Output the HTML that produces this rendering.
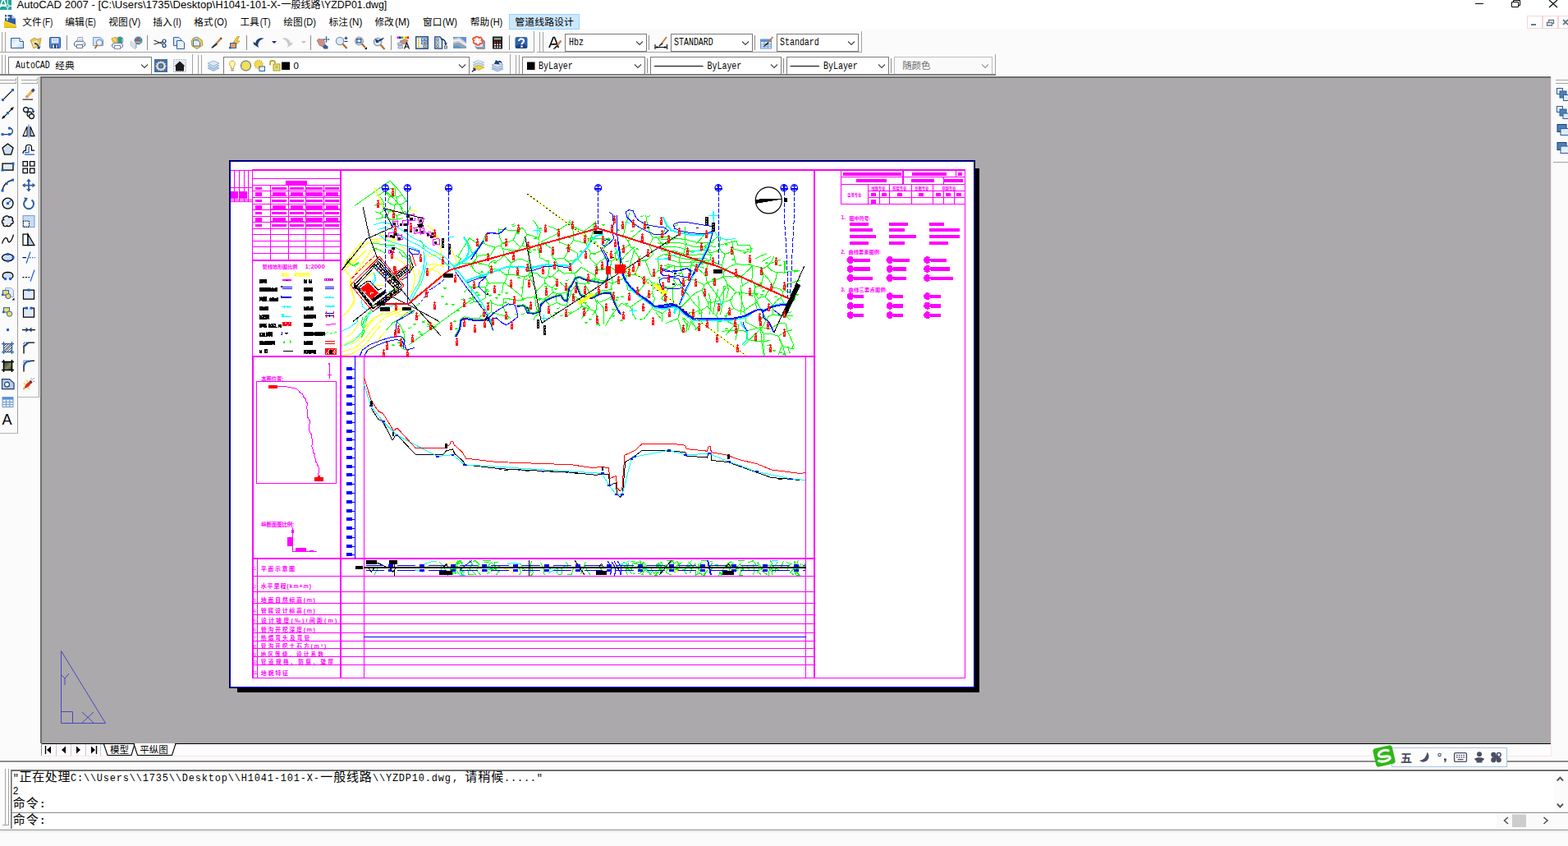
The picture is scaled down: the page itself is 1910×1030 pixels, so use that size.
<!DOCTYPE html>
<html lang="zh"><head><meta charset="utf-8"><title>AutoCAD 2007</title>
<style>
html,body{margin:0;padding:0;background:#fff;}
body{width:1910px;height:1030px;overflow:hidden;position:relative;font-family:"Liberation Sans",sans-serif;}
.l{position:absolute;}
#tb{left:0;top:35px;width:1910px;height:59px;background:#fbfbfb;}
#ld{left:0;top:94px;width:50px;height:832px;background:#fbfbfb;}
#rd{left:1889px;top:94px;width:21px;height:832px;background:#fbfbfb;}
#bt{left:0;top:905px;width:1910px;height:125px;background:#fbfbfb;}
#cv{left:49px;top:93px;width:1840px;height:812px;background:#aba9ac;border-top:2px solid #6e6e6e;border-left:2px solid #6e6e6e;box-sizing:border-box;}
svg{position:absolute;left:0;top:0;}
text{white-space:pre;}
.cj{font-family:"Liberation Sans","Noto Sans CJK SC",sans-serif;}
.cm{font-family:"Liberation Mono","Noto Sans CJK SC",monospace;}
</style></head><body>
<div class="l" id="tb"></div><div class="l" id="ld"></div><div class="l" id="rd"></div><div class="l" id="bt"></div><div class="l" id="cv"></div>
<svg id="dw" width="1910" height="1030" viewBox="0 0 1910 1030" shape-rendering="crispEdges">
<path d="M1187 205h6v638h-6zM289 837h904v6h-904zM279 195h909v643h-909z" fill="#000"/>
<path d="M280 196h907v641h-907z" fill="#0000ff"/>
<path d="M281 197h905v639h-905z" fill="#fff"/>
<path d="M307 206h869v2h-869zM307 206h1v228h-1zM307 433h2v393h-2zM307 825h869v1h-869zM1175 206h1v620h-1zM414 207h2v619h-2zM991 207h2v619h-2zM307 433h685v2h-685zM307 679h685v2h-685zM443 433h1v393h-1zM981 433h1v393h-1z" fill="#ff00ff"/>
<path d="M432 433h1v247h-1z" fill="#0000ff"/>
<path d="M281 207h26v1h-26zM285 207h1v38h-1zM291 207h1v38h-1zM297 207h1v38h-1zM302 207h1v38h-1zM281 228h26v1h-26zM281 243h26v1h-26zM281 245h26v1h-26zM281 233h9v9h-9zM292 233h9v9h-9zM307 701h685v1h-685zM307 720h685v1h-685zM307 734h685v1h-685zM307 748h685v1h-685zM307 759h685v1h-685zM307 770h685v1h-685zM307 780h685v1h-685zM307 789h685v1h-685zM307 799h685v1h-685zM307 809h685v1h-685zM313 680h1v146h-1z" fill="#ff00ff"/>
<path d="M443 775h539v1h-539z" fill="#0000ff"/>
<path d="M308 217h107v1h-107zM308 225h107v1h-107zM308 232h107v1h-107zM308 240h107v1h-107zM308 248h107v1h-107zM308 255h107v1h-107zM308 263h107v1h-107zM308 270h107v1h-107zM308 278h107v1h-107zM308 285h107v1h-107zM308 293h107v1h-107zM308 300h107v1h-107zM308 308h107v1h-107zM308 316h107v1h-107zM308 316h107v2h-107zM329 225h1v91h-1zM351 225h1v91h-1zM372 225h1v91h-1zM394 225h1v91h-1zM348 220h25.5v5h-25.5zM311 228h8v3.2h-8zM331 228h18v3.2h-18zM353 228h17v3.2h-17zM373 228h20v3.2h-20zM396 228h17v3.2h-17zM311 234h8v5h-8zM332 234h16v5h-16zM330 237.5h20v1.5h-20zM354 234h15v5h-15zM352 237.5h19v1.5h-19zM373 234h20v5h-20zM397 234h15v5h-15zM395 237.5h19v1.5h-19zM311 243h8v3.2h-8zM331 243h18v3.2h-18zM353 243h17v3.2h-17zM373 243h20v3.2h-20zM396 243h17v3.2h-17zM311 250h8v5h-8zM332 250h16v5h-16zM330 253.5h20v1.5h-20zM354 250h15v5h-15zM352 253.5h19v1.5h-19zM373 250h20v5h-20zM397 250h15v5h-15zM395 253.5h19v1.5h-19zM311 258h8v3.2h-8zM331 258h18v3.2h-18zM353 258h17v3.2h-17zM373 258h20v3.2h-20zM396 258h17v3.2h-17zM311 265h8v5h-8zM332 265h16v5h-16zM330 268.5h20v1.5h-20zM354 265h15v5h-15zM352 268.5h19v1.5h-19zM373 265h20v5h-20zM397 265h15v5h-15zM395 268.5h19v1.5h-19zM311 273h8v3.2h-8zM331 273h18v3.2h-18zM353 273h17v3.2h-17zM373 273h20v3.2h-20zM396 273h17v3.2h-17z" fill="#ff00ff"/>
<text class="cj" x="319.5" y="327.3" font-size="6.2" font-weight="bold" fill="#ff00ff" textLength="43">管线地形图比例</text>
<text class="cj" x="371.4" y="327.2" font-size="7.8" font-weight="bold" fill="#ff00ff" textLength="24.4">1:2000</text>
<text class="cj" x="342.4" y="336.3" font-size="5.1" font-weight="bold" fill="#ffff00" textLength="35.6">地形、地物图例</text>
<path d="M316.1 340h8.7v4.7h-8.7z" fill="#000"/>
<path d="M320.96 343.7h1v1h-1z" fill="#fff"/>
<path d="M316.1 350h21.9v5h-21.9z" fill="#000"/>
<path d="M332.66 350h1v1h-1zM333.58 350h1v1h-1zM329.71 350h1v1h-1z" fill="#fff"/>
<path d="M316 361h9.4v5.8h-9.4z" fill="#000"/>
<path d="M317.37 361h1v1h-1zM319.43 361h1v1h-1zM316.6 365.8h1v1h-1zM317.9 365.8h1v1h-1z" fill="#fff"/>
<path d="M327.7 361.5h11.1v5.3h-11.1z" fill="#000"/>
<path d="M329.7 361.5h1v1h-1zM334.01 361.5h1v1h-1zM328.22 361.5h1v1h-1zM335.47 361.5h1v1h-1zM336.4 361.5h1v1h-1z" fill="#fff"/>
<path d="M325.6 365.5h1.2v1.3h-1.2zM316 373.3h10.9v4.6h-10.9z" fill="#000"/>
<path d="M321.46 373.3h1v1h-1z" fill="#fff"/>
<path d="M316 383.4h11.7v5.6h-11.7z" fill="#000"/>
<path d="M318.32 383.4h1v1h-1zM326.17 388h1v1h-1zM316.72 383.4h1v1h-1zM319.14 385.26h1v1h-1zM322.36 385.95h1v1h-1z" fill="#fff"/>
<path d="M316 393.6h9.4v5.3h-9.4z" fill="#000"/>
<path d="M319.1 397.9h1v1h-1zM320.2 397.9h1v1h-1zM320.14 397.9h1v1h-1zM324.01 394.65h1v1h-1z" fill="#fff"/>
<path d="M327 393.6h8.9v5.3h-8.9z" fill="#000"/>
<path d="M330.08 395.53h1v1h-1zM333.17 395.44h1v1h-1zM333.56 395.64h1v1h-1zM328.8 393.6h1v1h-1z" fill="#fff"/>
<path d="M339.4 394.5h3.5v4.4h-3.5z" fill="#000"/>
<path d="M340.11 397.9h1v1h-1z" fill="#fff"/>
<path d="M336.4 397.6h1.2v1.3h-1.2zM316 404.5h6.5v5.5h-6.5z" fill="#000"/>
<path d="M318.15 406.39h1v1h-1zM317.7 406.66h1v1h-1z" fill="#fff"/>
<path d="M324.2 404h7.6v6h-7.6z" fill="#000"/>
<path d="M329.12 409h1v1h-1zM324.92 404h1v1h-1zM325.93 409h1v1h-1z" fill="#fff"/>
<path d="M322.8 408.5h1v1.5h-1zM316.1 415.2h18.9v4.7h-18.9z" fill="#000"/>
<path d="M332.39 418.9h1v1h-1zM321.34 415.2h1v1h-1z" fill="#fff"/>
<path d="M316 425.5h3v4.8h-3z" fill="#000"/>
<path d="M316.91 425.5h1v1h-1z" fill="#fff"/>
<path d="M321.9 425h4.1v5.3h-4.1z" fill="#000"/>
<path d="M324.32 427.44h1v1h-1z" fill="#fff"/>
<path d="M370 339.5h4.3v5.2h-4.3z" fill="#000"/>
<path d="M372.29 339.5h1v1h-1z" fill="#fff"/>
<path d="M375.5 339.5h4.6v5.2h-4.6z" fill="#000"/>
<path d="M378.09 340.68h1v1h-1zM377.55 339.5h1v1h-1z" fill="#fff"/>
<path d="M370 350h11v5h-11z" fill="#000"/>
<path d="M377.39 354h1v1h-1z" fill="#fff"/>
<path d="M370 361h11v4.9h-11z" fill="#000"/>
<path d="M378.18 364.9h1v1h-1z" fill="#fff"/>
<path d="M370 372.7h11.9v5.2h-11.9z" fill="#000"/>
<path d="M377.14 374.02h1v1h-1zM370.83 372.7h1v1h-1zM371.83 372.7h1v1h-1zM376.93 372.7h1v1h-1zM372.22 372.7h1v1h-1z" fill="#fff"/>
<path d="M370 383.2h14.8v4.6h-14.8z" fill="#000"/>
<path d="M381.57 386.8h1v1h-1zM372.35 383.2h1v1h-1z" fill="#fff"/>
<path d="M370 393h11v5h-11z" fill="#000"/>
<path d="M379.58 397h1v1h-1z" fill="#fff"/>
<path d="M370 404.1h25.9v4.7h-25.9z" fill="#000"/>
<path d="M393.74 407.8h1v1h-1zM382.09 407.8h1v1h-1zM381.88 404.1h1v1h-1z" fill="#fff"/>
<path d="M370 415.2h11v4.7h-11z" fill="#000"/>
<path d="M371.55 415.2h1v1h-1z" fill="#fff"/>
<path d="M370 425.5h15.4v5.2h-15.4z" fill="#000"/>
<path d="M379.09 429.7h1v1h-1zM372.97 427.58h1v1h-1zM381.21 429.7h1v1h-1zM371.36 429.7h1v1h-1zM380.02 429.7h1v1h-1zM375.48 429.7h1v1h-1z" fill="#fff"/>
<path d="M343.8 340h11.3v2h-11.3z" fill="#ff00ff"/>
<path d="M349 340.6h1v1h-1z" fill="#000"/>
<path d="M344 349h12v1h-12zM344 351h12v1h-12z" fill="#0000ff"/>
<path d="M342.3 348h2v1.5h-2z" fill="#000"/>
<path d="M342.3 361h12.7v2h-12.7z" fill="#0000ff"/>
<path d="M342.3 359.5h1v1.5h-1z" fill="#000"/>
<path d="M343 373h12v1h-12zM346 372h1v3h-1zM349.5 372h1v3h-1zM352 373h1v2h-1zM343.2 382h2.3v3.5h-2.3zM343.2 385h11.8v1h-11.8zM349 384h1v1h-1z" fill="#00ffff"/>
<path d="M344 392h11v5.2h-11z" fill="#ff0000"/>
<path d="M347 393h1.5v1h-1.5zM351.5 393h1.5v1h-1.5z" fill="#fff"/>
<path d="M348.5 394.5h3v1h-3z" fill="#ff00ff"/>
<path d="M349.5 396h1v1.2h-1z" fill="#fff"/>
<path d="M342.6 404.2h1v3h-1zM342 406.5h2.4v1h-2.4z" fill="#0000ff"/>
<path d="M347 404.5h3.6v1h-3.6zM348 405.5h1.6v1h-1.6z" fill="#000"/>
<path d="M345 416h2v1.6h-2zM346 415h1v1h-1zM353 414.2h1v3.8h-1zM354 415.5h1v1h-1z" fill="#00ff00"/>
<path d="M345.2 427h11.6v1h-11.6z" fill="#000"/>
<rect x="395.5" y="339.5" width="10" height="2" fill="none" stroke="#ff00ff"/>
<path d="M397 340h1v1h-1zM399.5 340h1v1h-1zM402 340h1v1h-1zM404.2 340h1v1h-1z" fill="#000"/>
<path d="M396 349h11v1h-11zM396 351.4h11v1h-11z" fill="#0000ff"/>
<path d="M395 362.3h12v1h-12zM397 361.3h1.5v1h-1.5zM401 361.3h1.5v1h-1.5zM404.5 361.3h1.5v1h-1.5zM396 372h12v1h-12zM397.5 373.4h9v1h-9z" fill="#00ffff"/>
<path d="M396 380.8h11v1h-11zM396 384.3h11v1h-11z" fill="#0000ff"/>
<path d="M396.5 378.6h1v3.4h-1zM396.5 383.4h1v3.4h-1zM406.3 378.6h1v3.4h-1zM406.3 383.4h1v3.4h-1z" fill="#ff0000"/>
<path d="M401.3 383.4h1v2.2h-1z" fill="#000"/>
<path d="M397 395.2h6v1h-6zM402.5 394.2h6.3v1h-6.3z" fill="#ff00ff"/>
<path d="M396 405.5h1.5v1.2h-1.5zM397.5 404.2h1.5v1.2h-1.5zM401.5 405.8h1.5v1.2h-1.5zM403 405h1.5v1.2h-1.5zM406.5 404.6h1.5v1.2h-1.5zM408 403.6h1.5v1.2h-1.5z" fill="#00ff00"/>
<path d="M396 414.8h12v1h-12zM396 417.5h12v1h-12zM396 424.2h13.8v7.3h-13.8z" fill="#ff0000"/>
<path d="M397.5 430.5L402 425.2M399.8 430.8L404.3 425.4M404.5 430.6L408.8 425.3M406.8 430.8L409 428" stroke="#fff" stroke-width="0.9" fill="none"/>
<path d="M401 425.8h4v5.2h-4z" fill="#000"/>
<path d="M401 442h1v19h-1zM400 442h2v2h-2zM399 456h5v1h-5z" fill="#ff00ff"/>
<text class="cj" x="318.2" y="464" font-size="6.3" font-weight="bold" fill="#ff00ff" textLength="27.2">本图位置:</text>
<rect x="312.5" y="464.5" width="97" height="124" fill="none" stroke="#ff00ff"/>
<path d="M327 469h10.5v3.5h-10.5zM383 581h10.7v4.8h-10.7zM386.5 579h3v2h-3z" fill="#ff0000"/>
<path d="M337.35 470.35L340.25 470.04L342.53 470.1L344.38 470.01L346.66 470.36L349.02 470.45L351.89 471.63L353.45 471.42L356.14 472.54L358.11 472.4L360.65 473.2L362.46 474.6L363.5 475.62L365.05 477.64L366.19 478.72L368.19 479.87L369.39 481.54L370.02 483.67L372.25 485.93L372.56 488.07L373.58 489.76L374.91 492.2L373.81 494.05L373.88 496.34L373.82 497.79L374.67 500.26L374.38 503.54L374.51 505.99L375.01 508.48L376.69 510.69L377.53 512.81L377.11 515.4L376.78 517.58L376.98 520.44L376.96 522.47L376.87 524.82L378.21 527.49L379.11 528.76L379.16 531.13L379.33 532.96L380.03 534.27L380.37 536.57L380.98 537.75L380.85 540.68L379.92 542.57L380.07 545.38L381.11 547.34L381.01 548.88L381.8 551.38L383.3 552.63L382.87 554.69L383.63 556.98L384.62 558.74L384.3 560.88L385.32 563.07L386.79 564.84L386.84 566.42L387.75 567.55L388.39 570.26L388.68 572.26L388.35 573.9L387.98 576.11L387.95 577.53L388.6 580" fill="none" stroke="#ff00ff" stroke-width="1"/>
<text class="cj" x="318.2" y="641.4" font-size="6.4" font-weight="bold" fill="#ff00ff" textLength="40">纵断面图比例:</text>
<path d="M355.5 642h1v29.5h-1zM354.5 645h3v4h-3zM350 654h5.5v11h-5.5zM355.5 671h30.5v1h-30.5zM359.5 667h13.5v4.5h-13.5zM377 669.5h5v2.5h-5z" fill="#ff00ff"/>
<text class="cj" x="308.7" y="694.1" font-size="5.7" fill="#ff00ff">1</text>
<text class="cj" x="317.8" y="694.7" font-size="7" font-weight="bold" fill="#ff00ff" textLength="41.2">平面示意图</text>
<text class="cj" x="308.7" y="715.6" font-size="5.7" fill="#ff00ff">2</text>
<text class="cj" x="317.7" y="715.9" font-size="7" font-weight="bold" fill="#ff00ff" textLength="61.4">水平里程(km+m)</text>
<text class="cj" x="308.6" y="733.1" font-size="5.7" fill="#ff00ff">3</text>
<text class="cj" x="317.7" y="733.4" font-size="7" font-weight="bold" fill="#ff00ff" textLength="66.2">地面自然标高(m)</text>
<text class="cj" x="308.6" y="745.6" font-size="5.7" fill="#ff00ff">4</text>
<text class="cj" x="317.7" y="745.9" font-size="7" font-weight="bold" fill="#ff00ff" textLength="66.2">管底设计标高(m)</text>
<text class="cj" x="308.6" y="757.6" font-size="5.7" fill="#ff00ff">5</text>
<text class="cj" x="317.8" y="757.9" font-size="7" font-weight="bold" fill="#ff00ff" textLength="92.5">设计坡度(‰)/间距(m)</text>
<text class="cj" x="308.7" y="769.1" font-size="5.7" fill="#ff00ff">6</text>
<text class="cj" x="317.7" y="769.4" font-size="7" font-weight="bold" fill="#ff00ff" textLength="66.2">管沟开挖深度(m)</text>
<text class="cj" x="308.7" y="778.6" font-size="5.7" fill="#ff00ff">7</text>
<text class="cj" x="317.7" y="778.9" font-size="6.7" font-weight="bold" fill="#ff00ff" textLength="59.5">热煨弯头及弯管</text>
<text class="cj" x="308.7" y="788.6" font-size="5.7" fill="#ff00ff">8</text>
<text class="cj" x="317.7" y="788.8" font-size="6.7" font-weight="bold" fill="#ff00ff" textLength="79.6">管沟开挖土石方(m³)</text>
<text class="cj" x="308.7" y="798.6" font-size="5.7" fill="#ff00ff">9</text>
<text class="cj" x="317.6" y="798.7" font-size="6.6" font-weight="bold" fill="#ff00ff" textLength="76.2">地区等级、设计系数</text>
<text class="cj" x="308.4" y="808.1" font-size="5.2" fill="#ff00ff" textLength="4.8">10</text>
<text class="cj" x="317.7" y="808.3" font-size="6.6" font-weight="bold" fill="#ff00ff" textLength="88.4">管道规格、防腐、壁厚</text>
<text class="cj" x="308.4" y="821.1" font-size="5.2" fill="#ff00ff" textLength="4.8">11</text>
<text class="cj" x="317.7" y="821.5" font-size="7" font-weight="bold" fill="#ff00ff" textLength="33.3">地貌特征</text>
<path d="M1024 207h1v42h-1zM1024 215h152v1h-152zM1024 224h152v1h-152zM1024 248h152v1h-152zM1057 232h119v1h-119zM1057 240h119v1h-119zM1099 207h2v17h-2zM1164 207h1v8h-1zM1149 215h1v9h-1zM1057 224h1v24h-1zM1083 224h1v24h-1zM1110 224h1v24h-1zM1136 224h1v24h-1zM1071 232h1v16h-1zM1149 232h1v16h-1zM1162 232h1v16h-1zM1026.6 209.5h71v4h-71zM1111 209.5h42v4h-42zM1166.7 209.5h5v4h-5zM1043 218h36.5v4.2h-36.5zM1110 218h27.7v4.2h-27.7zM1150.3 218h22.7v4.2h-22.7z" fill="#ff00ff"/>
<text class="cj" x="1061.2" y="230.6" font-size="4.4" font-weight="bold" fill="#ff00ff" textLength="17.3">线路专业</text>
<text class="cj" x="1087.3" y="230.6" font-size="4.4" font-weight="bold" fill="#ff00ff" textLength="17.2">防腐专业</text>
<text class="cj" x="1114.1" y="230.6" font-size="4.4" font-weight="bold" fill="#ff00ff" textLength="17.4">总图专业</text>
<text class="cj" x="1147.2" y="230.6" font-size="4.4" font-weight="bold" fill="#ff00ff" textLength="17.3">穿越专业</text>
<text class="cj" x="1032.1" y="238.6" font-size="4.4" font-weight="bold" fill="#ff00ff" textLength="17.4">会签专业</text>
<path d="M1061 234.5h5.5v4h-5.5zM1074 234.5h5.5v4h-5.5zM1093 234.5h5.5v4h-5.5zM1119 234.5h5.5v4h-5.5zM1140 234.5h5.5v4h-5.5zM1152 234.5h5.5v4h-5.5zM1165 234.5h5.5v4h-5.5zM1061 242.5h5.5v5h-5.5z" fill="#ff00ff"/>
<text class="cj" x="1024.6" y="267.2" font-size="6.5" font-weight="bold" fill="#ff00ff">1.</text>
<text class="cj" x="1034.5" y="267.6" font-size="6.2" font-weight="bold" fill="#ff00ff" textLength="26">图中符号:</text>
<path d="M1035 270.8h22.7v4h-22.7zM1083 270.8h22.7v4h-22.7zM1131.8 270.8h18v4h-18zM1035 278.4h27.8v4h-27.8zM1083 278.4h18.7v4h-18.7zM1131.8 278.4h37.4v4h-37.4zM1035 286h32v4h-32zM1083 286h32.8v4h-32.8zM1131.8 286h37.4v4h-37.4zM1035 293.5h22.7v4h-22.7zM1083 293.5h18.7v4h-18.7zM1131.8 293.5h22.7v4h-22.7z" fill="#ff00ff"/>
<text class="cj" x="1024.2" y="309" font-size="6.5" font-weight="bold" fill="#ff00ff">2.</text>
<text class="cj" x="1033.6" y="309.4" font-size="6.2" font-weight="bold" fill="#ff00ff" textLength="39.5">曲线要素图例:</text>
<circle cx="1035.9" cy="316.5" r="4.4" fill="#ff00ff"/>
<path d="M1040.3 314.5h19.6v4.6h-19.6z" fill="#ff00ff"/>
<path d="M1038.5 314h1v1h-1zM1038.5 318h1v1h-1z" fill="#fff"/>
<circle cx="1083.9" cy="316.5" r="4.4" fill="#ff00ff"/>
<path d="M1088.3 314.5h19.7v4.6h-19.7z" fill="#ff00ff"/>
<path d="M1086.5 314h1v1h-1zM1086.5 318h1v1h-1z" fill="#fff"/>
<circle cx="1129.6" cy="316.5" r="4.4" fill="#ff00ff"/>
<path d="M1134 314.5h18.9v4.6h-18.9z" fill="#ff00ff"/>
<path d="M1132.2 314h1v1h-1zM1132.2 318h1v1h-1z" fill="#fff"/>
<circle cx="1035.9" cy="327.4" r="4.4" fill="#ff00ff"/>
<path d="M1040.3 325.4h19.6v4.6h-19.6z" fill="#ff00ff"/>
<path d="M1038.5 324.9h1v1h-1zM1038.5 328.9h1v1h-1z" fill="#fff"/>
<circle cx="1083.9" cy="327.4" r="4.4" fill="#ff00ff"/>
<path d="M1088.3 325.4h15.7v4.6h-15.7z" fill="#ff00ff"/>
<path d="M1086.5 324.9h1v1h-1zM1086.5 328.9h1v1h-1z" fill="#fff"/>
<circle cx="1129.6" cy="327.4" r="4.4" fill="#ff00ff"/>
<path d="M1134 325.4h23v4.6h-23z" fill="#ff00ff"/>
<path d="M1132.2 324.9h1v1h-1zM1132.2 328.9h1v1h-1z" fill="#fff"/>
<circle cx="1035.9" cy="338.5" r="4.4" fill="#ff00ff"/>
<path d="M1040.3 336.5h22.7v4.6h-22.7z" fill="#ff00ff"/>
<path d="M1038.5 336h1v1h-1zM1038.5 340h1v1h-1z" fill="#fff"/>
<circle cx="1083.9" cy="338.5" r="4.4" fill="#ff00ff"/>
<path d="M1088.3 336.5h15.7v4.6h-15.7z" fill="#ff00ff"/>
<path d="M1086.5 336h1v1h-1zM1086.5 340h1v1h-1z" fill="#fff"/>
<circle cx="1129.6" cy="338.5" r="4.4" fill="#ff00ff"/>
<path d="M1134 336.5h27v4.6h-27z" fill="#ff00ff"/>
<path d="M1132.2 336h1v1h-1zM1132.2 340h1v1h-1z" fill="#fff"/>
<text class="cj" x="1024.2" y="354.5" font-size="6.5" font-weight="bold" fill="#ff00ff">3.</text>
<text class="cj" x="1033.6" y="354.9" font-size="6.2" font-weight="bold" fill="#ff00ff" textLength="47.3">曲线三要点图例:</text>
<circle cx="1035.9" cy="360.7" r="4.4" fill="#ff00ff"/>
<path d="M1040.3 358.7h11.6v4.6h-11.6z" fill="#ff00ff"/>
<path d="M1038.5 358.2h1v1h-1zM1038.5 362.2h1v1h-1z" fill="#fff"/>
<circle cx="1083.9" cy="360.7" r="4.4" fill="#ff00ff"/>
<path d="M1088.3 358.7h11.7v4.6h-11.7z" fill="#ff00ff"/>
<path d="M1086.5 358.2h1v1h-1zM1086.5 362.2h1v1h-1z" fill="#fff"/>
<circle cx="1129.6" cy="360.7" r="4.4" fill="#ff00ff"/>
<path d="M1134 358.7h12v4.6h-12z" fill="#ff00ff"/>
<path d="M1132.2 358.2h1v1h-1zM1132.2 362.2h1v1h-1z" fill="#fff"/>
<circle cx="1035.9" cy="372.3" r="4.4" fill="#ff00ff"/>
<path d="M1040.3 370.3h11.6v4.6h-11.6z" fill="#ff00ff"/>
<path d="M1038.5 369.8h1v1h-1zM1038.5 373.8h1v1h-1z" fill="#fff"/>
<circle cx="1083.9" cy="372.3" r="4.4" fill="#ff00ff"/>
<path d="M1088.3 370.3h11.7v4.6h-11.7z" fill="#ff00ff"/>
<path d="M1086.5 369.8h1v1h-1zM1086.5 373.8h1v1h-1z" fill="#fff"/>
<circle cx="1129.6" cy="372.3" r="4.4" fill="#ff00ff"/>
<path d="M1134 370.3h12v4.6h-12z" fill="#ff00ff"/>
<path d="M1132.2 369.8h1v1h-1zM1132.2 373.8h1v1h-1z" fill="#fff"/>
<circle cx="1035.9" cy="383.7" r="4.4" fill="#ff00ff"/>
<path d="M1040.3 381.7h11.6v4.6h-11.6z" fill="#ff00ff"/>
<path d="M1038.5 381.2h1v1h-1zM1038.5 385.2h1v1h-1z" fill="#fff"/>
<circle cx="1083.9" cy="383.7" r="4.4" fill="#ff00ff"/>
<path d="M1088.3 381.7h11.7v4.6h-11.7z" fill="#ff00ff"/>
<path d="M1086.5 381.2h1v1h-1zM1086.5 385.2h1v1h-1z" fill="#fff"/>
<circle cx="1129.6" cy="383.7" r="4.4" fill="#ff00ff"/>
<path d="M1134 381.7h12v4.6h-12z" fill="#ff00ff"/>
<path d="M1132.2 381.2h1v1h-1zM1132.2 385.2h1v1h-1z" fill="#fff"/>
<path d="M422 447h7v4h-7zM429 449h3v1h-3zM422 458h7v4h-7zM429 460h3v1h-3zM422 469h7v4h-7zM429 471h3v1h-3zM422 480h7v4h-7zM429 482h3v1h-3zM422 490h7v4h-7zM429 492h3v1h-3zM422 501h7v4h-7zM429 503h3v1h-3zM422 512h7v4h-7zM429 514h3v1h-3zM422 523h7v4h-7zM429 525h3v1h-3zM422 533h7v4h-7zM429 535h3v1h-3zM422 544h7v4h-7zM429 546h3v1h-3zM422 555h7v4h-7zM429 557h3v1h-3zM422 566h7v4h-7zM429 568h3v1h-3zM422 576h7v4h-7zM429 578h3v1h-3zM422 587h7v4h-7zM429 589h3v1h-3zM422 598h7v4h-7zM429 600h3v1h-3zM422 609h7v4h-7zM429 611h3v1h-3zM422 620h7v4h-7zM429 622h3v1h-3zM422 630h7v4h-7zM429 632h3v1h-3zM422 641h7v4h-7zM429 643h3v1h-3zM422 652h7v4h-7zM429 654h3v1h-3zM422 663h7v4h-7zM429 665h3v1h-3zM422 673h7v4h-7zM429 675h3v1h-3z" fill="#0000ff"/>
<path d="M452.2 497L461 510.8L465.6 512L478.2 536L482.7 528.5L506 553.2L540 553.2L543.8 548.7L551.4 546.9L553.9 552.4L564 561.3L566.5 565.8L608.2 570.6L696.5 575.2L724.3 578.2L741.5 577.2L742.7 590.8L750.3 587.8L751.5 601.7L755.3 605.4L758.4 601.7L761.6 562.5L773 555.5L782.3 548.2L798.2 548.2L834.8 550.4L836.1 555L861.3 557L863.8 551.2L865.9 551.2L866.9 560.5L886.6 562.5L939.6 581.5L972.4 584" fill="none" stroke="#000" stroke-width="1"/>
<path d="M443.4 467.9L451.7 494.4L466.8 513.3L483.2 529.7L532.5 555.5L551.4 553.7L565.8 565.8L733.5 576.4L741.5 590.8L750.3 601.7L757.9 602.4L769.2 558.8L773 556.2L814.6 548.2L834.8 553.7L863.8 552.4L887.8 562L921.9 574.4L962.3 582.7L981.2 584.5" fill="none" stroke="#00ffff" stroke-width="1"/>
<path d="M443.4 459L452.2 488L461 500.7L466.8 503.7L479.5 524.7L483.8 521L506 545.4L541.3 545.4L547.6 541.6L549.4 537.3L551.9 537.3L553.2 541.6L562.7 550L567.8 558.2L605.6 562.5L696.5 565.8L721.7 569.6L732.6 568.3L741.5 569.6L742.7 582.7L750.3 579.4L752 594.6L755.3 597.9L757.9 594.6L760.9 554.2L773 548.7L782.3 540.3L819.7 540.3L834.8 542.3L836.1 546.6L861.3 549.2L863.3 543.1L865.1 543.1L866.4 550.7L884 553.7L901.7 560L921.9 564.6L939.6 571.9L973.6 576.4L981.2 575.7" fill="none" stroke="#ff0000" stroke-width="1"/>
<path d="M450.2 493.4h3.5v2h-3.5zM465.3 512.3h3.5v2h-3.5zM481.7 528.7h3.5v2h-3.5zM531 554.5h3.5v2h-3.5zM549.9 552.7h3.5v2h-3.5zM564.3 564.8h3.5v2h-3.5zM732 575.4h3.5v2h-3.5zM740 589.8h3.5v2h-3.5zM748.8 600.7h3.5v2h-3.5zM756.4 601.4h3.5v2h-3.5zM767.7 557.8h3.5v2h-3.5zM771.5 555.2h3.5v2h-3.5zM813.1 547.2h3.5v2h-3.5zM833.3 552.7h3.5v2h-3.5zM862.3 551.4h3.5v2h-3.5zM886.3 561h3.5v2h-3.5zM920.4 573.4h3.5v2h-3.5zM960.8 581.7h3.5v2h-3.5zM607.5 570.5h3.5v1.5h-3.5zM630.5 571.8h3.5v1.5h-3.5zM659.5 573.1h3.5v1.5h-3.5zM688.5 574.7h3.5v1.5h-3.5zM900.5 567h3.5v1.5h-3.5z" fill="#0000ff"/>
<path d="M451.2 488h2.5v5.5h-2.5zM477.7 525.5h2.5v5.5h-2.5zM542.3 540.1h2.5v5.5h-2.5zM732.8 567.9h2.5v5.5h-2.5zM886.3 553.2h2.5v5.5h-2.5zM614 571.6h5v1h-5zM640 572.8h5v1h-5zM670 574.4h5v1h-5zM700 576h5v1h-5zM948 582.5h5v1h-5zM969 584h5v1h-5z" fill="#000"/>
<path d="M541.27 688.9L541.54 692.41L545.26 700L545.89 700" fill="none" stroke="#00ff00" stroke-width="1"/>
<path d="M578.46 682.03L583.72 687.03L580.31 694.29L585.45 700" fill="none" stroke="#00ff00" stroke-width="1"/>
<path d="M683.48 691.95L685.25 694.19L683.87 699.68L680.14 700" fill="none" stroke="#00ff00" stroke-width="1"/>
<path d="M647.7 683.55L644.07 692.04L644.06 697.91" fill="none" stroke="#00ff00" stroke-width="1"/>
<path d="M634.35 686.85L636.66 692.14L640.69 694.66" fill="none" stroke="#00ff00" stroke-width="1"/>
<path d="M558.23 688.74L554.58 694.07L558.67 697.48" fill="none" stroke="#00ff00" stroke-width="1"/>
<path d="M937.82 690.88L936.03 699.56L936.54 700L936.87 700" fill="none" stroke="#00ff00" stroke-width="1"/>
<path d="M891.25 683.59L886.28 686.08L887.87 691.74L889.16 695.97" fill="none" stroke="#00ff00" stroke-width="1"/>
<path d="M967.54 683.13L969.43 690.96L968.09 698.3" fill="none" stroke="#00ff00" stroke-width="1"/>
<path d="M941.24 684.46L936.96 692.15L940.5 696.78" fill="none" stroke="#00ff00" stroke-width="1"/>
<path d="M812.39 688.76L811.87 697.68L817.45 700" fill="none" stroke="#00ff00" stroke-width="1"/>
<path d="M916.9 686.91L919.23 695.46L916.94 700L916.77 700" fill="none" stroke="#00ff00" stroke-width="1"/>
<path d="M842.76 682.57L838.33 686.38L836.52 691.32L833.4 693.8" fill="none" stroke="#00ff00" stroke-width="1"/>
<path d="M631.82 690.99L635.02 696.34L632.8 700" fill="none" stroke="#00ff00" stroke-width="1"/>
<path d="M729.9 689.29L735.38 697.58L734.41 700" fill="none" stroke="#00ff00" stroke-width="1"/>
<path d="M647.86 689.73L649.25 697.67L647.64 700L645.68 700" fill="none" stroke="#00ff00" stroke-width="1"/>
<path d="M460.35 691.54L458.26 695.82L456.01 700" fill="none" stroke="#00ff00" stroke-width="1"/>
<path d="M675.24 688.83L671.7 691.5L667.74 693.67" fill="none" stroke="#00ff00" stroke-width="1"/>
<path d="M688.71 683.41L690.91 686.29L691.84 690.56" fill="none" stroke="#00ff00" stroke-width="1"/>
<path d="M713.29 684.2L710.29 692.2L707.51 699.41" fill="none" stroke="#00ff00" stroke-width="1"/>
<path d="M850.94 688.04L854.64 690.09L854.74 692.54" fill="none" stroke="#00ff00" stroke-width="1"/>
<path d="M854.53 683.75L852.31 690.63L850.76 692.92" fill="none" stroke="#00ff00" stroke-width="1"/>
<path d="M658.38 685.09L662.37 692.72L662.76 698.73L663.76 700" fill="none" stroke="#00ff00" stroke-width="1"/>
<path d="M766.06 685.24L764.27 691.61L767.61 694.94L769.39 699.22" fill="none" stroke="#00ff00" stroke-width="1"/>
<path d="M560.29 682.65L556.48 685.19L552.28 692.89L555.64 698.02" fill="none" stroke="#00ff00" stroke-width="1"/>
<path d="M779.99 682.2L780.17 687.79L784.8 690.28L780.07 696.91" fill="none" stroke="#00ff00" stroke-width="1"/>
<path d="M763.26 686.05L763.28 689.7L762.52 695.11L764.47 700" fill="none" stroke="#00ff00" stroke-width="1"/>
<path d="M712.26 689.17L715.83 695.56L719.17 700" fill="none" stroke="#00ff00" stroke-width="1"/>
<path d="M904.21 688.99L901.91 697.41L901.15 700L905.22 700" fill="none" stroke="#00ff00" stroke-width="1"/>
<path d="M972.36 682.06L969.58 690.19L972.46 692.83L969.39 698.49" fill="none" stroke="#00ff00" stroke-width="1"/>
<path d="M779.24 685.75L785.06 694.69L781.89 699.72L784.35 700" fill="none" stroke="#00ff00" stroke-width="1"/>
<path d="M759.22 683.89L764.68 688.14L762.48 696.06" fill="none" stroke="#00ff00" stroke-width="1"/>
<path d="M535.23 684L538.11 687.1L537.43 691.91L537.5 698.57" fill="none" stroke="#00ff00" stroke-width="1"/>
<path d="M805.2 688.68L801.28 697.5L798.65 700L800.58 700" fill="none" stroke="#00ff00" stroke-width="1"/>
<path d="M647.3 682.75L646.68 687.84L646.63 696.77" fill="none" stroke="#00ff00" stroke-width="1"/>
<path d="M947.43 683.48L944.53 688.07L939.56 691.24L940.84 699.62" fill="none" stroke="#00ff00" stroke-width="1"/>
<path d="M681.02 690.41L678.09 695.23L679.16 698.8L682.98 700" fill="none" stroke="#00ff00" stroke-width="1"/>
<path d="M938.86 690.84L941.11 693.35L940.9 700" fill="none" stroke="#00ff00" stroke-width="1"/>
<path d="M972.31 688.58L967.96 696.29L969.64 700" fill="none" stroke="#00ff00" stroke-width="1"/>
<path d="M701.39 690L698.07 693.08L696.24 699.56L691.34 700" fill="none" stroke="#00ff00" stroke-width="1"/>
<path d="M804.46 683.86L806.92 687.19L804.89 689.6" fill="none" stroke="#00ff00" stroke-width="1"/>
<path d="M811.04 688.53L806.39 692.16L805.34 695.91" fill="none" stroke="#00ff00" stroke-width="1"/>
<path d="M559.06 683.94L554.92 691.73L552.27 694.01L551.15 699.74" fill="none" stroke="#00ff00" stroke-width="1"/>
<path d="M783.56 683.74L783.99 686.88L788.36 694.52L793.33 700" fill="none" stroke="#00ff00" stroke-width="1"/>
<path d="M568.65 689.78L574.33 694.51L579.69 700" fill="none" stroke="#00ff00" stroke-width="1"/>
<path d="M597.81 682.18L594.06 682L588.39 682" fill="none" stroke="#00ff00" stroke-width="1"/>
<path d="M594.9 684.92L595.41 684.28L592.35 684.97L590.07 684.82" fill="none" stroke="#00ff00" stroke-width="1"/>
<path d="M596.1 697.28L593.21 699.07" fill="none" stroke="#00ff00" stroke-width="1"/>
<path d="M569.52 692.75L570.97 699.67L576.82 700" fill="none" stroke="#00ff00" stroke-width="1"/>
<path d="M595.33 697.75L592.07 693.14L598.13 693.94L603.77 694.62" fill="none" stroke="#00ff00" stroke-width="1"/>
<path d="M554.86 685.84L556.84 685.88L557.27 682.36" fill="none" stroke="#00ff00" stroke-width="1"/>
<path d="M560.58 684.95L557.47 685.15L552 690.32" fill="none" stroke="#00ff00" stroke-width="1"/>
<path d="M560.17 694.63L561.8 699.06L565.37 700" fill="none" stroke="#00ff00" stroke-width="1"/>
<path d="M610.58 688.03L605.01 692.14L610.27 689.99" fill="none" stroke="#00ff00" stroke-width="1"/>
<path d="M600.27 689.33L597.23 692.87L601.79 693.15" fill="none" stroke="#00ff00" stroke-width="1"/>
<path d="M550.52 687.93L551.01 687.93" fill="none" stroke="#00ff00" stroke-width="1"/>
<path d="M571.92 692.06L575.27 686.98L572.6 682.33L575.13 685.88" fill="none" stroke="#00ff00" stroke-width="1"/>
<path d="M576.36 684L578.1 682.33" fill="none" stroke="#00ff00" stroke-width="1"/>
<path d="M601.32 693.94L603.56 689.84" fill="none" stroke="#00ff00" stroke-width="1"/>
<path d="M600.19 686.24L602.22 688.64L602.9 684.38L606.92 684.81" fill="none" stroke="#00ff00" stroke-width="1"/>
<path d="M549.06 696.41L549.85 690.53L554.81 688.21L552.22 692.94" fill="none" stroke="#00ff00" stroke-width="1"/>
<path d="M550.87 694.1L553.38 688.37L556.8 690.1L556.57 690.61" fill="none" stroke="#00ff00" stroke-width="1"/>
<path d="M608.58 687.98L602.86 694.35L598.71 693.57L598.48 695.99" fill="none" stroke="#00ff00" stroke-width="1"/>
<path d="M593.01 691.38L597.28 685.64L599.64 685.55" fill="none" stroke="#00ff00" stroke-width="1"/>
<path d="M561.17 691.39L564.91 689.87L560.91 684.05L558.44 687.05" fill="none" stroke="#00ff00" stroke-width="1"/>
<path d="M566.15 697.43L562.58 693.4L564.69 698.42" fill="none" stroke="#00ff00" stroke-width="1"/>
<path d="M561.15 683.79L563.51 685.96L559.1 682L562.2 682" fill="none" stroke="#00ff00" stroke-width="1"/>
<path d="M548.15 694.48L549.94 689.73" fill="none" stroke="#00ff00" stroke-width="1"/>
<path d="M560.04 691.23L563.12 695.79L562.31 700L566.8 700" fill="none" stroke="#00ff00" stroke-width="1"/>
<path d="M603.61 688.68L604.09 694.27L608.11 695.81L604.48 700" fill="none" stroke="#00ff00" stroke-width="1"/>
<path d="M552.11 697.44L555.46 698.33L551.59 696.76" fill="none" stroke="#00ff00" stroke-width="1"/>
<path d="M903.73 692.5L909.65 690.31L905.15 691.91" fill="none" stroke="#00ff00" stroke-width="1"/>
<path d="M864.57 695.13L868.37 691.07" fill="none" stroke="#00ff00" stroke-width="1"/>
<path d="M825.15 683.79L827.96 689.58L822.6 693.27L827.35 693.94" fill="none" stroke="#00ff00" stroke-width="1"/>
<path d="M780.49 697.56L781.73 696.29" fill="none" stroke="#00ff00" stroke-width="1"/>
<path d="M800.84 689.91L802.75 689.56L806.76 683.81" fill="none" stroke="#00ff00" stroke-width="1"/>
<path d="M868.11 684.6L864.89 689.89" fill="none" stroke="#00ff00" stroke-width="1"/>
<path d="M831.45 692.67L836.5 699.21" fill="none" stroke="#00ff00" stroke-width="1"/>
<path d="M811.96 687.67L808.43 690.79L814.12 687.15" fill="none" stroke="#00ff00" stroke-width="1"/>
<path d="M838.48 684.29L844.07 689.29L839.96 692.12" fill="none" stroke="#00ff00" stroke-width="1"/>
<path d="M927.63 692.81L933.06 690.01" fill="none" stroke="#00ff00" stroke-width="1"/>
<path d="M977.28 687.24L980 691.42L980 685.78" fill="none" stroke="#00ff00" stroke-width="1"/>
<path d="M884.71 696.66L889.04 698.62" fill="none" stroke="#00ff00" stroke-width="1"/>
<path d="M921.39 694.64L927.01 699.34" fill="none" stroke="#00ff00" stroke-width="1"/>
<path d="M973.24 689.99L975.89 686.74L972.06 692.47L971.01 698.54" fill="none" stroke="#00ff00" stroke-width="1"/>
<path d="M927.17 690.31L922.95 684.36" fill="none" stroke="#00ff00" stroke-width="1"/>
<path d="M777.45 689.27L772.08 691.55L767.53 692.18" fill="none" stroke="#00ff00" stroke-width="1"/>
<path d="M822.37 689.14L820.16 693.1L826.52 694.31L824.15 688.38" fill="none" stroke="#00ff00" stroke-width="1"/>
<path d="M847.45 694.67L847.48 700L852.93 697.45" fill="none" stroke="#00ff00" stroke-width="1"/>
<path d="M834.17 690.48L840.34 689.06L842.56 693.7L840.18 697.89" fill="none" stroke="#00ff00" stroke-width="1"/>
<path d="M757.8 687.45L762.06 690.46" fill="none" stroke="#00ff00" stroke-width="1"/>
<path d="M868.52 682.68L864.78 684.13" fill="none" stroke="#00ff00" stroke-width="1"/>
<path d="M879.47 695.59L881.55 691.79L885.45 687.06" fill="none" stroke="#00ff00" stroke-width="1"/>
<path d="M962.21 686.93L960.46 690.39L959.45 694.72" fill="none" stroke="#00ff00" stroke-width="1"/>
<path d="M822.49 696.84L819.67 695.02" fill="none" stroke="#00ff00" stroke-width="1"/>
<path d="M824.23 688.93L831.18 684.02" fill="none" stroke="#00ff00" stroke-width="1"/>
<path d="M970.17 696.69L973.42 700L969.81 700" fill="none" stroke="#00ff00" stroke-width="1"/>
<path d="M853.85 682.8L859.71 682L863 682.32" fill="none" stroke="#00ff00" stroke-width="1"/>
<path d="M957.94 684.67L963.76 686.68L957.87 690.65L964.72 691.42" fill="none" stroke="#00ff00" stroke-width="1"/>
<path d="M916.51 682.03L921.84 688.85" fill="none" stroke="#00ff00" stroke-width="1"/>
<path d="M969.02 683.44L967.75 685.32L966.92 685.05" fill="none" stroke="#00ff00" stroke-width="1"/>
<path d="M922.7 684.98L925.01 691.62L922.93 697.67" fill="none" stroke="#00ff00" stroke-width="1"/>
<path d="M788.43 696.69L786.51 694.1L785.09 695.08L780.6 696.01" fill="none" stroke="#00ff00" stroke-width="1"/>
<path d="M768.29 683.26L773.84 683.24" fill="none" stroke="#00ff00" stroke-width="1"/>
<path d="M861.46 690.25L864.01 690.4" fill="none" stroke="#00ff00" stroke-width="1"/>
<path d="M927.47 692.97L925.59 694.64L925.88 694.1" fill="none" stroke="#00ff00" stroke-width="1"/>
<path d="M807.76 696.37L804.41 692.7L805.44 699.18" fill="none" stroke="#00ff00" stroke-width="1"/>
<path d="M793.55 697.1L791 700" fill="none" stroke="#00ff00" stroke-width="1"/>
<path d="M850.59 690.56L851.12 685.69" fill="none" stroke="#00ff00" stroke-width="1"/>
<path d="M890.7 694.96L895.72 696.28" fill="none" stroke="#00ff00" stroke-width="1"/>
<path d="M770.83 697.9L773.88 698.53" fill="none" stroke="#00ff00" stroke-width="1"/>
<path d="M879.49 697.52L876.57 697.12L876.03 700L878.8 697.39" fill="none" stroke="#00ff00" stroke-width="1"/>
<path d="M910.02 688.9L913.27 695.49" fill="none" stroke="#00ff00" stroke-width="1"/>
<path d="M849.34 696.27L856.24 700L858.43 700L858.82 700" fill="none" stroke="#00ff00" stroke-width="1"/>
<path d="M954.51 682.95L951.79 689.44L952.67 690.12" fill="none" stroke="#00ff00" stroke-width="1"/>
<path d="M815.28 684.57L820.5 682" fill="none" stroke="#00ff00" stroke-width="1"/>
<path d="M901.8 696.51L905.82 692.75" fill="none" stroke="#00ff00" stroke-width="1"/>
<path d="M888.51 693.54L890.37 687.98L885.03 690.73L889.78 692.12" fill="none" stroke="#00ff00" stroke-width="1"/>
<path d="M797.27 697.37L801.94 697.39L796.48 693.55" fill="none" stroke="#00ff00" stroke-width="1"/>
<path d="M798.15 691.38L800.29 687.51L804.72 686.49L800.25 689.2" fill="none" stroke="#00ff00" stroke-width="1"/>
<path d="M899.43 695.26L894.9 693.64" fill="none" stroke="#00ff00" stroke-width="1"/>
<path d="M782.42 688.1L780.8 687.32L784.29 684.87L788.85 690.77" fill="none" stroke="#00ff00" stroke-width="1"/>
<path d="M768.89 694.26L770.38 690.17L771.09 685.32L776.05 685.25" fill="none" stroke="#00ff00" stroke-width="1"/>
<path d="M848.02 689.23L851.92 694.72L856.34 694.07" fill="none" stroke="#00ff00" stroke-width="1"/>
<path d="M899.4 682.87L902.6 682L902.74 682L907.08 682" fill="none" stroke="#00ff00" stroke-width="1"/>
<path d="M929.59 696.78L928.53 695.23L934.82 700" fill="none" stroke="#00ff00" stroke-width="1"/>
<path d="M798.92 687.8L802.75 685.48L802.56 691.98" fill="none" stroke="#00ff00" stroke-width="1"/>
<path d="M776.94 686.39L772.46 686.86L774.96 685.01L779.93 684.52" fill="none" stroke="#00ff00" stroke-width="1"/>
<path d="M843.16 690.42L847.33 686.23" fill="none" stroke="#00ff00" stroke-width="1"/>
<path d="M877.82 696.88L876.65 696.13" fill="none" stroke="#00ff00" stroke-width="1"/>
<path d="M878.26 697.14L878.65 700L882.43 695.89" fill="none" stroke="#00ff00" stroke-width="1"/>
<path d="M934.64 688.39L941.16 688.8L940.57 685.75L938.16 682.43" fill="none" stroke="#00ff00" stroke-width="1"/>
<path d="M794.17 693.68L792.51 692.85" fill="none" stroke="#00ff00" stroke-width="1"/>
<path d="M910.88 685.16L916.93 682.82" fill="none" stroke="#00ff00" stroke-width="1"/>
<path d="M777.58 691.32L782.98 695.23L777.45 699.06" fill="none" stroke="#00ff00" stroke-width="1"/>
<path d="M945.01 696.69L944.51 691.49L951.28 695.14" fill="none" stroke="#00ff00" stroke-width="1"/>
<path d="M817.2 682.31L811.63 682.61" fill="none" stroke="#00ff00" stroke-width="1"/>
<path d="M967.29 688.2L967.32 692.02L962.37 697.1L966.96 700" fill="none" stroke="#00ff00" stroke-width="1"/>
<path d="M814.9 687.08L818.25 682.79" fill="none" stroke="#00ff00" stroke-width="1"/>
<path d="M889.05 684.7L893.81 685.36" fill="none" stroke="#00ff00" stroke-width="1"/>
<path d="M792.72 691.86L796.99 698.58" fill="none" stroke="#00ff00" stroke-width="1"/>
<path d="M814.27 693.11L818.59 691.61" fill="none" stroke="#00ff00" stroke-width="1"/>
<path d="M861.84 694.54L856.75 700L860.36 698.42" fill="none" stroke="#00ff00" stroke-width="1"/>
<path d="M874.8 687.39L870.84 687.59" fill="none" stroke="#00ff00" stroke-width="1"/>
<path d="M900.16 692.24L896.3 693.14L896.54 690.5L902.47 686.37" fill="none" stroke="#00ff00" stroke-width="1"/>
<path d="M814.59 682.65L820.44 684.13L820.66 686.43L825.46 683.06" fill="none" stroke="#00ff00" stroke-width="1"/>
<path d="M740 683L744 689L745 695L743 700" fill="none" stroke="#0000ff" stroke-width="1"/>
<path d="M745 684L749 690L750 696L748 701" fill="none" stroke="#0000ff" stroke-width="1"/>
<path d="M752 683L756 689L757 695L755 700" fill="none" stroke="#0000ff" stroke-width="1"/>
<path d="M541.53 690.69L544.99 686.43L553.82 683.82" fill="none" stroke="#ffff00" stroke-width="1"/>
<path d="M617.83 687.04L624.07 685.49L634.88 686.69" fill="none" stroke="#00ffff" stroke-width="1"/>
<path d="M668.3 697.67L679.15 692.06L689.21 689.01" fill="none" stroke="#00ffff" stroke-width="1"/>
<path d="M514.67 691.76L525.22 688.4L533.61 686.47" fill="none" stroke="#ffff00" stroke-width="1"/>
<path d="M587.76 695.37L591.19 689.82L598.34 689.74" fill="none" stroke="#00ffff" stroke-width="1"/>
<path d="M555.93 697.24L560.32 700L567.25 700" fill="none" stroke="#00ffff" stroke-width="1"/>
<path d="M506.95 691.55L518.86 692.07L524.94 687.5" fill="none" stroke="#ffff00" stroke-width="1"/>
<path d="M589.64 691.07L595.51 690.19L599.63 694.97" fill="none" stroke="#00ffff" stroke-width="1"/>
<path d="M515.47 687.49L525.87 683.73L531.83 683.27" fill="none" stroke="#00ffff" stroke-width="1"/>
<path d="M608.28 689.98L620.13 694.3L626.35 698.15" fill="none" stroke="#ffff00" stroke-width="1"/>
<path d="M505.58 693.73L510.27 694.97L515.46 696.33" fill="none" stroke="#00ffff" stroke-width="1"/>
<path d="M939.09 683.43L943.63 682L947.98 682" fill="none" stroke="#00ffff" stroke-width="1"/>
<path d="M857.45 687.26L868.61 691.68L875.07 689.46" fill="none" stroke="#ffff00" stroke-width="1"/>
<path d="M755.09 687.59L763.61 684.28L767.12 682.16" fill="none" stroke="#00ffff" stroke-width="1"/>
<path d="M783.2 691.66L789.11 693.3L793.67 696.39" fill="none" stroke="#00ffff" stroke-width="1"/>
<path d="M807.95 690.04L818.1 694.04L827.27 696.73" fill="none" stroke="#ffff00" stroke-width="1"/>
<path d="M643.6 682h1v19h-1zM480 682h1v19h-1z" fill="#000"/>
<path d="M455 683L470 690" fill="none" stroke="#000" stroke-width="1"/>
<path d="M700 682L712 700" fill="none" stroke="#000" stroke-width="1"/>
<path d="M818 682L803 700" fill="none" stroke="#000" stroke-width="1"/>
<path d="M575 682L560 694" fill="none" stroke="#0000ff" stroke-width="1"/>
<path d="M748 683L757 700" fill="none" stroke="#0000ff" stroke-width="1"/>
<path d="M862 682L866 700" fill="none" stroke="#0000ff" stroke-width="2"/>
<path d="M446 688h22v1h-22zM473 687h6v3h-6zM446 694h22v1h-22zM473 693h6v3h-6zM484 688h22v1h-22zM511 687h6v3h-6zM484 694h22v1h-22zM511 693h6v3h-6zM522 688h22v1h-22zM549 687h6v3h-6zM522 694h22v1h-22zM549 693h6v3h-6zM560 688h22v1h-22zM587 687h6v3h-6zM560 694h22v1h-22zM587 693h6v3h-6zM598 688h22v1h-22zM625 687h6v3h-6zM598 694h22v1h-22zM625 693h6v3h-6zM636 688h22v1h-22zM663 687h6v3h-6zM636 694h22v1h-22zM663 693h6v3h-6zM674 688h22v1h-22zM701 687h6v3h-6zM674 694h22v1h-22zM701 693h6v3h-6zM712 688h22v1h-22zM739 687h6v3h-6zM712 694h22v1h-22zM739 693h6v3h-6zM750 688h22v1h-22zM777 687h6v3h-6zM750 694h22v1h-22zM777 693h6v3h-6zM788 688h22v1h-22zM815 687h6v3h-6zM788 694h22v1h-22zM815 693h6v3h-6zM826 688h22v1h-22zM853 687h6v3h-6zM826 694h22v1h-22zM853 693h6v3h-6zM864 688h22v1h-22zM891 687h6v3h-6zM864 694h22v1h-22zM891 693h6v3h-6zM902 688h22v1h-22zM929 687h6v3h-6zM902 694h22v1h-22zM929 693h6v3h-6zM940 688h22v1h-22zM967 687h6v3h-6zM940 694h22v1h-22zM967 693h6v3h-6zM978 688h3v1h-3zM978 694h3v1h-3z" fill="#0000ff"/>
<path d="M443 690h539v2h-539zM445.5 682.4h13.7v5h-13.7z" fill="#000"/>
<path d="M449.35 692L452.35 696L455.35 692Z" fill="#fff" stroke="#fff" stroke-width="1"/>
<path d="M449.35 692L452.35 696L455.35 692" fill="none" stroke="#000" stroke-width="1"/>
<path d="M473.6 682.4h9.9v5h-9.9z" fill="#000"/>
<path d="M475.55 692L478.55 696L481.55 692Z" fill="#fff" stroke="#fff" stroke-width="1"/>
<path d="M475.55 692L478.55 696L481.55 692" fill="none" stroke="#000" stroke-width="1"/>
<path d="M535 695h16.4v5h-16.4z" fill="#000"/>
<path d="M540.7 690L543.2 686.5L545.7 690" fill="none" stroke="#000" stroke-width="1"/>
<path d="M725.5 695h13.9v5h-13.9z" fill="#000"/>
<path d="M729.95 690L732.45 686.5L734.95 690" fill="none" stroke="#000" stroke-width="1"/>
<path d="M880.3 695h13.8v5h-13.8z" fill="#000"/>
<path d="M884.7 690L887.2 686.5L889.7 690" fill="none" stroke="#000" stroke-width="1"/>
<path d="M433.4 689.4h8.3v3.3h-8.3z" fill="#000"/>
<g>
<path d="M973.95 329.37L964.39 330.03L955.81 331.47M956.67 319L956.29 324.16L955.81 331.47M768.39 373.67L772.74 370.45L778.35 366.44M768.39 373.67L770.7 381.41L774.94 389.25M784.1 388.79L788.82 382.31L793.34 376.37M571.85 289.68L570.93 289.5L571.97 290.02M592.6 283.78L589.63 290.59L589.04 296.12M589.04 296.12L584.85 297.17L582.97 299.42M571.97 290.02L577.51 293.65L582.97 299.42M571.97 290.02L565.13 300.5L558.56 311.11M759.27 287.7L763.2 291.05L764.94 293.51M759.27 287.7L762.15 273.07L767.17 258.96M764.94 293.51L776.49 283.7L788.35 273.44M786.46 261.53L787.75 267.81L788.35 273.44M795.25 289.58L791.51 282.71L788.35 273.44M795.25 289.58L798.99 288.75L800.85 289.6M812.86 272.14L809.09 281.27L805.69 288.14M800.85 289.6L802.59 288.68L805.69 288.14M834.79 275.72L834.44 283.21L834.23 291.73M805.69 288.14L819.06 289.14L834.23 291.73M975 341.36L965.87 343.68L958.79 346.58M955.81 331.47L956.4 331.13L955.14 332.24M943.03 312.02L939.86 318.37L934.49 324.24M934.49 324.24L939.79 329.13L946.37 332M946.37 332L949.63 331.37L955.14 332.24M968.86 363.89L962.71 369.32L957.16 373.42M962.81 389.07L959.93 387L954.76 383.96M955.61 353.29L956.9 349.62L958.79 346.58M955.61 353.29L963.54 357.39L969.24 362.73M572.37 369.87L574.4 368.79L577.57 367.49M565.39 356.29L568.42 352.34L573.22 348.48M577.57 367.49L575.02 359.23L574.82 349.68M574.82 349.68L574.03 349.35L573.22 348.48M573.22 348.48L572.05 348.09L573.09 348.24M694.67 268.75L693.34 269.37L694.31 270.95M694.31 270.95L695.85 274.01L696.65 275.03M696.65 275.03L703.94 278.78L711.09 281.51M725.63 269.16L725.86 271.62L723.93 271.73M711.09 281.51L716.71 277.65L723.93 271.73M793.34 376.37L794.13 375.81L794.79 375.78M807.04 391.75L806.53 386.84L806.99 381.68M806.99 381.68L800.02 378.37L794.79 375.78M778.35 366.44L778.51 365.72L778.36 366.41M794.79 375.78L795.44 368.4L798.21 362.99M798.21 362.99L795.63 361.14L794.77 357.04M794.77 357.04L786.03 362.4L778.36 366.41M960.2 422.11L955.84 422.24L952.62 420.79M960.2 422.11L960.93 426.4L962.2 430.07M952.62 420.79L949.86 427.3L948.24 432M948.31 409.24L955.93 404.28L965.29 401.47M948.31 409.24L950.61 413.84L952.62 420.79M930.21 406.61L940.15 406.82L948.31 409.24M930.21 406.61L929.83 419.84L931.29 432M694.31 270.95L688.06 274.86L679.65 280.64M679.65 280.64L672.86 276.87L668.03 275.17M649.53 268L654.91 275.87L658.42 282.67M635.4 277.2L639.38 280.3L641.71 285.22M641.71 285.22L648.18 287.07L655.82 289.88M655.82 289.88L657.16 287.24L658.42 282.67M584.4 387.54L585.54 384.85L588.33 383.53M577.57 367.49L580.82 367.05L581.93 368.04M588.33 383.53L591.23 383.74L593.54 383.24M581.93 368.04L585.97 365.41L591.75 362.81M574.82 349.68L583.15 349.53L591.74 349.03M591.74 349.03L590.89 355.36L591.75 362.81M598.52 379.84L598.65 375.23L598.6 368.69M598.52 379.84L596.42 381.35L593.54 383.24M598.6 368.69L598.6 366.66L596.99 365.62M598.6 368.69L605.25 371.05L612.57 371.54M598.52 379.84L609.23 383.27L619.31 386.03M612.57 371.54L615.02 379.43L619.31 386.03M619.31 386.03L621.14 387.11L621.32 387.8M557.76 319.47L565.39 320.46L573.58 320.79M577.68 329.47L575.05 324.91L573.58 320.79M917.15 301.79L914.91 303.51L914.6 307.31M934.49 324.24L931.27 326.08L928.48 326.14M915.76 322.03L915.49 323.84L916.76 323.52M928.48 326.14L923.57 324.84L916.76 323.52M815.06 308.88L807.38 310.11L801.02 313.62M830.67 309.94L828.56 312.16L827.46 316.26M801.87 329.69L802.48 322.72L801.02 313.62M801.87 329.69L810.68 327.04L821.39 323.1M811.2 393.97L818.28 390.6L825.66 388.32M825.66 388.32L828.22 395.41L831.12 403.89M786.2 317.96L791.91 313.27L795.62 309.15M786.2 317.96L784.14 317.35L780.08 317.57M780.08 317.57L776.36 310.35L772.51 304.86M790.68 297.71L793.07 303.29L795.62 309.15M771.94 302.45L772.4 303.65L772.51 304.86M772.86 334.5L777.05 325.45L780.08 317.57M765.29 334.42L769.7 334.71L772.86 334.5M765.29 334.42L768.19 320.11L772.51 304.86M771.28 302.15L768.3 301.25L767.22 297.97M764.94 293.51L765.28 294.75L767.22 297.97M795.25 289.58L793.25 294.5L790.68 297.71M771.28 302.15L772.09 301.35L771.94 302.45M800.85 289.6L807.36 298.89L815.06 308.88M606.92 278.89L608.24 287.9L611.38 295.65M606.92 278.89L618.88 280.06L630.4 280.57M611.38 295.65L619.23 294.87L625.29 292.08M630.4 280.57L627.45 287.23L625.29 292.08M606.73 278.63L606.63 278.56L606.92 278.89M589.04 296.12L595.4 299.08L603.55 301.29M603.55 301.29L607.45 299.08L610.25 299.26M610.25 299.26L610.36 298.3L611.38 295.65M635.4 277.2L632.71 279.7L630.4 280.57M662.88 364.23L657.09 363.42L652.07 361.5M662.88 364.23L666.75 368.18L669.61 371.58M655.59 382.39L652.83 372.05L651.71 361.74M651.71 361.74L652.54 362.43L652.07 361.5M650.03 389.68L651.89 385.32L655.59 382.39M674.97 387.5L671.52 385L669.34 380.93M654.03 354.13L652.77 358.17L652.07 361.5M654.03 354.13L648.16 343.17L643.38 334.56M638.5 336.77L641.14 336.25L643.38 334.56M651.71 361.74L644.24 362.35L637.08 363.88M638.5 336.77L636.8 349.25L635.71 361.26M635.71 361.26L636.26 363.02L637.08 363.88M612.57 371.54L613.97 366.48L613.73 363.12M613.73 363.12L623.8 364.43L635.77 365.94M635.77 365.94L637.15 364.85L637.08 363.88M582.97 299.42L580.82 306.55L580.96 312.26M573.58 320.79L575.56 320.33L576.94 318.25M580.96 312.26L579.47 316.1L576.94 318.25M603.55 301.29L599.38 307.1L597.52 311.07M580.96 312.26L588.52 310.62L597.52 311.07M576.94 318.25L585.09 320.53L595.15 323.44M595.15 323.44L596.73 320.31L600.69 317.52M594.52 345.18L604.42 344.7L613.23 344.74M594.52 345.18L594.1 342.85L591.5 338.61M591.5 338.61L593.68 333.34L597.23 328.54M597.23 328.54L602.88 327.8L608.98 329.35M614.27 343.97L614.39 344.82L613.23 344.74M614.27 343.97L616.44 340.49L617.74 335.75M617.74 335.75L614.36 333.25L608.98 329.35M610.95 357.21L612.47 351.36L613.23 344.74M591.74 349.03L593.64 346.97L594.52 345.18M577.68 329.47L584.17 333.44L591.5 338.61M595.15 323.44L596.83 325.25L597.23 328.54M604.45 318.52L603.39 317.7L600.69 317.52M635.71 361.26L624.66 351.76L614.27 343.97M619.11 334.68L627.62 334.88L638.5 336.77M619.11 334.68L617.48 334.03L617.74 335.75M675.99 315.87L679.32 323.31L680.46 329.15M675.99 315.87L682.77 314.08L687.52 314.31M687.31 333.19L682.7 330.11L680.46 329.15M687.31 333.19L692.86 332.69L697.18 332.3M687.52 314.31L689.69 317.26L692.1 318.21M692.1 318.21L694.73 324.46L697.18 332.3M691.77 385.82L691.85 385.32L692.21 383.26M669.61 371.58L673.41 370.79L678.19 368.48M678.19 368.48L683.34 370.89L689.82 372.51M674.21 355.33L674.97 356.78L677.68 357.11M662.88 364.23L668.11 360.64L674.21 355.33M678.19 368.48L677.48 363.22L677.68 357.11M801.87 329.69L801.88 328.74L801.81 329.79M821.39 323.1L822.11 332.46L820.82 341.17M786.2 317.96L789.96 327.45L793.86 337.21M801.81 329.79L797.31 333.38L793.86 337.21M788.17 340.56L779.9 337.03L772.86 334.5M788.17 340.56L783.48 347.99L776.71 356.42M794.77 357.04L795.3 349.33L793.69 343.6M793.69 343.6L792.01 342.51L791.73 340.55M834.23 291.73L834.31 295.2L836.31 296.93M860.88 281.63L854.31 290.01L847.97 296.6M830.67 309.94L831.19 308.67L832.75 308.53M836.31 296.93L834.53 302.36L832.75 308.53M673.12 303.89L667.19 299.15L659.6 294.07M673.12 303.89L673.94 309.7L674 314.96M658.08 314.3L656.2 305.35L654.68 298.16M658.08 314.3L662.2 315.46L664.5 317.54M654.68 298.16L656.28 296.04L657.38 293.48M664.5 317.54L666.32 318.05L668.4 317.44M681.48 295.26L681.15 288.95L678.87 284.72M678.87 284.72L668.72 289.77L659.6 294.07M655.82 289.88L655.79 291.28L657.38 293.48M610.25 299.26L611.37 301.88L612.45 302.81M604.45 318.52L609.65 315.6L614.28 311M614.28 311L613.31 306.47L612.45 302.81M619.11 334.68L619.95 328.29L622.66 320.05M614.28 311L619.15 316.59L622.66 320.05M664.03 344.42L668.14 348.09L672.78 350.04M664.03 344.42L663.24 342.28L664.21 338.94M672.99 335.94L676.54 339.19L680.3 343.5M672.99 335.94L670.05 337.18L667.53 336.35M672.78 350.04L675.95 347.06L680.3 343.5M664.21 338.94L666.14 337.54L667.53 336.35M674.21 355.33L672.38 353.45L672.78 350.04M654.03 354.13L658.42 349.28L664.03 344.42M645.05 332.38L644.22 334.44L643.38 334.56M653.97 332.24L649.04 331.92L645.05 332.38M653.97 332.24L658.28 336.63L664.21 338.94M680.46 329.15L676.18 332.61L672.99 335.94M668.4 317.44L669.14 327.59L667.53 336.35M675.99 315.87L674.89 314.29L674 314.96M677.68 357.11L684.94 357.08L693.67 354.73M681.63 343.42L687.05 348.03L693.67 354.73M741.06 288.75L741.05 290.68L739.88 290.6M723.93 271.73L722.29 281.15L719.29 291.75M739.88 290.6L729.03 290.13L719.29 291.75M767.22 297.97L758.76 302.8L749.24 307.68M739.88 290.6L740.59 293.61L739.62 294.94M711.09 281.51L714.5 288.22L716.8 292.94M716.8 292.94L717.76 292.52L719.29 291.75M719.21 315.3L718.29 311.48L719.6 308.81M719.21 315.3L721.81 317.78L726.23 322.27M733.49 304.89L726.23 307.95L719.6 308.81M733.49 304.89L736.09 310.12L737.08 314.18M737.08 314.18L731.23 317.97L726.23 322.27M768.39 373.67L763.3 372.36L757.56 369.36M776.71 356.42L770.4 354.02L765.08 353.3M737.18 397.3L745.73 382.92L756.66 369.48M757.56 369.36L756.4 369.81L756.66 369.48M689.82 372.51L692.05 365.54L695.32 357.46M693.67 354.73L695.32 353.99L694.95 355.09M694.95 355.09L695.63 356.83L695.32 357.46M946.37 332L944.85 340.32L941.54 348.02M928.48 326.14L928.2 328.83L929.94 333.02M929.94 333.02L935.85 339.55L941.54 348.02M863.76 316.99L852.29 317.25L841.56 317.63M863.76 316.99L861.59 324.84L857.8 333.63M857.8 333.63L850.6 327.7L842.89 321.03M841.56 317.63L841.7 319.26L842.89 321.03M925.8 401.19L916.41 410.11L906.32 420.79M930.21 406.61L928.15 403.17L925.8 401.19M631.79 315.05L636.93 315.91L643.05 319.02M644.48 317.62L644.3 310.04L645.74 302.94M644.48 317.62L642.76 317.97L643.05 319.02M645.74 302.94L641.07 300.16L635.79 299.68M631.68 304.62L632.22 303.49L633.82 300.47M635.79 299.68L634.23 300.03L633.82 300.47M612.45 302.81L621.22 304.11L631.68 304.62M622.66 320.05L627.17 317.64L631.79 315.05M645.05 332.38L645.14 325.97L643.05 319.02M654.68 298.16L650.6 300.14L645.74 302.94M641.71 285.22L638.43 292.73L635.79 299.68M625.29 292.08L629.96 297.3L633.82 300.47M714.42 296.53L715.17 300.01L714.92 302.51M714.42 296.53L706.73 294.63L698.5 292.14M703.22 308.04L697.81 305.45L693.72 302.9M698.5 292.14L696.28 296.06L692.99 298.7M692.99 298.7L694.41 300.66L693.72 302.9M733.49 304.89L737.73 299.49L739.62 294.94M719.6 308.81L718.35 304.67L714.92 302.51M716.8 292.94L715.97 294.83L714.42 296.53M696.65 275.03L698.44 282.74L698.5 292.14M709.44 321.54L706.51 318.45L703.03 314.41M703.03 314.41L703.85 312.01L703.22 308.04M692.1 318.21L698.56 317.38L703.03 314.41M687.52 314.31L690.22 309.25L693.72 302.9M681.48 295.26L687.63 297.31L692.99 298.7M749.24 307.68L749.84 312.35L749.41 314.76M737.08 314.18L740.68 316.39L744.32 317.84M749.41 314.76L745.78 317.4L744.32 317.84M771.28 302.15L763.88 308.67L756.48 317.38M749.41 314.76L753.98 315.54L756.48 317.38M765.29 334.42L765.99 333.81L765.2 334.44M756.48 317.38L761.01 326.86L765.2 334.44M746.44 344.91L737.3 342.22L728.98 340.69M746.44 344.91L744.61 347.96L745.18 352.83M728.98 340.69L728.85 348.34L729.62 354.7M729.62 354.7L737.05 353.16L745.18 352.83M929.94 333.02L928.87 339.8L927.17 346.68M941.54 348.02L941.17 348.38L941.91 350.46M941.91 350.46L939.28 351.16L938.56 352.15M955.61 353.29L954.58 354.6L953.34 354.11M941.91 350.46L948.69 351.19L953.34 354.11M957.16 373.42L953.84 366.56L950.87 362.09M950.87 362.09L953.28 358.62L953.34 354.11M861.38 344.15L860.34 337.71L857.8 333.63M865.26 315.95L872.25 320.56L879.41 323.21M882.51 329.16L880.12 327.36L879.41 323.21M882.51 329.16L881.59 331.72L881.62 336.28M861.88 344.12L861.68 344.03L861.38 344.15M861.88 344.12L872.58 340.68L881.14 337.35M865.26 315.95L865.18 315.86L863.76 316.99M881.14 337.35L880.43 336.19L881.62 336.28M884.28 407.57L890 401.46L895.14 395.23M895.72 414.43L897.99 404.78L900.16 395.77M900.16 395.77L896.52 394.59L895.14 395.23M954.76 383.96L947.15 383.87L941.89 382.94M950.87 362.09L945.49 366.6L941.39 372.02M941.89 382.94L940.94 378.32L941.39 372.02M938.56 352.15L934.31 356.05L932.13 361.94M941.39 372.02L936.95 366.48L932.13 361.94M920.82 349.27L918.48 354.09L918.32 357.05M918.32 357.05L921.28 359.2L923.44 363.52M927.17 346.68L924.8 348.2L920.82 349.27M923.44 363.52L927.15 361.68L932.13 361.94M814.53 350.4L816.13 350.09L819.26 350.03M814.53 350.4L811.05 356.83L805.64 363.3M819.26 350.03L819.56 362.42L821.61 372.65M805.64 363.3L812.24 369.14L818.93 373.13M818.93 373.13L821.42 372.47L821.61 372.65M820.82 341.17L822.86 344.75L823.27 346.24M793.69 343.6L803.09 346.47L814.53 350.4M823.27 346.24L822.24 348.57L819.26 350.03M806.99 381.68L812.58 376.61L818.93 373.13M827.46 316.26L830.14 328.68L832.75 341.7M823.27 346.24L825.39 347.17L827.94 345.95M832.75 341.7L830.95 344.87L827.94 345.95M842.89 321.03L840.34 329.48L839.73 339.4M832.75 341.7L836.85 340.83L839.73 339.4M861.38 344.15L860.18 345.31L857.91 346.82M839.73 339.4L848.15 342.18L857.91 346.82M865.26 315.95L866.13 311.68L864.83 308.14M858.5 299.59L861.14 304.54L864.83 308.14M742.97 324.42L752.43 331.1L763.46 335.92M742.97 324.42L740.52 325.81L740.25 327.38M740.25 327.38L743.85 335.64L746.78 344.58M746.78 344.58L753.88 341.57L761.93 338.06M761.93 338.06L762.67 337.42L763.46 335.92M744.32 317.84L744.72 320.99L742.97 324.42M765.2 334.44L765.36 335.47L763.46 335.92M726.23 322.27L727.92 326.3L728.21 329.31M728.21 329.31L734.03 327.52L740.25 327.38M765.08 353.3L763.1 345.09L761.93 338.06M712.39 346.04L718.57 341.7L725.44 337.68M712.39 346.04L708.85 345.8L703.36 344.6M703.36 344.6L702.65 338.35L699.59 333.61M725.59 335.52L725.86 336.09L725.44 337.68M725.59 335.52L717.07 330.92L708.03 325.3M699.59 333.61L704.61 328.95L708.03 325.3M697.18 332.3L698.95 332.53L699.59 333.61M694.95 355.09L698.75 351L703.36 344.6M728.98 340.69L727.14 339.33L725.44 337.68M728.21 329.31L726.33 331.4L725.59 335.52M719.21 358.62L722 361.45L724.32 361.99M719.21 358.62L713.91 363.1L706.92 365.25M724.32 361.99L725.6 365.57L727.25 369.28M709 372.86L708.58 369.23L706.92 365.25M709 372.86L718.4 376.24L725.61 379.5M725.61 379.5L726.54 374.6L727.25 369.28M729.62 354.7L726.05 357.46L724.32 361.99M712.39 346.04L715.44 351.44L719.21 358.62M695.32 357.46L701.72 361.99L706.92 365.25M746.91 360.8L736.2 365.66L727.25 369.28M692.21 383.26L701.01 378.53L709 372.86M730.8 397.37L727.01 388.65L725.61 379.5M916.6 323.89L916.44 333.65L915.85 341.09M916.6 323.89L910.47 329.93L903.23 336.29M915.85 341.09L909.53 344.19L904.16 348.58M903.23 336.29L903.95 343.42L904.16 348.58M916.76 323.52L916.68 324.07L916.6 323.89M920.82 349.27L918.12 344.62L915.85 341.09M896.35 321.62L889.16 324.28L882.51 329.16M915.76 322.03L905.72 322.27L896.35 321.62M881.62 336.28L892.4 337.04L903.23 336.29M918.32 357.05L909.44 357.29L901.28 356.34M901.28 356.34L900.84 357.08L900.76 355.95M895.14 395.23L890.5 393.58L884.15 390.11M874.37 404.44L875.03 397.97L874.2 391.34M884.15 390.11L878.76 391.12L874.2 391.34M848.13 400.18L852.48 396.53L854.47 393.65M847.32 402.27L846.82 401.67L848.13 400.18M874.2 391.34L873.32 390.58L874.14 391.3M922.1 367.66L927.87 378.9L933.65 388.92M922.1 367.66L914.01 372.49L907.16 377.95M907.16 377.95L906.13 379.78L906.58 379.67M906.58 379.67L908.02 385.53L908.58 392.51M908.58 392.51L918.15 397.05L925.78 401.14M925.78 401.14L929.98 396.13L933.65 388.92M923.44 363.52L921.93 364.87L922.1 367.66M941.89 382.94L936.68 384.73L933.65 388.92M901.28 356.34L903.64 367.13L907.16 377.95M925.8 401.19L926.21 400.73L925.78 401.14M827.94 345.95L834.55 354.67L841.03 362.01M857.91 346.82L856.87 350.12L855.17 353.12M841.03 362.01L847.13 356.64L855.17 353.12M872.55 384.33L874.15 386.63L874.14 391.3M872.55 384.33L867.37 379.44L861.67 372.83M854.47 393.65L854.03 384.86L854.19 377.91M854.19 377.91L858.43 375.3L861.67 372.83M883.1 309.28L879.72 307.45L876.99 303.53M883.1 309.28L887.28 308.18L892.85 304.75M876.99 303.53L876.65 294.83L877.87 287.59M893.86 303.39L893.09 304.01L892.85 304.75M893.86 303.39L892.23 298.23L891.68 292.61M879.41 323.21L881.36 316.07L883.1 309.28M864.83 308.14L870.05 306.84L876.99 303.53M896.35 321.62L894.23 312.24L892.85 304.75M858.5 299.59L868.48 292.94L876.14 286.96M914.6 307.31L905.38 305.82L893.86 303.39M884.15 390.11L884.74 384.31L886.92 379.71M906.58 379.67L899.43 378.1L893.88 375.66M893.88 375.66L889.9 377.1L886.92 379.71M872.55 384.33L875.06 376.96L879.42 369.89M853.46 377.57L846.55 370.73L840.82 362.59M853.46 377.57L845.81 380.3L836.45 380.89M840.82 362.59L833.74 369.93L827.98 375.2M836.45 380.89L833.15 378L828.02 375.28M828.02 375.28L827.42 375.86L827.98 375.2M862.82 369.49L863.16 371.66L861.67 372.83M841.03 362.01L839.8 361.74L840.82 362.59M855.17 353.12L858.69 361.5L862.82 369.49M848.13 400.18L843.23 391.62L836.45 380.89M821.61 372.65L825.25 374.18L827.98 375.2M825.66 388.32L827.54 381.71L828.02 375.28M889.41 364.93L885.42 366.72L879.31 368.27M889.41 364.93L892.59 360.66L896.69 355.61M886.09 345.88L892.45 351.95L896.69 355.61M886.09 345.88L882.09 353.37L875.93 363.05M875.93 363.05L876.89 364.69L876.29 366.06M893.88 375.66L890.68 369.69L889.41 364.93M879.42 369.89L878.51 369.67L879.31 368.27M900.76 355.95L897.93 356.07L896.69 355.61M881.14 337.35L884.41 341.97L886.09 345.88M861.88 344.12L869.45 354.14L875.93 363.05M862.82 369.49L869.37 367.49L876.29 366.06" fill="none" stroke="#00ff00" stroke-width="1"/>
<path d="M750 323h4v1h-4zM751 324h2v1h-2zM590 355h4v1h-4zM591 354h2v1h-2zM573 324h3v1h-3zM576 323h1v1h-1zM745 384h4v1h-4zM746 385h2v1h-2zM656 278h4v1h-4zM657 277h2v1h-2zM943 361h3v1h-3zM946 360h1v1h-1zM717 388h4v1h-4zM718 389h2v1h-2zM678 375h3v1h-3zM681 374h1v1h-1zM733 273h4v1h-4zM734 274h2v1h-2zM644 307h3v1h-3zM647 306h1v1h-1zM715 344h4v1h-4zM716 345h2v1h-2zM603 362h4v1h-4zM604 363h2v1h-2zM591 352h4v1h-4zM592 353h2v1h-2zM592 344h3v1h-3zM595 343h1v1h-1zM732 328h4v1h-4zM733 327h2v1h-2zM595 359h4v1h-4zM596 360h2v1h-2zM579 356h4v1h-4zM580 355h2v1h-2zM619 305h3v1h-3zM622 304h1v1h-1zM655 364h4v1h-4zM656 365h2v1h-2zM709 376h4v1h-4zM710 375h2v1h-2zM801 338h4v1h-4zM802 337h2v1h-2zM969 358h4v1h-4zM970 359h2v1h-2zM891 316h4v1h-4zM892 315h2v1h-2zM645 336h4v1h-4zM646 335h2v1h-2zM593 368h4v1h-4zM594 369h2v1h-2zM883 400h4v1h-4zM884 399h2v1h-2zM853 301h3v1h-3zM856 300h1v1h-1zM734 298h3v1h-3zM737 297h1v1h-1zM724 323h3v1h-3zM727 322h1v1h-1zM711 374h4v1h-4zM712 375h2v1h-2zM909 303h4v1h-4zM910 304h2v1h-2zM953 431h4v1h-4zM954 430h2v1h-2zM643 327h4v1h-4zM644 326h2v1h-2zM615 356h4v1h-4zM616 357h2v1h-2zM592 355h3v1h-3zM595 354h1v1h-1zM583 337h3v1h-3zM586 336h1v1h-1zM876 325h3v1h-3zM879 324h1v1h-1zM627 382h3v1h-3zM630 381h1v1h-1zM925 344h4v1h-4zM926 345h2v1h-2zM576 350h4v1h-4zM577 351h2v1h-2zM883 297h4v1h-4zM884 298h2v1h-2zM630 338h4v1h-4zM631 337h2v1h-2zM719 289h4v1h-4zM720 288h2v1h-2zM953 351h3v1h-3zM956 350h1v1h-1zM928 354h4v1h-4zM929 353h2v1h-2zM583 371h4v1h-4zM584 370h2v1h-2zM682 384h3v1h-3zM685 383h1v1h-1zM599 381h4v1h-4zM600 380h2v1h-2zM761 369h4v1h-4zM762 370h2v1h-2zM809 323h3v1h-3zM812 322h1v1h-1zM862 367h3v1h-3zM865 366h1v1h-1zM571 363h4v1h-4zM572 362h2v1h-2zM840 329h4v1h-4zM841 330h2v1h-2zM635 364h4v1h-4zM636 365h2v1h-2zM583 321h4v1h-4zM584 320h2v1h-2zM780 263h3v1h-3zM783 262h1v1h-1zM601 319h4v1h-4zM602 320h2v1h-2zM883 291h4v1h-4zM884 292h2v1h-2zM949 429h4v1h-4zM950 428h2v1h-2zM867 340h4v1h-4zM868 339h2v1h-2zM711 368h4v1h-4zM712 369h2v1h-2zM663 348h4v1h-4zM664 349h2v1h-2zM810 296h4v1h-4zM811 297h2v1h-2zM671 310h3v1h-3zM674 309h1v1h-1zM934 420h3v1h-3zM937 419h1v1h-1zM941 426h4v1h-4zM942 427h2v1h-2zM689 302h4v1h-4zM690 301h2v1h-2zM762 318h3v1h-3zM765 317h1v1h-1zM723 294h4v1h-4zM724 295h2v1h-2zM749 365h4v1h-4zM750 364h2v1h-2zM740 291h4v1h-4zM741 290h2v1h-2zM692 289h4v1h-4zM693 288h2v1h-2zM635 382h3v1h-3zM638 381h1v1h-1zM614 368h4v1h-4zM615 367h2v1h-2zM743 364h3v1h-3zM746 363h1v1h-1zM926 386h4v1h-4zM927 387h2v1h-2zM783 316h4v1h-4zM784 317h2v1h-2zM787 340h3v1h-3zM790 339h1v1h-1zM771 275h3v1h-3zM774 274h1v1h-1zM675 351h4v1h-4zM676 352h2v1h-2zM624 275h3v1h-3zM627 274h1v1h-1zM768 281h3v1h-3zM771 280h1v1h-1zM706 306h4v1h-4zM707 305h2v1h-2zM717 291h4v1h-4zM718 290h2v1h-2zM920 357h4v1h-4zM921 358h2v1h-2zM872 305h4v1h-4zM873 306h2v1h-2zM745 376h4v1h-4zM746 377h2v1h-2zM702 364h4v1h-4zM703 363h2v1h-2zM612 296h4v1h-4zM613 295h2v1h-2zM641 378h4v1h-4zM642 377h2v1h-2zM948 384h4v1h-4zM949 383h2v1h-2zM723 340h4v1h-4zM724 339h2v1h-2zM960 355h3v1h-3zM963 354h1v1h-1zM634 350h3v1h-3zM637 349h1v1h-1zM782 375h3v1h-3zM785 374h1v1h-1zM914 359h4v1h-4zM915 360h2v1h-2zM905 307h4v1h-4zM906 308h2v1h-2zM726 395h4v1h-4zM727 394h2v1h-2zM629 284h4v1h-4zM630 283h2v1h-2zM640 375h4v1h-4zM641 374h2v1h-2zM620 324h3v1h-3zM623 323h1v1h-1zM722 309h4v1h-4zM723 308h2v1h-2zM822 274h3v1h-3zM825 273h1v1h-1zM774 303h4v1h-4zM775 302h2v1h-2zM954 318h4v1h-4zM955 319h2v1h-2zM777 312h3v1h-3zM780 311h1v1h-1zM751 280h4v1h-4zM752 279h2v1h-2zM650 290h4v1h-4zM651 289h2v1h-2zM948 323h4v1h-4zM949 322h2v1h-2zM788 263h3v1h-3zM791 262h1v1h-1zM853 321h4v1h-4zM854 320h2v1h-2zM852 381h3v1h-3zM855 380h1v1h-1zM581 359h4v1h-4zM582 358h2v1h-2zM911 321h3v1h-3zM914 320h1v1h-1zM932 320h4v1h-4zM933 319h2v1h-2zM748 308h3v1h-3zM751 307h1v1h-1zM779 388h4v1h-4zM780 389h2v1h-2zM925 401h3v1h-3zM928 400h1v1h-1zM649 304h4v1h-4zM650 303h2v1h-2zM633 371h3v1h-3zM636 370h1v1h-1zM826 332h4v1h-4zM827 333h2v1h-2zM738 326h3v1h-3zM741 325h1v1h-1zM964 424h3v1h-3zM967 423h1v1h-1zM606 358h4v1h-4zM607 359h2v1h-2zM812 324h4v1h-4zM813 325h2v1h-2zM926 350h3v1h-3zM929 349h1v1h-1zM616 388h3v1h-3zM619 387h1v1h-1zM639 340h3v1h-3zM642 339h1v1h-1zM755 390h4v1h-4zM756 389h2v1h-2zM688 377h3v1h-3zM691 376h1v1h-1zM750 362h4v1h-4zM751 361h2v1h-2zM756 274h4v1h-4zM757 273h2v1h-2zM882 384h4v1h-4zM883 385h2v1h-2zM756 361h4v1h-4zM757 360h2v1h-2zM619 371h3v1h-3zM622 370h1v1h-1zM675 380h4v1h-4zM676 381h2v1h-2zM960 380h3v1h-3zM963 379h1v1h-1zM922 348h4v1h-4zM923 347h2v1h-2zM712 392h4v1h-4zM713 393h2v1h-2zM689 341h3v1h-3zM692 340h1v1h-1zM692 380h3v1h-3zM695 379h1v1h-1zM889 364h3v1h-3zM892 363h1v1h-1zM585 331h4v1h-4zM586 330h2v1h-2zM897 337h4v1h-4zM898 338h2v1h-2zM926 358h4v1h-4zM927 359h2v1h-2zM676 342h4v1h-4zM677 343h2v1h-2zM623 273h3v1h-3zM626 272h1v1h-1zM596 390h3v1h-3zM599 389h1v1h-1zM661 323h4v1h-4zM662 324h2v1h-2zM868 345h4v1h-4zM869 344h2v1h-2z" fill="#00ff00"/>
<path d="M798 289L807 291.44L816 291.62L825 290.6L834 291.19L843 293.84L852 296L861 295.81L870 294.88" fill="none" stroke="#00ff00" stroke-width="1"/>
<path d="M800.5 295.85L809.5 296.59L818.5 295.59L827.5 295.63L836.5 297.97L845.5 300.5L854.5 300.84L863.5 299.8L872.5 300.23" fill="none" stroke="#00ff00" stroke-width="1"/>
<path d="M803 301.45L812 300.65L821 300.21L830 302.1L839 304.87L848 305.78L857 304.81L866 304.71" fill="none" stroke="#00ff00" stroke-width="1"/>
<path d="M805.5 305.73L814.5 304.93L823.5 306.29L832.5 309.13L841.5 310.61L850.5 309.88L859.5 309.33L868.5 311.08" fill="none" stroke="#00ff00" stroke-width="1"/>
<path d="M808 309.79L817 310.57L826 313.3L835 315.3L844 314.96L853 314.09L862 315.29" fill="none" stroke="#00ff00" stroke-width="1"/>
<path d="M810.5 314.97L819.5 317.43L828.5 319.85L837.5 320L846.5 318.98L855.5 319.6L864.5 322.27" fill="none" stroke="#00ff00" stroke-width="1"/>
<path d="M813 321.55L822 324.26L831 324.98L840 323.97L849 324.03L858 326.39" fill="none" stroke="#00ff00" stroke-width="1"/>
<path d="M474.58 239.76L472.14 236.95L468.75 232.81M474.58 239.76L478.17 239.39L480.82 238.69M480.82 238.69L482.02 233.09L480.92 228.92M469.51 231.77L474.86 229.99L480.92 228.92M480.82 238.69L482.79 239.47L482.43 239.82M490.13 237.25L485.27 239.3L482.43 239.82M463 239.87L466.32 244.39L467.83 248.34M474.58 239.76L473.05 243.66L472.29 246.12M500.26 250.48L499.32 253.94L496.12 259.18M496.12 259.18L498.3 260.99L498.62 262.85M465.54 265.19L465.37 261.23L462.83 259.53M462.83 259.53L459.61 258.56L456.97 257.8M468.06 252.63L466.38 257.14L462.83 259.53M474.07 257.91L471.62 256.09L468.06 252.63M474.07 257.91L472.36 261.18L470.31 264.48M467.47 249.06L466.72 250.67L468.06 252.63M467.47 249.06L462.05 248.78L455.65 250.42M467.83 248.34L466.52 248.95L467.47 249.06M483.69 262.91L486.31 261.37L491.19 258.46M483.69 262.91L480.48 261.15L478.39 257.32M491.19 258.46L488.51 253.63L486.81 249.03M478.39 257.32L480.52 254.01L480.65 250.2M480.65 250.2L481.38 248.68L483.94 248.31M483.94 248.31L484.86 248.66L486.81 249.03M496.12 259.18L492.61 257.64L491.19 258.46M483.11 266.74L483.18 265.78L483.69 262.91M474.07 257.91L475.97 256.63L478.39 257.32M495.38 244.07L492 247.21L486.81 249.03M472.29 246.12L475.28 247.87L480.65 250.2M482.43 239.82L484.01 243.96L483.94 248.31" fill="none" stroke="#00ff00" stroke-width="1"/>
<path d="M520 397h3v1h-3zM523 396h1v1h-1zM554 400h4v1h-4zM555 399h2v1h-2zM528 397h4v1h-4zM529 398h2v1h-2zM542 370h4v1h-4zM543 369h2v1h-2zM477 420h4v1h-4zM478 419h2v1h-2zM503 394h4v1h-4zM504 395h2v1h-2zM488 411h4v1h-4zM489 410h2v1h-2zM514 392h4v1h-4zM515 391h2v1h-2zM507 371h3v1h-3zM510 370h1v1h-1zM540 350h4v1h-4zM541 351h2v1h-2zM508 384h3v1h-3zM511 383h1v1h-1zM556 378h4v1h-4zM557 377h2v1h-2zM511 406h4v1h-4zM512 407h2v1h-2zM500 381h3v1h-3zM503 380h1v1h-1zM488 421h4v1h-4zM489 420h2v1h-2zM490 404h3v1h-3zM493 403h1v1h-1zM550 370h4v1h-4zM551 371h2v1h-2zM537 361h4v1h-4zM538 360h2v1h-2zM520 394h4v1h-4zM521 395h2v1h-2zM561 364h3v1h-3zM564 363h1v1h-1zM524 400h3v1h-3zM527 399h1v1h-1zM497 399h3v1h-3zM500 398h1v1h-1zM484 417h4v1h-4zM485 416h2v1h-2zM514 391h3v1h-3zM517 390h1v1h-1zM552 391h4v1h-4zM553 390h2v1h-2zM509 404h4v1h-4zM510 403h2v1h-2z" fill="#00ff00"/>
<path d="M432.08 250.43L452.9 235.91L474.98 220.14L485.71 231.5L497.07 247.27" fill="none" stroke="#00ff00" stroke-width="1"/>
<path d="M459.21 239.07L469.31 232.13L480.66 242.85L490.76 254.21" fill="none" stroke="#00ff00" stroke-width="1"/>
<path d="M458.58 266.83L469.31 264.31L478.14 268.09L490.76 265.57" fill="none" stroke="#00ff00" stroke-width="1"/>
<path d="M454.16 295.85L463 297.11L475.62 299.01L480.66 298.38" fill="none" stroke="#00ff00" stroke-width="1"/>
<path d="M422.62 314.78L427.67 322.35L432.71 324.24L437.13 319.2" fill="none" stroke="#00ff00" stroke-width="1"/>
<path d="M480.66 300.9L490.76 305.95L498.33 316.04L500.85 328.66" fill="none" stroke="#00ff00" stroke-width="1"/>
<path d="M510.95 292.07L514.73 295.85L516.62 303.42" fill="none" stroke="#00ff00" stroke-width="1"/>
<path d="M565.21 288.28L570.25 295.85L574.04 305.95L576.56 309.73" fill="none" stroke="#00ff00" stroke-width="1"/>
<path d="M555.11 310.99L561.42 314.78L558.9 318.56" fill="none" stroke="#00ff00" stroke-width="1"/>
<path d="M498.33 419.73L575.3 364.21" fill="none" stroke="#00ff00" stroke-width="1"/>
<path d="M470.57 402.07L478.14 393.23L485.71 389.45L495.8 380.62L503.38 378.09" fill="none" stroke="#00ff00" stroke-width="1"/>
<path d="M483.19 390.71L488.23 397.02L492.02 405.85L493.28 415.95" fill="none" stroke="#00ff00" stroke-width="1"/>
<path d="M441.55 395.76L444.07 388.19L451.64 378.09" fill="none" stroke="#00ff00" stroke-width="1"/>
<path d="M440.28 410.9L441.55 403.33L445.33 395.76" fill="none" stroke="#00ff00" stroke-width="1"/>
<path d="M485.71 419.73L490.76 424.78L495.8 426.04" fill="none" stroke="#00ff00" stroke-width="1"/>
<path d="M553.85 409.64L558.9 400.8L560.79 389.45L565.21 385.66L574.04 387.56L589.18 388.19" fill="none" stroke="#00ff00" stroke-width="1"/>
<path d="M596.75 390.71L599.27 395.76L600.54 403.33" fill="none" stroke="#00ff00" stroke-width="1"/>
<path d="M727.07 365.47L735.9 375.57L735.9 394.5" fill="none" stroke="#00ff00" stroke-width="1"/>
<path d="M710.66 368L718.23 374.31L708.14 388.19" fill="none" stroke="#00ff00" stroke-width="1"/>
<path d="M728.33 375.57L720.76 384.4" fill="none" stroke="#00ff00" stroke-width="1"/>
<path d="M798.99 380.62L805.3 388.19" fill="none" stroke="#00ff00" stroke-width="1"/>
<path d="M831.8 388.19L836.85 395.76L835.58 404.59" fill="none" stroke="#00ff00" stroke-width="1"/>
<path d="M841.89 390.71L838.11 402.07" fill="none" stroke="#00ff00" stroke-width="1"/>
<path d="M830.57 385.66L838.14 391.97L835.62 404.59" fill="none" stroke="#00ff00" stroke-width="1"/>
<path d="M840.66 390.71L844.45 395.76" fill="none" stroke="#00ff00" stroke-width="1"/>
<path d="M878.52 403.33L896.18 402.07L908.8 403.33L926.47 398.28L937.82 400.8" fill="none" stroke="#00ff00" stroke-width="1"/>
<path d="M926.47 398.28L927.73 415.95L930.25 432.98" fill="none" stroke="#00ff00" stroke-width="1"/>
<path d="M908.8 403.33L910.06 413.42L925.21 415.95L937.82 414.68" fill="none" stroke="#00ff00" stroke-width="1"/>
<path d="M937.82 400.8L949.18 393.23L956.75 393.23L959.27 403.33L966.85 419.73L964.32 424.78L956.75 422.26" fill="none" stroke="#00ff00" stroke-width="1"/>
<path d="M949.18 413.42L952.97 419.73L956.75 432.98" fill="none" stroke="#00ff00" stroke-width="1"/>
<path d="M951.7 384.4L965.58 384.4" fill="none" stroke="#00ff00" stroke-width="1"/>
<path d="M850.76 360.43L852.02 383.14" fill="none" stroke="#00ff00" stroke-width="1"/>
<path d="M863.38 356.64L865.9 368L864.64 383.14" fill="none" stroke="#00ff00" stroke-width="1"/>
<path d="M874.73 351.59L870.95 368L868.42 383.14" fill="none" stroke="#00ff00" stroke-width="1"/>
<path d="M881.04 349.07L881.04 365.47L877.26 383.14" fill="none" stroke="#00ff00" stroke-width="1"/>
<path d="M902.49 346.55L903.75 365.47L902.49 383.14" fill="none" stroke="#00ff00" stroke-width="1"/>
<path d="M918.9 346.55L920.16 365.47L921.42 375.57" fill="none" stroke="#00ff00" stroke-width="1"/>
<path d="M881.04 349.07L886.09 347.81L887.35 352.85L884.83 362.95" fill="none" stroke="#00ff00" stroke-width="1"/>
<path d="M875.99 298.38L897.44 293.33L898.71 298.38L913.85 299.01L915.11 305.95" fill="none" stroke="#00ff00" stroke-width="1"/>
<path d="M920.16 314.78L934.04 308.47" fill="none" stroke="#00ff00" stroke-width="1"/>
<path d="M927.73 318.56L939.09 312.26" fill="none" stroke="#00ff00" stroke-width="1"/>
<path d="M937.82 321.09L950.44 316.04" fill="none" stroke="#00ff00" stroke-width="1"/>
<path d="M955.49 319.2L955.49 331.18" fill="none" stroke="#00ff00" stroke-width="1"/>
<path d="M966.85 331.18L974.42 329.29" fill="none" stroke="#00ff00" stroke-width="1"/>
<path d="M456.06 228.34L463 242.85L467.41 253.58" fill="none" stroke="#ffff00" stroke-width="1"/>
<path d="M452.9 292.07L464.26 290.8L480.66 293.33L490.76 300.9L498.33 305.95" fill="none" stroke="#ffff00" stroke-width="1"/>
<path d="M417.57 332.44L435.24 305.95L447.85 295.85L463 293.33" fill="none" stroke="#ffff00" stroke-width="1"/>
<path d="M432.71 332.44L451.64 305.95L460.47 300.9" fill="none" stroke="#ffff00" stroke-width="1"/>
<path d="M498.33 255.47L508.42 257.37" fill="none" stroke="#ffff00" stroke-width="1"/>
<path d="M519.78 273.77L528.61 280.71L534.92 293.33L537.44 305.95L536.18 313.52" fill="none" stroke="#ffff00" stroke-width="1"/>
<path d="M517.89 310.36L523.56 312.26L534.92 309.73" fill="none" stroke="#ffff00" stroke-width="1"/>
<path d="M521.04 331.18L531.14 323.61L542.49 321.09L551.32 322.35" fill="none" stroke="#ffff00" stroke-width="1"/>
<path d="M548.8 300.9L552.59 309.73L556.37 318.56L552.59 322.35" fill="none" stroke="#ffff00" stroke-width="1"/>
<path d="M416.31 327.62L425.14 320.05L435.24 315" fill="none" stroke="#ffff00" stroke-width="1"/>
<path d="M426.4 337.71L428.93 352.85L431.45 365.47L425.14 378.09L416.31 385.66" fill="none" stroke="#ffff00" stroke-width="1"/>
<path d="M416.31 420.99L425.14 415.95L437.76 408.38L446.59 395.76L454.16 388.19L463 383.14L473.09 381.88L483.19 378.09" fill="none" stroke="#ffff00" stroke-width="1"/>
<path d="M416.31 428.56L432.71 423.52L442.81 414.68L451.64 403.33L460.47 393.23L470.57 385.66L480.66 381.88L490.76 378.09" fill="none" stroke="#ffff00" stroke-width="1"/>
<path d="M416.31 432.98L427.67 431.09L439.02 424.78L447.85 415.95L455.43 405.85L464.26 395.76" fill="none" stroke="#ffff00" stroke-width="1"/>
<path d="M500.85 323.83L505.9 336.45L503.38 350.33L498.33 359.16" fill="none" stroke="#ffff00" stroke-width="1"/>
<path d="M509.68 327.62L512.21 340.24L508.42 352.85L503.38 361.69" fill="none" stroke="#ffff00" stroke-width="1"/>
<path d="M521.04 322.57L531.14 321.31L541.23 325.09" fill="none" stroke="#ffff00" stroke-width="1"/>
<path d="M517.26 332.67L523.56 327.62L533.66 330.14L537.44 336.45L531.14 344.02" fill="none" stroke="#ffff00" stroke-width="1"/>
<path d="M470.57 383.14L480.66 378.09L490.76 375.57L500.85 378.09" fill="none" stroke="#ffff00" stroke-width="1"/>
<path d="M521.04 391.97L526.09 395.76L531.14 394.5" fill="none" stroke="#ffff00" stroke-width="1"/>
<path d="M426.4 419.73L435.24 414.68L442.81 405.85L449.12 395.76L457.95 386.92L466.78 380.62" fill="none" stroke="#ffff00" stroke-width="1"/>
<path d="M418.83 327.62L426.4 336.45L428.93 345.28" fill="none" stroke="#ffff00" stroke-width="1"/>
<path d="M421.36 410.9L428.93 405.85L435.24 397.02L437.13 390.71" fill="none" stroke="#ffff00" stroke-width="1"/>
<path d="M480.66 385.66L488.23 383.14L498.33 380.62" fill="none" stroke="#ffff00" stroke-width="1"/>
<path d="M447.85 428.56L457.95 420.99L463 410.9L469.31 403.33" fill="none" stroke="#ffff00" stroke-width="1"/>
<path d="M441.55 293.33L435.24 300.9L425.14 313.52L418.83 323.61" fill="none" stroke="#ffff00" stroke-width="1"/>
<path d="M463 285.76L473.09 288.28L483.19 292.07" fill="none" stroke="#ffff00" stroke-width="1"/>
<path d="M441.55 385.66L440.28 395.76L444.07 403.33L440.28 410.9" fill="none" stroke="#00ff00" stroke-width="1"/>
<path d="M451.64 380.62L447.85 385.66L445.33 393.23" fill="none" stroke="#00ff00" stroke-width="1"/>
<path d="M435.24 320.05L430.19 323.83L426.4 321.31" fill="none" stroke="#00ff00" stroke-width="1"/>
<path d="M422.62 316.04L426.4 321.09" fill="none" stroke="#00ff00" stroke-width="1"/>
<path d="M452.9 300.9L463 304.68L469.31 308.47" fill="none" stroke="#00ff00" stroke-width="1"/>
<path d="M485.71 305.95L490.76 312.26L497.07 314.78" fill="none" stroke="#00ff00" stroke-width="1"/>
<path d="M541.23 340.24L533.66 346.55L523.56 352.85L514.73 365.47L509.68 370.52" fill="none" stroke="#0000ff" stroke-width="1" stroke-dasharray="4 2"/>
<path d="M455.43 273.77L465.52 270.62L478.14 273.14L490.76 280.71L500.85 288.28L510.95 293.33L521.04 302.16L531.14 307.21L541.23 312.26L547.54 318.56L552.59 324.87L555.11 331.18" fill="none" stroke="#00ffff" stroke-width="1"/>
<path d="M460.47 279.45L469.31 276.92L478.14 279.45L488.23 287.02L498.33 293.33L509.68 298.38L519.78 305.95L531.14 312.26L541.23 318.56L548.8 326.14" fill="none" stroke="#00ffff" stroke-width="1"/>
<path d="M461.74 285.76L469.31 292.07L480.66 295.85L490.76 298.38L500.85 300.9L510.95 304.68" fill="none" stroke="#00ffff" stroke-width="1"/>
<path d="M546.28 288.28L552.59 288.91" fill="none" stroke="#00ffff" stroke-width="1"/>
<path d="M565.21 288.91L570.25 298.38L571.51 305.95L567.73 314.78L561.42 319.83L555.11 322.35" fill="none" stroke="#00ffff" stroke-width="2"/>
<path d="M589.18 292.07L584.13 300.9L575.3 309.73L567.73 316.04L560.16 321.09L552.59 324.87" fill="none" stroke="#00ffff" stroke-width="2"/>
<path d="M469.31 302.16L475.62 299.64L480.66 299.01" fill="none" stroke="#00ffff" stroke-width="1"/>
<path d="M515.99 305.95L517.26 314.78L515.99 323.61L517.26 331.18" fill="none" stroke="#00ffff" stroke-width="1.5"/>
<path d="M416.31 403.33L426.4 398.28L435.24 391.97L436.5 385.66" fill="none" stroke="#00ffff" stroke-width="1"/>
<path d="M418.83 420.99L431.45 414.68L441.55 403.33L444.07 390.71L451.64 380.62L460.47 375.57L480.66 371.78" fill="none" stroke="#00ffff" stroke-width="1"/>
<path d="M455.43 331.4L457.95 340.24L452.9 347.81" fill="none" stroke="#00ffff" stroke-width="1"/>
<path d="M440.28 365.47L441.55 373.04L447.85 378.09" fill="none" stroke="#00ffff" stroke-width="1"/>
<path d="M517.26 317.52L514.73 330.14L510.95 342.76L503.38 355.38L498.33 365.47" fill="none" stroke="#00ffff" stroke-width="1"/>
<path d="M519.78 318.79L517.26 331.4L513.47 344.02L505.9 356.64L500.85 366.74" fill="none" stroke="#00ffff" stroke-width="1"/>
<path d="M550.06 321.31L558.9 331.4L571.51 347.81L586.66 368L599.27 393.23" fill="none" stroke="#00ffff" stroke-width="1.5"/>
<path d="M567.73 342.13L579.09 337.71L591.7 333.93L603.06 330.14L616.94 325.09L632.08 324.46L649.75 326.99" fill="none" stroke="#00ffff" stroke-width="2"/>
<path d="M694.26 323.61L705.62 312.26L715.71 300.9L720.76 292.07L725.8 287.02L734.64 285.76" fill="none" stroke="#00ffff" stroke-width="2"/>
<path d="M640 326.14L652.62 324.87L665.24 322.35L679.12 322.98L693 323.61" fill="none" stroke="#00ffff" stroke-width="2"/>
<path d="M649.46 280.08L659.56 280.08" fill="none" stroke="#00ffff" stroke-width="1"/>
<path d="M654.51 275.03L654.51 285.76" fill="none" stroke="#00ffff" stroke-width="1"/>
<path d="M807.82 264.31L811.61 273.14L817.92 280.71L826.75 283.23L841.89 285.76L854.51 285.76L867.13 283.86" fill="none" stroke="#00ffff" stroke-width="2"/>
<path d="M815.39 316.04L807.82 315.41L797.73 316.04" fill="none" stroke="#00ffff" stroke-width="1"/>
<path d="M836.85 307.21L846.94 305.95L854.51 304.68" fill="none" stroke="#00ffff" stroke-width="1"/>
<path d="M863.97 262.41L874.07 262.41" fill="none" stroke="#00ffff" stroke-width="1"/>
<path d="M869.02 257.37L869.02 268.09" fill="none" stroke="#00ffff" stroke-width="1"/>
<path d="M761.14 270.62L767.44 271.25" fill="none" stroke="#00ffff" stroke-width="1"/>
<path d="M749.78 302.16L753.56 312.26L755.46 318.56" fill="none" stroke="#00ffff" stroke-width="1.5"/>
<path d="M868.39 283.23L862.08 300.9L853.25 318.56L843.15 334.97" fill="none" stroke="#00ffff" stroke-width="1.5"/>
<path d="M868.42 257.37L869.05 268.09L870.95 281.97L874.73 288.28L883.56 291.44L896.18 290.8" fill="none" stroke="#00ffff" stroke-width="1"/>
<path d="M863.38 262.41L874.73 262.41" fill="none" stroke="#00ffff" stroke-width="1"/>
<path d="M799.02 316.04L811.64 314.78L820.47 310.99L824.26 308.47" fill="none" stroke="#00ffff" stroke-width="1"/>
<path d="M840.66 308.47L850.76 304.68L860.85 302.16" fill="none" stroke="#00ffff" stroke-width="1"/>
<path d="M657.67 387.56L667.76 387.56" fill="none" stroke="#00ffff" stroke-width="1"/>
<path d="M662.71 382.51L662.71 393.23" fill="none" stroke="#00ffff" stroke-width="1"/>
<path d="M765.55 378.72L775.65 378.72" fill="none" stroke="#00ffff" stroke-width="1"/>
<path d="M770.6 373.68L770.6 384.4" fill="none" stroke="#00ffff" stroke-width="1"/>
<path d="M872.18 369.89L879.75 369.89" fill="none" stroke="#00ffff" stroke-width="1"/>
<path d="M877.22 364.84L877.22 375.57" fill="none" stroke="#00ffff" stroke-width="1"/>
<path d="M821.7 381.88L824.23 375.57" fill="none" stroke="#00ffff" stroke-width="1.5"/>
<path d="M848.2 327.62L840.63 344.02L833.06 360.43L828.01 371.78" fill="none" stroke="#00ffff" stroke-width="1"/>
<path d="M757.35 332.03L761.14 342.13L768.71 352.22L778.8 361.06L788.9 367.37L797.73 374.94L809.09 376.2L820.44 373.68L829.27 376.2L836.85 383.77L844.42 390.08L854.51 390.08L867.13 390.08L879.75 389.45" fill="none" stroke="#00ffff" stroke-width="1.5"/>
<path d="M770 352.85L777.57 359.79L787.67 367.37L797.76 374.94L807.85 373.68L817.95 371.78L824.26 373.68L830.57 379.98L838.14 386.29L845.71 389.45L860.85 390.46L877.26 390.46L893.66 389.7L906.28 386.92L915.11 382.51" fill="none" stroke="#00ffff" stroke-width="1.5"/>
<path d="M902.49 390.71L903.75 395.76L910.06 403.33L910.69 413.42L903.75 419.73" fill="none" stroke="#00ffff" stroke-width="1.5"/>
<path d="M872.21 369.26L882.3 369.26" fill="none" stroke="#00ffff" stroke-width="1"/>
<path d="M877.26 364.21L877.26 375.57" fill="none" stroke="#00ffff" stroke-width="1"/>
<path d="M928.99 377.46L934.04 375.57L941.61 371.78L951.7 369.51L958.01 369.01" fill="none" stroke="#00ffff" stroke-width="1"/>
<path d="M820.47 380.62L824.26 371.78" fill="none" stroke="#00ffff" stroke-width="1.5"/>
<path d="M591.7 284.5L599.27 283.49L606.85 284.75L611.89 281.97L616.31 277.18" fill="none" stroke="#0000ff" stroke-width="1.5"/>
<path d="M588.55 293.33L584.13 300.9L577.82 309.73L574.04 316.04" fill="none" stroke="#0000ff" stroke-width="1.5"/>
<path d="M498.33 302.16L505.9 304.68L510.95 305.95L509.68 309.73L502.11 309.73L498.33 305.95L498.33 302.16" fill="none" stroke="#0000ff" stroke-width="1"/>
<path d="M504.64 378.09L490.76 386.92L483.19 390.71L482.56 403.33L480.66 408.38" fill="none" stroke="#0000ff" stroke-width="1"/>
<path d="M438.39 432.98L441.55 426.04L450.38 419.73L463 414.68L475.62 410.9L488.23 409.01L492.02 413.42L493.28 422.26L495.8 426.04L504.64 423.52" fill="none" stroke="#0000ff" stroke-width="1"/>
<path d="M444.07 432.98L447.85 426.04L457.95 420.99L470.57 415.95L483.19 413.42L490.76 415.95L492.02 423.52" fill="none" stroke="#0000ff" stroke-width="1"/>
<path d="M555.11 410.27L560.16 400.8L561.42 390.71L565.21 387.56L574.04 389.45L589.18 390.08L595.49 386.92" fill="none" stroke="#0000ff" stroke-width="2"/>
<path d="M595.49 386.92L601.8 380.62L611.89 374.31L619.46 369.89L627.03 371.15L629.56 378.09L630.82 385.66L624.51 390.71L616.94 395.76L611.89 393.23L604.32 386.92L598.01 389.45" fill="none" stroke="#0000ff" stroke-width="1"/>
<path d="M591.7 337.08L584.13 344.02L582.87 349.07L589.18 355.38L592.97 359.16" fill="none" stroke="#0000ff" stroke-width="1"/>
<path d="M629.56 373.04L637.13 371.78L643.44 375.57L644.7 380.62L649.75 381.88" fill="none" stroke="#0000ff" stroke-width="2"/>
<path d="M555.11 331.4L567.73 349.07L580.35 365.47L592.97 383.14L599.27 398.28L600.54 402.07" fill="none" stroke="#0000ff" stroke-width="1"/>
<path d="M568.99 344.02L579.09 340.24L591.7 336.45" fill="none" stroke="#0000ff" stroke-width="1"/>
<path d="M762.4 258L766.18 255.47L771.23 256.74L773.75 263.04L777.54 268.09L786.37 273.14L797.73 275.66L809.09 276.92L814.13 280.71L809.09 285.13L797.73 285.76L788.9 281.97L778.8 276.92L769.97 270.62L763.66 264.31L762.4 258" fill="none" stroke="#0000ff" stroke-width="1"/>
<path d="M820.44 273.14L826.75 270.62L836.85 270.62L848.2 272.51L859.56 274.4L868.39 275.66L869.65 280.71L862.08 283.86L851.99 284.5L839.37 283.23L829.27 281.34L821.7 278.19L820.44 273.14" fill="none" stroke="#0000ff" stroke-width="1"/>
<path d="M742.21 258.63L745.99 260.52L747.26 270.62L746.62 280.71L747.26 290.8L743.47 295.22L739.68 298.38L735.9 299.64L733.38 297.74L734.64 293.33L739.68 291.44L743.47 293.33" fill="none" stroke="#0000ff" stroke-width="1"/>
<path d="M751.04 261.78L751.67 280.71L752.3 293.33L754.2 305.95L755.46 318.56L757.35 331.18" fill="none" stroke="#0000ff" stroke-width="1"/>
<path d="M752.93 293.33L755.08 305.95L756.72 318.56L758.61 331.18" fill="none" stroke="#0000ff" stroke-width="1"/>
<path d="M730.22 300.27L735.9 309.73L739.68 318.56L740.95 326.14" fill="none" stroke="#0000ff" stroke-width="1"/>
<path d="M732.74 300.9L738.17 309.73L741.58 318.56" fill="none" stroke="#0000ff" stroke-width="1"/>
<path d="M868.39 281.97L863.34 300.9L854.51 318.56L844.42 334.97" fill="none" stroke="#0000ff" stroke-width="1"/>
<path d="M804.04 326.77L809.09 329.92L819.18 331.18L829.27 329.29L836.85 326.77L841.89 331.18" fill="none" stroke="#0000ff" stroke-width="1"/>
<path d="M640 328.03L647.57 329.92L662.71 324.87L677.85 323.61L693 326.14" fill="none" stroke="#0000ff" stroke-width="1"/>
<path d="M640 374.31L642.52 380.62L650.09 381.88L657.67 379.35L658.93 370.52L665.24 365.47L674.07 361.69L682.9 359.16L686.69 365.47L690.47 366.74L691.74 359.16L693 351.59L696.78 346.55L700.57 338.97L705.62 337.08L711.92 340.24L720.76 342.13L733.38 344.65L739.68 340.24L740.95 331.4L739.68 322.57L740.95 315" fill="none" stroke="#0000ff" stroke-width="2"/>
<path d="M701.83 342.76L704.35 352.85L706.88 359.16L713.19 361.69L720.76 362.95L728.33 359.16L735.9 356.64L743.47 356.64L747.26 365.47L751.04 374.31L756.09 383.14" fill="none" stroke="#0000ff" stroke-width="2"/>
<path d="M757.35 330.14L761.14 340.24L768.71 350.33L778.8 359.16L788.9 365.47L797.73 373.04L809.09 374.31L820.44 371.78L829.27 374.31L836.85 381.88L844.42 388.19L854.51 388.19L867.13 388.19L879.75 387.56" fill="none" stroke="#0000ff" stroke-width="2"/>
<path d="M804.04 331.4L807.82 327.62L816.66 330.14L826.75 329.51L836.85 326.36L841.89 328.88L841.89 333.93L836.85 337.71L826.75 335.82L816.66 336.45L807.82 335.19L804.04 331.4" fill="none" stroke="#0000ff" stroke-width="1"/>
<path d="M802.78 341.5L807.82 338.34L819.18 337.71L826.75 339.61L829.27 344.02L834.32 347.81L826.75 351.59L814.13 351.59L805.3 349.07L802.78 341.5" fill="none" stroke="#0000ff" stroke-width="1"/>
<path d="M846.94 327.62L839.37 344.02L831.8 360.43L826.75 371.78" fill="none" stroke="#0000ff" stroke-width="1"/>
<path d="M770 350.96L777.57 357.9L787.67 365.47L797.76 373.04L807.85 371.78L817.95 369.89L824.26 371.78L830.57 378.09L838.14 384.4L845.71 387.56L860.85 388.19L877.26 388.19L893.66 387.56L906.28 385.03L915.11 380.62L923.31 376.83L927.73 376.83L928.99 379.35L934.04 376.83L941.61 373.04L951.7 371.15L958.01 370.52" fill="none" stroke="#0000ff" stroke-width="2"/>
<path d="M928.99 379.35L930.25 386.92L936.56 391.97L940.35 399.54L942.87 405.22" fill="none" stroke="#0000ff" stroke-width="1.5"/>
<path d="M941.61 376.83L946.66 380.62L951.7 384.4" fill="none" stroke="#0000ff" stroke-width="1"/>
<path d="M905.02 391.97L906.28 397.02L910.69 403.33" fill="none" stroke="#0000ff" stroke-width="1"/>
<path d="M640 373.3L642.52 379.61L650.09 380.87L657.03 378.47L658.04 369.89L664.61 364.59L673.82 360.68L683.53 358.15L687.32 364.46L689.84 365.47L690.73 358.53L691.99 350.71L696.03 345.79L699.94 338.09L705.62 336.07L712.18 339.23L720.76 341.12L733.12 343.64L738.8 339.61L739.94 331.4" fill="none" stroke="#00ff00" stroke-width="1"/>
<path d="M702.84 343.01L705.36 352.85L707.89 358.28L713.44 360.68L720.76 361.94L727.95 358.15L735.9 355.63L744.23 355.63L748.26 365.09L752.05 373.93" fill="none" stroke="#00ff00" stroke-width="1"/>
<path d="M629.56 372.03L637.13 370.77L644.07 374.56L645.71 379.86L649.75 380.87" fill="none" stroke="#00ff00" stroke-width="1"/>
<path d="M478.14 269.98L484.45 268.97L485.21 275.16L478.64 276.17Z" fill="none" stroke="#ff00ff" stroke-width="1"/>
<path d="M495.8 261.78L504.64 260.77L505.39 268.22L496.31 269.23Z" fill="none" stroke="#ff00ff" stroke-width="1"/>
<path d="M509.68 265.57L514.73 264.56L515.49 270.11L510.19 271.12Z" fill="none" stroke="#ff00ff" stroke-width="1"/>
<path d="M504.01 277.56L510.95 276.55L511.7 283.36L504.51 284.37Z" fill="none" stroke="#ff00ff" stroke-width="1"/>
<path d="M512.21 278.19L516.62 277.18L517.38 283.99L512.71 285Z" fill="none" stroke="#ff00ff" stroke-width="1"/>
<path d="M473.09 283.86L479.4 282.85L480.16 287.78L473.6 288.79Z" fill="none" stroke="#ff00ff" stroke-width="1"/>
<path d="M484.45 287.02L489.5 286.01L490.25 291.56L484.95 292.57Z" fill="none" stroke="#ff00ff" stroke-width="1"/>
<path d="M519.78 283.23L524.83 282.22L525.58 286.51L520.28 287.52Z" fill="none" stroke="#ff00ff" stroke-width="1"/>
<path d="M527.35 291.44L534.92 290.43L535.68 297.24L527.85 298.25Z" fill="none" stroke="#ff00ff" stroke-width="1"/>
<path d="M473.09 304.68L479.4 303.68L480.16 307.33L473.6 308.34Z" fill="none" stroke="#ff00ff" stroke-width="1"/>
<path d="M490.76 268.72L497.07 267.71L497.82 273.26L491.26 274.27Z" fill="none" stroke="#ff00ff" stroke-width="1"/>
<path d="M495.47 262.18h3.4v3h-3.4zM499.25 265.33h3.4v3h-3.4zM510.61 266.59h3.4v3h-3.4zM479.06 271.01h3.4v3h-3.4zM486.63 271.64h3.4v3h-3.4zM492.31 272.27h3.4v3h-3.4zM509.35 272.9h3.4v3h-3.4zM511.87 271.64h3.4v3h-3.4zM492.31 279.21h3.4v3h-3.4zM498.62 279.84h3.4v3h-3.4zM505.56 279.21h3.4v3h-3.4zM512.5 281.1h3.4v3h-3.4zM468.97 285.52h3.4v3h-3.4zM474.65 285.52h3.4v3h-3.4zM480.32 284.26h3.4v3h-3.4zM477.8 287.41h3.4v3h-3.4zM484.74 288.67h3.4v3h-3.4zM520.07 284.26h3.4v3h-3.4zM526.38 283h3.4v3h-3.4zM524.49 286.78h3.4v3h-3.4zM528.9 293.72h3.4v3h-3.4zM477.17 300.66h3.4v3h-3.4zM474.65 305.08h3.4v3h-3.4z" fill="#000"/>
<path d="M509.05 273.77L514.73 271.88L515.36 275.66L510.95 276.92Z" fill="#000" stroke="#000" stroke-width="1"/>
<path d="M538.08 290.17h3.15v11.36h-3.15z" fill="#000"/>
<path d="M539.08 292.17h1v1h-1zM539.58 295.67h1v1h-1zM539.08 298.17h1v1h-1z" fill="#fff"/>
<path d="M546.28 297.11h2.52v12.62h-2.52z" fill="#000"/>
<path d="M547.28 299.11h1v1h-1zM547.78 302.61h1v1h-1zM547.28 305.11h1v1h-1z" fill="#fff"/>
<path d="M858.93 263.68h3.79v10.09h-3.79z" fill="#000"/>
<path d="M859.93 265.68h1v1h-1zM860.43 269.18h1v1h-1zM859.93 271.68h1v1h-1z" fill="#fff"/>
<path d="M867.13 270.62h3.79v11.36h-3.79z" fill="#000"/>
<path d="M868.13 272.62h1v1h-1zM868.63 276.12h1v1h-1zM868.13 278.62h1v1h-1z" fill="#fff"/>
<path d="M653.88 388.82h3.15v10.73h-3.15z" fill="#000"/>
<path d="M654.88 390.82h1v1h-1zM655.38 394.32h1v1h-1zM654.88 396.82h1v1h-1z" fill="#fff"/>
<path d="M662.08 395.76h3.15v11.99h-3.15z" fill="#000"/>
<path d="M663.08 397.76h1v1h-1zM663.58 401.26h1v1h-1zM663.08 403.76h1v1h-1z" fill="#fff"/>
<path d="M788.26 276.29h2.52v1.26h-2.52zM847.57 277.18h3.15v1.01h-3.15zM819.18 344.65h3.15v1.89h-3.15zM821.07 332.03h2.52v1.51h-2.52zM592.97 357.27h2.52v1.26h-2.52z" fill="#000"/>
<path d="M427 346.9L462.3 312.4L492.2 348.1L454.2 379.5Z" fill="none" stroke="#ff0000" stroke-width="1"/>
<path d="M431.6 347.3L461.9 315.1L489.5 347.7L454.2 376Z" fill="none" stroke="#000" stroke-width="1"/>
<path d="M435 347.5L462 318.7L486 347.7L454.3 372.5Z" fill="none" stroke="#000" stroke-width="1"/>
<path d="M432.4 347.3L454.2 375" fill="none" stroke="#000" stroke-width="2"/>
<path d="M432 344L431.5 350L434 351.5" fill="none" stroke="#000" stroke-width="2"/>
<path d="M460.74 318.38L487.74 346.38" fill="none" stroke="#000" stroke-width="1"/>
<path d="M458.94 320.11L485.94 348.11" fill="none" stroke="#000" stroke-width="1"/>
<path d="M456.78 322.19L483.78 350.19" fill="none" stroke="#000" stroke-width="1"/>
<path d="M454.62 324.28L481.62 352.28" fill="none" stroke="#000" stroke-width="1"/>
<path d="M460.74 318.38L458.94 320.11M462.54 320.25L460.74 321.98M464.35 322.12L462.55 323.85M466.15 323.99L464.35 325.73M467.96 325.86L466.16 327.6M469.76 327.73L467.96 329.47M471.57 329.61L469.77 331.34M473.37 331.48L471.57 333.21M475.18 333.35L473.38 335.08M476.98 335.22L475.18 336.96M478.79 337.09L476.99 338.83M480.59 338.96L478.79 340.7M482.4 340.84L480.6 342.57M484.2 342.71L482.4 344.44M486.01 344.58L484.21 346.31" fill="none" stroke="#000" stroke-width="1"/>
<path d="M457.47 322.91L455.31 325M459.63 325.15L457.47 327.23M461.78 327.38L459.62 329.46M463.93 329.61L461.77 331.69M466.08 331.84L463.92 333.92M468.23 334.07L466.07 336.15M470.39 336.3L468.23 338.39M472.54 338.53L470.38 340.62M474.69 340.77L472.53 342.85M476.84 343L474.68 345.08M478.99 345.23L476.83 347.31M481.14 347.46L478.98 349.54M483.3 349.69L481.14 351.77" fill="none" stroke="#000" stroke-width="1"/>
<path d="M460.33 321.55L458.17 323.63M463.24 324.57L461.08 326.66M466.16 327.6L464 329.68M469.07 330.62L466.91 332.7M471.99 333.64L469.83 335.73M474.9 336.67L472.75 338.75M477.82 339.69L475.66 341.77M480.74 342.71L478.58 344.8M483.65 345.74L481.49 347.82" fill="none" stroke="#000" stroke-width="1"/>
<path d="M488.6 353.8L460.6 374.8" fill="none" stroke="#000" stroke-width="1"/>
<path d="M487.1 351.8L459.1 372.8" fill="none" stroke="#000" stroke-width="1"/>
<path d="M485.3 349.4L457.3 370.4" fill="none" stroke="#000" stroke-width="1"/>
<path d="M488.6 353.8L487.1 351.8M486.36 355.48L484.86 353.48M484.12 357.16L482.62 355.16M481.88 358.84L480.38 356.84M479.64 360.52L478.14 358.52M477.4 362.2L475.9 360.2M475.16 363.88L473.66 361.88M472.92 365.56L471.42 363.56M470.68 367.24L469.18 365.24M468.44 368.92L466.94 366.92M466.2 370.6L464.7 368.6M463.96 372.28L462.46 370.28M461.72 373.96L460.22 371.96" fill="none" stroke="#000" stroke-width="1"/>
<path d="M485.9 352.7L484.1 350.3M483.02 354.86L481.22 352.46M480.14 357.02L478.34 354.62M477.26 359.18L475.46 356.78M474.38 361.34L472.58 358.94M471.5 363.5L469.7 361.1M468.62 365.66L466.82 363.26M465.74 367.82L463.94 365.42M462.86 369.98L461.06 367.58M459.98 372.14L458.18 369.74" fill="none" stroke="#000" stroke-width="1"/>
<path d="M459 327h1.5v1.5h-1.5zM462 330h1.5v1.5h-1.5zM464 332h1.5v1.5h-1.5zM470 338h1.5v1.5h-1.5zM474 342h1.5v1.5h-1.5z" fill="#ff00ff"/>
<path d="M463 331h1.5v1.5h-1.5zM468 339h1.5v1.5h-1.5zM472 338h1.5v1.5h-1.5zM476 345h1.5v1.5h-1.5zM481 351h1.5v1.5h-1.5zM477 355h1.5v1.5h-1.5zM472 359h1.5v1.5h-1.5z" fill="#ffff00"/>
<path d="M458 325h1.5v1.5h-1.5zM460 331h1.5v1.5h-1.5zM470 336h1.5v1.5h-1.5zM474 354h1.5v1.5h-1.5z" fill="#00ffff"/>
<path d="M481 352h1.5v1.5h-1.5z" fill="#00ff00"/>
<path d="M420 327.5L430 320.5L438.6 312L445.6 305" fill="none" stroke="#ffff00" stroke-width="1"/>
<path d="M426.2 347L427 340.7L435.5 330.6L450.3 320.5L455 315" fill="none" stroke="#ffff00" stroke-width="1"/>
<path d="M426.2 347L427.8 354.7L431.6 362.5L430.9 371L422.3 379.5" fill="none" stroke="#ffff00" stroke-width="1"/>
<path d="M480.5 313.5L492.2 320.5L493 330.6" fill="none" stroke="#ffff00" stroke-width="1"/>
<path d="M428.5 339L447 320L457.5 311" fill="none" stroke="#ff0000" stroke-width="1" stroke-dasharray="4 2"/>
<path d="M443.3 341.5L447.2 337.6L456.5 330.6" fill="none" stroke="#ffff00" stroke-width="1"/>
<path d="M456.5 347L468 347" fill="none" stroke="#ffff00" stroke-width="1"/>
<path d="M457.3 334.5L456.5 339.2L453.4 343" fill="none" stroke="#00ffff" stroke-width="1"/>
<path d="M436.7 350L446.8 342.7L451 342.7L460.4 353.1L465 351" fill="none" stroke="#000" stroke-width="1"/>
<path d="M439.4 351.6L448 344.6L460.4 357L452.6 364Z" fill="#ff0000" stroke="#ff0000" stroke-width="1"/>
<path d="M451 356h1v3h-1zM452 356h2.5v1h-2.5zM443 354.5h3v1h-3z" fill="#fff"/>
<path d="M469.7 354.7L453.4 366.3" fill="none" stroke="#000" stroke-width="4"/>
<path d="M482.16 334.53L494.96 324.53" fill="none" stroke="#000" stroke-width="1"/>
<path d="M483.7 336.5L496.5 326.5" fill="none" stroke="#000" stroke-width="1"/>
<path d="M485.24 338.47L498.04 328.47" fill="none" stroke="#000" stroke-width="1"/>
<path d="M482.16 334.53L485.24 338.47M484.21 332.93L487.29 336.87M486.26 331.33L489.34 335.27M488.31 329.73L491.39 333.67M490.36 328.13L493.43 332.07M492.41 326.53L495.48 330.47M494.45 324.93L497.53 328.87" fill="none" stroke="#000" stroke-width="1"/>
<path d="M482 332L497.6 322" fill="none" stroke="#ff0000" stroke-width="1"/>
<path d="M486.8 340.7L498.4 330.6L500 322" fill="none" stroke="#ff0000" stroke-width="1"/>
<path d="M489 341L496.5 336.5" fill="none" stroke="#000" stroke-width="1"/>
<path d="M479 324h2.5v6h-2.5z" fill="#ff0000"/>
<path d="M498.33 309.73L500.85 318.56L503.38 324.87L498.33 332.44" fill="none" stroke="#000" stroke-width="1"/>
<path d="M502.11 309.73L504.64 318.56L506.53 323.61" fill="none" stroke="#ff0000" stroke-width="1"/>
<path d="M416.31 329.29L446.59 290.8L478.14 276.92L467.41 253.58L516.62 266.2" fill="none" stroke="#000" stroke-width="1"/>
<path d="M442.18 252.32L450.13 288.91L459.84 314.78" fill="none" stroke="#000" stroke-width="1"/>
<path d="M478.14 361.69L505.9 375.57L534.92 391.34" fill="none" stroke="#000" stroke-width="1"/>
<path d="M488.23 351.59L503.38 370.52L523.56 393.23L536.81 409.01" fill="none" stroke="#000" stroke-width="1"/>
<path d="M430.19 391.34L451.64 374.31" fill="none" stroke="#000" stroke-width="1"/>
<path d="M416.31 328.88L426.4 315" fill="none" stroke="#000" stroke-width="1"/>
<path d="M825.5 286.4L660.2 393.2" fill="none" stroke="#000" stroke-width="1"/>
<path d="M639.7 288L659.6 393.2" fill="none" stroke="#000" stroke-width="1"/>
<path d="M979.5 324.5L942.9 405" fill="none" stroke="#000" stroke-width="1"/>
<path d="M592.97 385.66L596.12 388.19L593.6 390.71L590.69 388.44L592.97 385.66" fill="none" stroke="#000" stroke-width="1"/>
<path d="M642.5 236L908.8 433" fill="none" stroke="#ffff00" stroke-width="1"/>
<path d="M642.5 236L908.8 433" stroke="#000" stroke-width="1" stroke-dasharray="1.4 3.4" fill="none"/>
<path d="M797.7 345.9L811.6 357.9" fill="none" stroke="#ffff00" stroke-width="4"/>
<path d="M704.4 369.3L722.6 357.9" fill="none" stroke="#ffff00" stroke-width="4"/>
<path d="M469.3 233L469.3 370" fill="none" stroke="#0000ff" stroke-width="1" stroke-dasharray="5 2"/>
<path d="M496.3 233L496.3 370" fill="none" stroke="#0000ff" stroke-width="1"/>
<path d="M546.5 233L546.5 329" fill="none" stroke="#0000ff" stroke-width="1" stroke-dasharray="5 2"/>
<path d="M728.7 233L728.7 278" fill="none" stroke="#0000ff" stroke-width="1" stroke-dasharray="5 2"/>
<path d="M875 233L875 324" fill="none" stroke="#0000ff" stroke-width="1" stroke-dasharray="5 2"/>
<path d="M955 233L955 262L957 290L959 330L960 363" fill="none" stroke="#0000ff" stroke-width="1" stroke-dasharray="5 2"/>
<path d="M967.5 233L967.5 262L966 290L964 330L962.5 360" fill="none" stroke="#0000ff" stroke-width="1" stroke-dasharray="5 2"/>
<circle cx="469.3" cy="228.7" r="4" fill="#fff" stroke="#0000ff" stroke-width="1.2" shape-rendering="auto"/>
<path d="M464.8 228.5h9v2.6h-9zM468.7 224.2h1.3v9h-1.3zM466.8 225.7h5v1.2h-5z" fill="#0000ff"/>
<circle cx="496.3" cy="228.7" r="4" fill="#fff" stroke="#0000ff" stroke-width="1.2" shape-rendering="auto"/>
<path d="M491.8 228.5h9v2.6h-9zM495.7 224.2h1.3v9h-1.3zM493.8 225.7h5v1.2h-5z" fill="#0000ff"/>
<circle cx="546.5" cy="228.7" r="4" fill="#fff" stroke="#0000ff" stroke-width="1.2" shape-rendering="auto"/>
<path d="M542 228.5h9v2.6h-9zM545.9 224.2h1.3v9h-1.3zM544 225.7h5v1.2h-5z" fill="#0000ff"/>
<circle cx="728.7" cy="228.7" r="4" fill="#fff" stroke="#0000ff" stroke-width="1.2" shape-rendering="auto"/>
<path d="M724.2 228.5h9v2.6h-9zM728.1 224.2h1.3v9h-1.3zM726.2 225.7h5v1.2h-5z" fill="#0000ff"/>
<circle cx="875" cy="228.7" r="4" fill="#fff" stroke="#0000ff" stroke-width="1.2" shape-rendering="auto"/>
<path d="M870.5 228.5h9v2.6h-9zM874.4 224.2h1.3v9h-1.3zM872.5 225.7h5v1.2h-5z" fill="#0000ff"/>
<circle cx="955" cy="228.7" r="4" fill="#fff" stroke="#0000ff" stroke-width="1.2" shape-rendering="auto"/>
<path d="M950.5 228.5h9v2.6h-9zM954.4 224.2h1.3v9h-1.3zM952.5 225.7h5v1.2h-5z" fill="#0000ff"/>
<circle cx="967.5" cy="228.7" r="4" fill="#fff" stroke="#0000ff" stroke-width="1.2" shape-rendering="auto"/>
<path d="M963 228.5h9v2.6h-9zM966.9 224.2h1.3v9h-1.3zM965 225.7h5v1.2h-5z" fill="#0000ff"/>
<circle cx="936.3" cy="243.9" r="16" fill="none" stroke="#000" stroke-width="1.2" shape-rendering="auto"/>
<path d="M920.5 243.2L952.3 242L920.5 247.5Z" fill="#000" stroke="#000" stroke-width="1"/>
<path d="M954.5 240.5h4.5v5h-4.5z" fill="#000"/>
<path d="M469.3 370.3L497 370.3L547 329L728.5 278L874.8 324.5L961.2 363.6" fill="none" stroke="#ff0000" stroke-width="2"/>
<path d="M458.6 367.4h10.7v4.1h-10.7zM463 374h12v4.5h-12zM490 374h11v4h-11zM540 333.3h12v4.4h-12zM723.3 280.7h10.7v3.8h-10.7zM869 328.2h11v4.8h-11z" fill="#000"/>
<path d="M749 321.7h12.8v11h-12.8zM737.8 324h6.2v10h-6.2z" fill="#ff0000"/>
<path d="M973 346L955 384.4" fill="none" stroke="#000" stroke-width="5"/>
<path d="M477 233h3v6h-3zM478 229h1v4h-1zM477 230h3v1h-3zM478 232h2v1h-2z" fill="#ff0000"/>
<path d="M478 234h1v1h-1z" fill="#fff"/>
<path d="M459 247h3v6h-3zM460 243h1v4h-1zM459 244h3v1h-3zM460 246h2v1h-2z" fill="#ff0000"/>
<path d="M460 248h1v1h-1z" fill="#fff"/>
<path d="M478 260h3v6h-3zM479 256h1v4h-1zM478 257h3v1h-3zM479 259h2v1h-2z" fill="#ff0000"/>
<path d="M479 262h1v1h-1z" fill="#fff"/>
<path d="M499 275h3v6h-3zM500 271h1v4h-1zM499 272h3v1h-3zM500 274h2v1h-2z" fill="#ff0000"/>
<path d="M500 277h1v1h-1z" fill="#fff"/>
<path d="M480 278h3v6h-3zM481 274h1v4h-1zM480 275h3v1h-3zM481 277h2v1h-2z" fill="#ff0000"/>
<path d="M481 280h1v1h-1z" fill="#fff"/>
<path d="M528 283h3v6h-3zM529 279h1v4h-1zM528 280h3v1h-3zM529 282h2v1h-2z" fill="#ff0000"/>
<path d="M529 285h1v1h-1z" fill="#fff"/>
<path d="M476 309h3v6h-3zM477 305h1v4h-1zM476 306h3v1h-3zM477 308h2v1h-2z" fill="#ff0000"/>
<path d="M477 311h1v1h-1z" fill="#fff"/>
<path d="M511 313h3v6h-3zM512 309h1v4h-1zM511 310h3v1h-3zM511 312h2v1h-2z" fill="#ff0000"/>
<path d="M512 314h1v1h-1z" fill="#fff"/>
<path d="M538 316h3v6h-3zM539 312h1v4h-1zM538 313h3v1h-3zM538 315h2v1h-2z" fill="#ff0000"/>
<path d="M539 319h1v1h-1z" fill="#fff"/>
<path d="M480 328h3v6h-3zM481 324h1v4h-1zM480 325h3v1h-3zM481 327h2v1h-2z" fill="#ff0000"/>
<path d="M481 329h1v1h-1z" fill="#fff"/>
<path d="M519 330h3v6h-3zM520 326h1v4h-1zM519 327h3v1h-3zM519 329h2v1h-2z" fill="#ff0000"/>
<path d="M520 331h1v1h-1z" fill="#fff"/>
<path d="M591 288h3v6h-3zM592 284h1v4h-1zM591 285h3v1h-3zM592 287h2v1h-2z" fill="#ff0000"/>
<path d="M592 289h1v1h-1z" fill="#fff"/>
<path d="M580 294h3v6h-3zM581 290h1v4h-1zM580 291h3v1h-3zM581 293h2v1h-2z" fill="#ff0000"/>
<path d="M581 296h1v1h-1z" fill="#fff"/>
<path d="M630 277h3v6h-3zM631 273h1v4h-1zM630 274h3v1h-3zM631 276h2v1h-2z" fill="#ff0000"/>
<path d="M631 278h1v1h-1z" fill="#fff"/>
<path d="M615 294h3v6h-3zM616 290h1v4h-1zM615 291h3v1h-3zM616 293h2v1h-2z" fill="#ff0000"/>
<path d="M616 296h1v1h-1z" fill="#fff"/>
<path d="M642 298h3v6h-3zM643 294h1v4h-1zM642 295h3v1h-3zM642 297h2v1h-2z" fill="#ff0000"/>
<path d="M643 301h1v1h-1z" fill="#fff"/>
<path d="M593 312h3v6h-3zM594 308h1v4h-1zM593 309h3v1h-3zM594 311h2v1h-2z" fill="#ff0000"/>
<path d="M594 313h1v1h-1z" fill="#fff"/>
<path d="M624 311h3v6h-3zM625 307h1v4h-1zM624 308h3v1h-3zM625 310h2v1h-2z" fill="#ff0000"/>
<path d="M625 313h1v1h-1z" fill="#fff"/>
<path d="M597 327h3v6h-3zM598 323h1v4h-1zM597 324h3v1h-3zM598 326h2v1h-2z" fill="#ff0000"/>
<path d="M598 329h1v1h-1z" fill="#fff"/>
<path d="M629 329h3v6h-3zM630 325h1v4h-1zM629 326h3v1h-3zM630 328h2v1h-2z" fill="#ff0000"/>
<path d="M630 330h1v1h-1z" fill="#fff"/>
<path d="M641 325h3v6h-3zM642 321h1v4h-1zM641 322h3v1h-3zM642 324h2v1h-2z" fill="#ff0000"/>
<path d="M642 327h1v1h-1z" fill="#fff"/>
<path d="M518 356h3v6h-3zM519 352h1v4h-1zM518 353h3v1h-3zM518 355h2v1h-2z" fill="#ff0000"/>
<path d="M519 359h1v1h-1z" fill="#fff"/>
<path d="M481 372h3v6h-3zM482 368h1v4h-1zM481 369h3v1h-3zM481 371h2v1h-2z" fill="#ff0000"/>
<path d="M482 373h1v1h-1z" fill="#fff"/>
<path d="M528 371h3v6h-3zM529 367h1v4h-1zM528 368h3v1h-3zM528 370h2v1h-2z" fill="#ff0000"/>
<path d="M529 372h1v1h-1z" fill="#fff"/>
<path d="M564 368h3v6h-3zM565 364h1v4h-1zM564 365h3v1h-3zM565 367h2v1h-2z" fill="#ff0000"/>
<path d="M565 369h1v1h-1z" fill="#fff"/>
<path d="M506 384h3v6h-3zM507 380h1v4h-1zM506 381h3v1h-3zM506 383h2v1h-2z" fill="#ff0000"/>
<path d="M507 387h1v1h-1z" fill="#fff"/>
<path d="M523 396h3v6h-3zM524 392h1v4h-1zM523 393h3v1h-3zM524 395h2v1h-2z" fill="#ff0000"/>
<path d="M524 397h1v1h-1z" fill="#fff"/>
<path d="M484 400h3v6h-3zM485 396h1v4h-1zM484 397h3v1h-3zM484 399h2v1h-2z" fill="#ff0000"/>
<path d="M485 401h1v1h-1z" fill="#fff"/>
<path d="M480 405h3v6h-3zM481 401h1v4h-1zM480 402h3v1h-3zM480 404h2v1h-2z" fill="#ff0000"/>
<path d="M481 408h1v1h-1z" fill="#fff"/>
<path d="M501 411h3v6h-3zM502 407h1v4h-1zM501 408h3v1h-3zM501 410h2v1h-2z" fill="#ff0000"/>
<path d="M502 412h1v1h-1z" fill="#fff"/>
<path d="M487 416h3v6h-3zM488 412h1v4h-1zM487 413h3v1h-3zM488 415h2v1h-2z" fill="#ff0000"/>
<path d="M488 417h1v1h-1z" fill="#fff"/>
<path d="M470 420h3v6h-3zM471 416h1v4h-1zM470 417h3v1h-3zM471 419h2v1h-2z" fill="#ff0000"/>
<path d="M471 422h1v1h-1z" fill="#fff"/>
<path d="M466 429h3v6h-3zM467 425h1v4h-1zM466 426h3v1h-3zM466 428h2v1h-2z" fill="#ff0000"/>
<path d="M467 432h1v1h-1z" fill="#fff"/>
<path d="M495 429h3v6h-3zM496 425h1v4h-1zM495 426h3v1h-3zM495 428h2v1h-2z" fill="#ff0000"/>
<path d="M496 430h1v1h-1z" fill="#fff"/>
<path d="M553 338h3v6h-3zM554 334h1v4h-1zM553 335h3v1h-3zM554 337h2v1h-2z" fill="#ff0000"/>
<path d="M554 339h1v1h-1z" fill="#fff"/>
<path d="M576 346h3v6h-3zM577 342h1v4h-1zM576 343h3v1h-3zM577 345h2v1h-2z" fill="#ff0000"/>
<path d="M577 348h1v1h-1z" fill="#fff"/>
<path d="M621 344h3v6h-3zM622 340h1v4h-1zM621 341h3v1h-3zM622 343h2v1h-2z" fill="#ff0000"/>
<path d="M622 345h1v1h-1z" fill="#fff"/>
<path d="M601 351h3v6h-3zM602 347h1v4h-1zM601 348h3v1h-3zM601 350h2v1h-2z" fill="#ff0000"/>
<path d="M602 352h1v1h-1z" fill="#fff"/>
<path d="M643 344h3v6h-3zM644 340h1v4h-1zM643 341h3v1h-3zM643 343h2v1h-2z" fill="#ff0000"/>
<path d="M644 347h1v1h-1z" fill="#fff"/>
<path d="M625 364h3v6h-3zM626 360h1v4h-1zM625 361h3v1h-3zM626 363h2v1h-2z" fill="#ff0000"/>
<path d="M626 366h1v1h-1z" fill="#fff"/>
<path d="M593 372h3v6h-3zM594 368h1v4h-1zM593 369h3v1h-3zM594 371h2v1h-2z" fill="#ff0000"/>
<path d="M594 374h1v1h-1z" fill="#fff"/>
<path d="M588 380h3v6h-3zM589 376h1v4h-1zM588 377h3v1h-3zM589 379h2v1h-2z" fill="#ff0000"/>
<path d="M589 382h1v1h-1z" fill="#fff"/>
<path d="M615 383h3v6h-3zM616 379h1v4h-1zM615 380h3v1h-3zM616 382h2v1h-2z" fill="#ff0000"/>
<path d="M616 384h1v1h-1z" fill="#fff"/>
<path d="M645 371h3v6h-3zM646 367h1v4h-1zM645 368h3v1h-3zM646 370h2v1h-2z" fill="#ff0000"/>
<path d="M646 373h1v1h-1z" fill="#fff"/>
<path d="M564 392h3v6h-3zM565 388h1v4h-1zM564 389h3v1h-3zM565 391h2v1h-2z" fill="#ff0000"/>
<path d="M565 394h1v1h-1z" fill="#fff"/>
<path d="M577 399h3v6h-3zM578 395h1v4h-1zM577 396h3v1h-3zM577 398h2v1h-2z" fill="#ff0000"/>
<path d="M578 400h1v1h-1z" fill="#fff"/>
<path d="M589 393h3v6h-3zM590 389h1v4h-1zM589 390h3v1h-3zM589 392h2v1h-2z" fill="#ff0000"/>
<path d="M590 394h1v1h-1z" fill="#fff"/>
<path d="M599 390h3v6h-3zM600 386h1v4h-1zM599 387h3v1h-3zM599 389h2v1h-2z" fill="#ff0000"/>
<path d="M600 391h1v1h-1z" fill="#fff"/>
<path d="M622 395h3v6h-3zM623 391h1v4h-1zM622 392h3v1h-3zM623 394h2v1h-2z" fill="#ff0000"/>
<path d="M623 397h1v1h-1z" fill="#fff"/>
<path d="M548 396h3v6h-3zM549 392h1v4h-1zM548 393h3v1h-3zM549 395h2v1h-2z" fill="#ff0000"/>
<path d="M549 397h1v1h-1z" fill="#fff"/>
<path d="M555 415h3v6h-3zM556 411h1v4h-1zM555 412h3v1h-3zM556 414h2v1h-2z" fill="#ff0000"/>
<path d="M556 416h1v1h-1z" fill="#fff"/>
<path d="M663 277h3v6h-3zM664 273h1v4h-1zM663 274h3v1h-3zM663 276h2v1h-2z" fill="#ff0000"/>
<path d="M664 278h1v1h-1z" fill="#fff"/>
<path d="M679 282h3v6h-3zM680 278h1v4h-1zM679 279h3v1h-3zM680 281h2v1h-2z" fill="#ff0000"/>
<path d="M680 283h1v1h-1z" fill="#fff"/>
<path d="M696 273h3v6h-3zM697 269h1v4h-1zM696 270h3v1h-3zM696 272h2v1h-2z" fill="#ff0000"/>
<path d="M697 274h1v1h-1z" fill="#fff"/>
<path d="M724 275h3v6h-3zM725 271h1v4h-1zM724 272h3v1h-3zM725 274h2v1h-2z" fill="#ff0000"/>
<path d="M725 277h1v1h-1z" fill="#fff"/>
<path d="M747 266h3v6h-3zM748 262h1v4h-1zM747 263h3v1h-3zM747 265h2v1h-2z" fill="#ff0000"/>
<path d="M748 269h1v1h-1z" fill="#fff"/>
<path d="M744 277h3v6h-3zM745 273h1v4h-1zM744 274h3v1h-3zM744 276h2v1h-2z" fill="#ff0000"/>
<path d="M745 278h1v1h-1z" fill="#fff"/>
<path d="M757 273h3v6h-3zM758 269h1v4h-1zM757 270h3v1h-3zM758 272h2v1h-2z" fill="#ff0000"/>
<path d="M758 274h1v1h-1z" fill="#fff"/>
<path d="M770 271h3v6h-3zM771 267h1v4h-1zM770 268h3v1h-3zM770 270h2v1h-2z" fill="#ff0000"/>
<path d="M771 274h1v1h-1z" fill="#fff"/>
<path d="M784 273h3v6h-3zM785 269h1v4h-1zM784 270h3v1h-3zM785 272h2v1h-2z" fill="#ff0000"/>
<path d="M785 275h1v1h-1z" fill="#fff"/>
<path d="M804 268h3v6h-3zM805 264h1v4h-1zM804 265h3v1h-3zM805 267h2v1h-2z" fill="#ff0000"/>
<path d="M805 269h1v1h-1z" fill="#fff"/>
<path d="M826 281h3v6h-3zM827 277h1v4h-1zM826 278h3v1h-3zM827 280h2v1h-2z" fill="#ff0000"/>
<path d="M827 283h1v1h-1z" fill="#fff"/>
<path d="M859 284h3v6h-3zM860 280h1v4h-1zM859 281h3v1h-3zM859 283h2v1h-2z" fill="#ff0000"/>
<path d="M860 285h1v1h-1z" fill="#fff"/>
<path d="M805 284h3v6h-3zM806 280h1v4h-1zM805 281h3v1h-3zM806 283h2v1h-2z" fill="#ff0000"/>
<path d="M806 286h1v1h-1z" fill="#fff"/>
<path d="M813 290h3v6h-3zM814 286h1v4h-1zM813 287h3v1h-3zM814 289h2v1h-2z" fill="#ff0000"/>
<path d="M814 291h1v1h-1z" fill="#fff"/>
<path d="M781 288h3v6h-3zM782 284h1v4h-1zM781 285h3v1h-3zM781 287h2v1h-2z" fill="#ff0000"/>
<path d="M782 291h1v1h-1z" fill="#fff"/>
<path d="M657 302h3v6h-3zM658 298h1v4h-1zM657 299h3v1h-3zM658 301h2v1h-2z" fill="#ff0000"/>
<path d="M658 303h1v1h-1z" fill="#fff"/>
<path d="M672 304h3v6h-3zM673 300h1v4h-1zM672 301h3v1h-3zM673 303h2v1h-2z" fill="#ff0000"/>
<path d="M673 306h1v1h-1z" fill="#fff"/>
<path d="M691 301h3v6h-3zM692 297h1v4h-1zM691 298h3v1h-3zM691 300h2v1h-2z" fill="#ff0000"/>
<path d="M692 304h1v1h-1z" fill="#fff"/>
<path d="M711 290h3v6h-3zM712 286h1v4h-1zM711 287h3v1h-3zM712 289h2v1h-2z" fill="#ff0000"/>
<path d="M712 291h1v1h-1z" fill="#fff"/>
<path d="M733 291h3v6h-3zM734 287h1v4h-1zM733 288h3v1h-3zM733 290h2v1h-2z" fill="#ff0000"/>
<path d="M734 292h1v1h-1z" fill="#fff"/>
<path d="M748 295h3v6h-3zM749 291h1v4h-1zM748 292h3v1h-3zM749 294h2v1h-2z" fill="#ff0000"/>
<path d="M749 297h1v1h-1z" fill="#fff"/>
<path d="M758 302h3v6h-3zM759 298h1v4h-1zM758 299h3v1h-3zM759 301h2v1h-2z" fill="#ff0000"/>
<path d="M759 304h1v1h-1z" fill="#fff"/>
<path d="M712 309h3v6h-3zM713 305h1v4h-1zM712 306h3v1h-3zM713 308h2v1h-2z" fill="#ff0000"/>
<path d="M713 310h1v1h-1z" fill="#fff"/>
<path d="M743 309h3v6h-3zM744 305h1v4h-1zM743 306h3v1h-3zM743 308h2v1h-2z" fill="#ff0000"/>
<path d="M744 310h1v1h-1z" fill="#fff"/>
<path d="M788 307h3v6h-3zM789 303h1v4h-1zM788 304h3v1h-3zM788 306h2v1h-2z" fill="#ff0000"/>
<path d="M789 308h1v1h-1z" fill="#fff"/>
<path d="M814 311h3v6h-3zM815 307h1v4h-1zM814 308h3v1h-3zM814 310h2v1h-2z" fill="#ff0000"/>
<path d="M815 312h1v1h-1z" fill="#fff"/>
<path d="M836 305h3v6h-3zM837 301h1v4h-1zM836 302h3v1h-3zM837 304h2v1h-2z" fill="#ff0000"/>
<path d="M837 307h1v1h-1z" fill="#fff"/>
<path d="M853 299h3v6h-3zM854 295h1v4h-1zM853 296h3v1h-3zM853 298h2v1h-2z" fill="#ff0000"/>
<path d="M854 302h1v1h-1z" fill="#fff"/>
<path d="M867 317h3v6h-3zM868 313h1v4h-1zM867 314h3v1h-3zM868 316h2v1h-2z" fill="#ff0000"/>
<path d="M868 319h1v1h-1z" fill="#fff"/>
<path d="M674 322h3v6h-3zM675 318h1v4h-1zM674 319h3v1h-3zM675 321h2v1h-2z" fill="#ff0000"/>
<path d="M675 324h1v1h-1z" fill="#fff"/>
<path d="M693 324h3v6h-3zM694 320h1v4h-1zM693 321h3v1h-3zM694 323h2v1h-2z" fill="#ff0000"/>
<path d="M694 325h1v1h-1z" fill="#fff"/>
<path d="M732 322h3v6h-3zM733 318h1v4h-1zM732 319h3v1h-3zM733 321h2v1h-2z" fill="#ff0000"/>
<path d="M733 324h1v1h-1z" fill="#fff"/>
<path d="M725 328h3v6h-3zM726 324h1v4h-1zM725 325h3v1h-3zM726 327h2v1h-2z" fill="#ff0000"/>
<path d="M726 330h1v1h-1z" fill="#fff"/>
<path d="M660 328h3v6h-3zM661 324h1v4h-1zM660 325h3v1h-3zM660 327h2v1h-2z" fill="#ff0000"/>
<path d="M661 331h1v1h-1z" fill="#fff"/>
<path d="M777 318h3v6h-3zM778 314h1v4h-1zM777 315h3v1h-3zM778 317h2v1h-2z" fill="#ff0000"/>
<path d="M778 319h1v1h-1z" fill="#fff"/>
<path d="M770 325h3v6h-3zM771 321h1v4h-1zM770 322h3v1h-3zM771 324h2v1h-2z" fill="#ff0000"/>
<path d="M771 327h1v1h-1z" fill="#fff"/>
<path d="M804 326h3v6h-3zM805 322h1v4h-1zM804 323h3v1h-3zM804 325h2v1h-2z" fill="#ff0000"/>
<path d="M805 329h1v1h-1z" fill="#fff"/>
<path d="M847 325h3v6h-3zM848 321h1v4h-1zM847 322h3v1h-3zM847 324h2v1h-2z" fill="#ff0000"/>
<path d="M848 326h1v1h-1z" fill="#fff"/>
<path d="M859 330h3v6h-3zM860 326h1v4h-1zM859 327h3v1h-3zM859 329h2v1h-2z" fill="#ff0000"/>
<path d="M860 333h1v1h-1z" fill="#fff"/>
<path d="M795 331h3v6h-3zM796 327h1v4h-1zM795 328h3v1h-3zM796 330h2v1h-2z" fill="#ff0000"/>
<path d="M796 333h1v1h-1z" fill="#fff"/>
<path d="M765 331h3v6h-3zM766 327h1v4h-1zM765 328h3v1h-3zM765 330h2v1h-2z" fill="#ff0000"/>
<path d="M766 332h1v1h-1z" fill="#fff"/>
<path d="M890 304h3v6h-3zM891 300h1v4h-1zM890 301h3v1h-3zM890 303h2v1h-2z" fill="#ff0000"/>
<path d="M891 307h1v1h-1z" fill="#fff"/>
<path d="M912 314h3v6h-3zM913 310h1v4h-1zM912 311h3v1h-3zM912 313h2v1h-2z" fill="#ff0000"/>
<path d="M913 315h1v1h-1z" fill="#fff"/>
<path d="M944 317h3v6h-3zM945 313h1v4h-1zM944 314h3v1h-3zM944 316h2v1h-2z" fill="#ff0000"/>
<path d="M945 318h1v1h-1z" fill="#fff"/>
<path d="M926 329h3v6h-3zM927 325h1v4h-1zM926 326h3v1h-3zM926 328h2v1h-2z" fill="#ff0000"/>
<path d="M927 332h1v1h-1z" fill="#fff"/>
<path d="M895 331h3v6h-3zM896 327h1v4h-1zM895 328h3v1h-3zM896 330h2v1h-2z" fill="#ff0000"/>
<path d="M896 333h1v1h-1z" fill="#fff"/>
<path d="M677 343h3v6h-3zM678 339h1v4h-1zM677 340h3v1h-3zM678 342h2v1h-2z" fill="#ff0000"/>
<path d="M678 344h1v1h-1z" fill="#fff"/>
<path d="M688 348h3v6h-3zM689 344h1v4h-1zM688 345h3v1h-3zM689 347h2v1h-2z" fill="#ff0000"/>
<path d="M689 349h1v1h-1z" fill="#fff"/>
<path d="M664 354h3v6h-3zM665 350h1v4h-1zM664 351h3v1h-3zM664 353h2v1h-2z" fill="#ff0000"/>
<path d="M665 357h1v1h-1z" fill="#fff"/>
<path d="M715 337h3v6h-3zM716 333h1v4h-1zM715 334h3v1h-3zM716 336h2v1h-2z" fill="#ff0000"/>
<path d="M716 338h1v1h-1z" fill="#fff"/>
<path d="M700 351h3v6h-3zM701 347h1v4h-1zM700 348h3v1h-3zM701 350h2v1h-2z" fill="#ff0000"/>
<path d="M701 352h1v1h-1z" fill="#fff"/>
<path d="M711 352h3v6h-3zM712 348h1v4h-1zM711 349h3v1h-3zM712 351h2v1h-2z" fill="#ff0000"/>
<path d="M712 353h1v1h-1z" fill="#fff"/>
<path d="M697 361h3v6h-3zM698 357h1v4h-1zM697 358h3v1h-3zM697 360h2v1h-2z" fill="#ff0000"/>
<path d="M698 364h1v1h-1z" fill="#fff"/>
<path d="M728 352h3v6h-3zM729 348h1v4h-1zM728 349h3v1h-3zM728 351h2v1h-2z" fill="#ff0000"/>
<path d="M729 353h1v1h-1z" fill="#fff"/>
<path d="M737 345h3v6h-3zM738 341h1v4h-1zM737 342h3v1h-3zM738 344h2v1h-2z" fill="#ff0000"/>
<path d="M738 347h1v1h-1z" fill="#fff"/>
<path d="M746 359h3v6h-3zM747 355h1v4h-1zM746 356h3v1h-3zM746 358h2v1h-2z" fill="#ff0000"/>
<path d="M747 360h1v1h-1z" fill="#fff"/>
<path d="M752 340h3v6h-3zM753 336h1v4h-1zM752 337h3v1h-3zM752 339h2v1h-2z" fill="#ff0000"/>
<path d="M753 343h1v1h-1z" fill="#fff"/>
<path d="M765 360h3v6h-3zM766 356h1v4h-1zM765 357h3v1h-3zM766 359h2v1h-2z" fill="#ff0000"/>
<path d="M766 361h1v1h-1z" fill="#fff"/>
<path d="M775 353h3v6h-3zM776 349h1v4h-1zM775 350h3v1h-3zM776 352h2v1h-2z" fill="#ff0000"/>
<path d="M776 354h1v1h-1z" fill="#fff"/>
<path d="M783 340h3v6h-3zM784 336h1v4h-1zM783 337h3v1h-3zM784 339h2v1h-2z" fill="#ff0000"/>
<path d="M784 342h1v1h-1z" fill="#fff"/>
<path d="M789 357h3v6h-3zM790 353h1v4h-1zM789 354h3v1h-3zM789 356h2v1h-2z" fill="#ff0000"/>
<path d="M790 360h1v1h-1z" fill="#fff"/>
<path d="M806 347h3v6h-3zM807 343h1v4h-1zM806 344h3v1h-3zM807 346h2v1h-2z" fill="#ff0000"/>
<path d="M807 349h1v1h-1z" fill="#fff"/>
<path d="M813 338h3v6h-3zM814 334h1v4h-1zM813 335h3v1h-3zM813 337h2v1h-2z" fill="#ff0000"/>
<path d="M814 341h1v1h-1z" fill="#fff"/>
<path d="M831 342h3v6h-3zM832 338h1v4h-1zM831 339h3v1h-3zM831 341h2v1h-2z" fill="#ff0000"/>
<path d="M832 343h1v1h-1z" fill="#fff"/>
<path d="M838 336h3v6h-3zM839 332h1v4h-1zM838 333h3v1h-3zM838 335h2v1h-2z" fill="#ff0000"/>
<path d="M839 339h1v1h-1z" fill="#fff"/>
<path d="M846 343h3v6h-3zM847 339h1v4h-1zM846 340h3v1h-3zM847 342h2v1h-2z" fill="#ff0000"/>
<path d="M847 345h1v1h-1z" fill="#fff"/>
<path d="M869 342h3v6h-3zM870 338h1v4h-1zM869 339h3v1h-3zM870 341h2v1h-2z" fill="#ff0000"/>
<path d="M870 344h1v1h-1z" fill="#fff"/>
<path d="M857 355h3v6h-3zM858 351h1v4h-1zM857 352h3v1h-3zM858 354h2v1h-2z" fill="#ff0000"/>
<path d="M858 356h1v1h-1z" fill="#fff"/>
<path d="M830 354h3v6h-3zM831 350h1v4h-1zM830 351h3v1h-3zM830 353h2v1h-2z" fill="#ff0000"/>
<path d="M831 357h1v1h-1z" fill="#fff"/>
<path d="M809 361h3v6h-3zM810 357h1v4h-1zM809 358h3v1h-3zM810 360h2v1h-2z" fill="#ff0000"/>
<path d="M810 362h1v1h-1z" fill="#fff"/>
<path d="M667 376h3v6h-3zM668 372h1v4h-1zM667 373h3v1h-3zM667 375h2v1h-2z" fill="#ff0000"/>
<path d="M668 377h1v1h-1z" fill="#fff"/>
<path d="M688 380h3v6h-3zM689 376h1v4h-1zM688 377h3v1h-3zM689 379h2v1h-2z" fill="#ff0000"/>
<path d="M689 381h1v1h-1z" fill="#fff"/>
<path d="M710 379h3v6h-3zM711 375h1v4h-1zM710 376h3v1h-3zM711 378h2v1h-2z" fill="#ff0000"/>
<path d="M711 380h1v1h-1z" fill="#fff"/>
<path d="M737 373h3v6h-3zM738 369h1v4h-1zM737 370h3v1h-3zM737 372h2v1h-2z" fill="#ff0000"/>
<path d="M738 376h1v1h-1z" fill="#fff"/>
<path d="M758 383h3v6h-3zM759 379h1v4h-1zM758 380h3v1h-3zM758 382h2v1h-2z" fill="#ff0000"/>
<path d="M759 384h1v1h-1z" fill="#fff"/>
<path d="M726 388h3v6h-3zM727 384h1v4h-1zM726 385h3v1h-3zM726 387h2v1h-2z" fill="#ff0000"/>
<path d="M727 391h1v1h-1z" fill="#fff"/>
<path d="M782 373h3v6h-3zM783 369h1v4h-1zM782 370h3v1h-3zM782 372h2v1h-2z" fill="#ff0000"/>
<path d="M783 376h1v1h-1z" fill="#fff"/>
<path d="M814 380h3v6h-3zM815 376h1v4h-1zM814 377h3v1h-3zM815 379h2v1h-2z" fill="#ff0000"/>
<path d="M815 381h1v1h-1z" fill="#fff"/>
<path d="M794 390h3v6h-3zM795 386h1v4h-1zM794 387h3v1h-3zM795 389h2v1h-2z" fill="#ff0000"/>
<path d="M795 392h1v1h-1z" fill="#fff"/>
<path d="M843 380h3v6h-3zM844 376h1v4h-1zM843 377h3v1h-3zM843 379h2v1h-2z" fill="#ff0000"/>
<path d="M844 383h1v1h-1z" fill="#fff"/>
<path d="M874 373h3v6h-3zM875 369h1v4h-1zM874 370h3v1h-3zM875 372h2v1h-2z" fill="#ff0000"/>
<path d="M875 374h1v1h-1z" fill="#fff"/>
<path d="M831 399h3v6h-3zM832 395h1v4h-1zM831 396h3v1h-3zM831 398h2v1h-2z" fill="#ff0000"/>
<path d="M832 402h1v1h-1z" fill="#fff"/>
<path d="M850 397h3v6h-3zM851 393h1v4h-1zM850 394h3v1h-3zM851 396h2v1h-2z" fill="#ff0000"/>
<path d="M851 398h1v1h-1z" fill="#fff"/>
<path d="M860 393h3v6h-3zM861 389h1v4h-1zM860 390h3v1h-3zM861 392h2v1h-2z" fill="#ff0000"/>
<path d="M861 395h1v1h-1z" fill="#fff"/>
<path d="M872 411h3v6h-3zM873 407h1v4h-1zM872 408h3v1h-3zM872 410h2v1h-2z" fill="#ff0000"/>
<path d="M873 414h1v1h-1z" fill="#fff"/>
<path d="M912 354h3v6h-3zM913 350h1v4h-1zM912 351h3v1h-3zM913 353h2v1h-2z" fill="#ff0000"/>
<path d="M913 355h1v1h-1z" fill="#fff"/>
<path d="M938 349h3v6h-3zM939 345h1v4h-1zM938 346h3v1h-3zM939 348h2v1h-2z" fill="#ff0000"/>
<path d="M939 350h1v1h-1z" fill="#fff"/>
<path d="M954 347h3v6h-3zM955 343h1v4h-1zM954 344h3v1h-3zM955 346h2v1h-2z" fill="#ff0000"/>
<path d="M955 349h1v1h-1z" fill="#fff"/>
<path d="M887 378h3v6h-3zM888 374h1v4h-1zM887 375h3v1h-3zM888 377h2v1h-2z" fill="#ff0000"/>
<path d="M888 379h1v1h-1z" fill="#fff"/>
<path d="M894 392h3v6h-3zM895 388h1v4h-1zM894 389h3v1h-3zM894 391h2v1h-2z" fill="#ff0000"/>
<path d="M895 395h1v1h-1z" fill="#fff"/>
<path d="M895 400h3v6h-3zM896 396h1v4h-1zM895 397h3v1h-3zM896 399h2v1h-2z" fill="#ff0000"/>
<path d="M896 402h1v1h-1z" fill="#fff"/>
<path d="M924 385h3v6h-3zM925 381h1v4h-1zM924 382h3v1h-3zM924 384h2v1h-2z" fill="#ff0000"/>
<path d="M925 388h1v1h-1z" fill="#fff"/>
<path d="M925 391h3v6h-3zM926 387h1v4h-1zM925 388h3v1h-3zM925 390h2v1h-2z" fill="#ff0000"/>
<path d="M926 392h1v1h-1z" fill="#fff"/>
<path d="M935 373h3v6h-3zM936 369h1v4h-1zM935 370h3v1h-3zM935 372h2v1h-2z" fill="#ff0000"/>
<path d="M936 376h1v1h-1z" fill="#fff"/>
<path d="M934 395h3v6h-3zM935 391h1v4h-1zM934 392h3v1h-3zM934 394h2v1h-2z" fill="#ff0000"/>
<path d="M935 398h1v1h-1z" fill="#fff"/>
<path d="M919 409h3v6h-3zM920 405h1v4h-1zM919 406h3v1h-3zM920 408h2v1h-2z" fill="#ff0000"/>
<path d="M920 411h1v1h-1z" fill="#fff"/>
<path d="M954 404h3v6h-3zM955 400h1v4h-1zM954 401h3v1h-3zM955 403h2v1h-2z" fill="#ff0000"/>
<path d="M955 406h1v1h-1z" fill="#fff"/>
<path d="M897 423h3v6h-3zM898 419h1v4h-1zM897 420h3v1h-3zM897 422h2v1h-2z" fill="#ff0000"/>
<path d="M898 426h1v1h-1z" fill="#fff"/>
<path d="M937 423h3v6h-3zM938 419h1v4h-1zM937 420h3v1h-3zM938 422h2v1h-2z" fill="#ff0000"/>
<path d="M938 424h1v1h-1z" fill="#fff"/>
<path d="M954 381h3v6h-3zM955 377h1v4h-1zM954 378h3v1h-3zM955 380h2v1h-2z" fill="#ff0000"/>
<path d="M955 383h1v1h-1z" fill="#fff"/>
</g>
<path d="M74.5 792.5V880.5H128.5ZM74.5 866.5H88.5V880.5M74 821L79 826L84 820M79 826V834M100 867L114 880M114 867L100 880" fill="none" stroke="#4848b8" stroke-width="1" shape-rendering="auto"/>
</svg>
<svg id="ui" width="1910" height="1030" viewBox="0 0 1910 1030">
<g><rect x="0" y="0" width="14" height="12" fill="#1fa797"/><path d="M0 9L3.2 0H5L8 8M1 6H7" stroke="#fff" stroke-width="1.6" fill="none"/><path d="M0 7.4H14M9.3 0V12" stroke="#e9f6f3" stroke-width="1.1"/><rect x="7.8" y="5.9" width="3" height="3" fill="#0f7f72" stroke="#fff" stroke-width=".8"/><rect x="8.9" y="7" width="0.9" height="0.9" fill="#fff"/></g>
<text x="0" y="0" font-size="12.5" font-family='"Liberation Sans", sans-serif' fill="#000" transform="translate(20.4 10) scale(1.05 1)" xml:space="preserve">AutoCAD 2007 - [C:\Users\1735\Desktop\</text>
<text x="0" y="0" font-size="12.5" font-family='"Liberation Sans", sans-serif' fill="#000" transform="translate(262.6 10) scale(1.01 1)" xml:space="preserve">H1041-101-X-</text>
<text class="cj" x="342.5" y="10.2" font-size="12" fill="#000" textLength="48">一般线路</text>
<text x="0" y="0" font-size="12.5" font-family='"Liberation Sans", sans-serif' fill="#000" transform="translate(391.6 10) scale(0.99 1)" xml:space="preserve">\YZDP01.dwg]</text>
<path d="M1797 4.5H1807" stroke="#000" stroke-width="1"/>
<path d="M1841.5 2.5H1849.5V8.5H1841.5ZM1843.5 2.5V0.5H1851.5V6.5H1849.5" stroke="#000" stroke-width="1" fill="none"/>
<path d="M1887 0L1897 9M1897 0L1887 9" stroke="#000" stroke-width="1.1"/>
<rect x="1860.5" y="19.5" width="18" height="15" fill="#fff" stroke="#f3d5dd" stroke-width="1"/>
<rect x="1879.5" y="19.5" width="18" height="15" fill="#fff" stroke="#f3d5dd" stroke-width="1"/>
<rect x="1898.5" y="19.5" width="18" height="15" fill="#fff" stroke="#f3d5dd" stroke-width="1"/>
<path d="M1865 30H1871" stroke="#66788a" stroke-width="2"/>
<path d="M1884.5 27.5H1890.5V31H1884.5ZM1886.5 27V24.5H1892.5V28.5H1890.5" stroke="#66788a" stroke-width="1.3" fill="none"/>
<path d="M1904 24L1910 30M1910 24L1904 30" stroke="#66788a" stroke-width="1.8"/>
<g transform="translate(5 18)"><path d="M1 0H9.5L14 4.5V12.5H1Z" fill="#2f5ea3"/><path d="M9.5 0L14 4.5H9.5Z" fill="#c9d3e3"/><path d="M3.8 0V7M1 3.2H7" stroke="#fff" stroke-width="1.3"/><circle cx="3.8" cy="3.2" r="0.9" fill="#fff"/><path d="M0 7L15 12.5V15.8H0Z" fill="#f4cb12"/><path d="M0 15.3H15" stroke="#d8a90c" stroke-width="1"/><path d="M1 8L14 12.8" stroke="#fbe58a" stroke-width=".9"/></g>
<text class="cj" x="27.2" y="31" font-size="11.7" fill="#000">文件</text>
<text x="0" y="0" font-size="12" font-family='"Liberation Sans", sans-serif' fill="#000" transform="translate(51.7 30.8) scale(0.82 1)" xml:space="preserve">(F)</text>
<text class="cj" x="79.3" y="31" font-size="11.7" fill="#000">编辑</text>
<text x="0" y="0" font-size="12" font-family='"Liberation Sans", sans-serif' fill="#000" transform="translate(103.7 30.8) scale(0.81 1)" xml:space="preserve">(E)</text>
<text class="cj" x="132.3" y="31" font-size="11.7" fill="#000">视图</text>
<text x="0" y="0" font-size="12" font-family='"Liberation Sans", sans-serif' fill="#000" transform="translate(156.7 30.8) scale(0.91 1)" xml:space="preserve">(V)</text>
<text class="cj" x="186.3" y="31" font-size="11.7" fill="#000">插入</text>
<text x="0" y="0" font-size="12" font-family='"Liberation Sans", sans-serif' fill="#000" transform="translate(210.7 30.8) scale(0.88 1)" xml:space="preserve">(I)</text>
<text class="cj" x="236.2" y="31" font-size="11.7" fill="#000">格式</text>
<text x="0" y="0" font-size="12" font-family='"Liberation Sans", sans-serif' fill="#000" transform="translate(260.7 30.8) scale(0.92 1)" xml:space="preserve">(O)</text>
<text class="cj" x="292.4" y="31" font-size="11.7" fill="#000">工具</text>
<text x="0" y="0" font-size="12" font-family='"Liberation Sans", sans-serif' fill="#000" transform="translate(316.7 30.8) scale(0.85 1)" xml:space="preserve">(T)</text>
<text class="cj" x="345.2" y="31" font-size="11.7" fill="#000">绘图</text>
<text x="0" y="0" font-size="12" font-family='"Liberation Sans", sans-serif' fill="#000" transform="translate(369.7 30.8) scale(0.92 1)" xml:space="preserve">(D)</text>
<text class="cj" x="400.6" y="31" font-size="11.7" fill="#000">标注</text>
<text x="0" y="0" font-size="12" font-family='"Liberation Sans", sans-serif' fill="#000" transform="translate(425.2 30.8) scale(0.97 1)" xml:space="preserve">(N)</text>
<text class="cj" x="456.4" y="31" font-size="11.7" fill="#000">修改</text>
<text x="0" y="0" font-size="12" font-family='"Liberation Sans", sans-serif' fill="#000" transform="translate(481.1 30.8) scale(1 1)" xml:space="preserve">(M)</text>
<text class="cj" x="515" y="31" font-size="11.7" fill="#000">窗口</text>
<text x="0" y="0" font-size="12" font-family='"Liberation Sans", sans-serif' fill="#000" transform="translate(539.1 30.8) scale(0.93 1)" xml:space="preserve">(W)</text>
<text class="cj" x="572.8" y="31" font-size="11.7" fill="#000">帮助</text>
<text x="0" y="0" font-size="12" font-family='"Liberation Sans", sans-serif' fill="#000" transform="translate(597.1 30.8) scale(0.91 1)" xml:space="preserve">(H)</text>
<rect x="620.5" y="17.5" width="85" height="18" fill="#cce8ff" stroke="#99d1ff"/>
<text class="cj" x="627.2" y="31" font-size="11.9" fill="#000" textLength="71.8">管道线路设计</text>
<path d="M2 39h1v24h-1zM6 39h1v24h-1zM0 63h651v1h-651zM650 38h1v26h-1z" fill="#a3a3a3"/>
<path d="M81 43h1v18h-1zM179 43h1v18h-1zM300 43h1v18h-1zM378 43h1v18h-1zM476 43h1v18h-1zM620 43h1v18h-1z" fill="#8c8c8c"/>
<g transform="translate(13 44)"><defs><linearGradient id="gn" x1="0" y1="0" x2="1" y2="1"><stop offset="0" stop-color="#c4d5ee"/><stop offset=".5" stop-color="#f4f8fd"/><stop offset="1" stop-color="#b5c9e8"/></linearGradient></defs><path d="M0.5 2.5H11L15.5 6.5V14.5H0.5Z" fill="url(#gn)" stroke="#2f5f9e"/><path d="M11 2.5V6.5H15.5" fill="#fff" stroke="#2f5f9e"/></g>
<g transform="translate(36 44)"><path d="M1 5L6 2L9 4L14 2.5L12.5 11L5 15Z" fill="#e7c461" stroke="#b98d2b" stroke-width=".8"/><path d="M3 7L9 5L11 11L5 13Z" fill="#f6e3a3"/><path d="M6 8C9 8 11 10 11.5 13L13.5 12L12 16L8.5 14.5L10.3 13.7C10 11.5 8.5 10 6 10Z" fill="#1d3f73"/></g>
<g transform="translate(59 44)"><rect x="1.5" y="1.5" width="13" height="13" rx="1" fill="#5c8edb" stroke="#2c4f9c"/><rect x="3.8" y="2.5" width="8.4" height="5.8" fill="#eef4fc"/><path d="M5 4.2H11M5 6H11" stroke="#9db9e3" stroke-width=".9"/><rect x="4" y="10" width="8" height="4.5" fill="#1d3f73"/><rect x="5" y="10.6" width="2" height="3.9" fill="#e6eefa"/><rect x="9" y="10.6" width="2" height="3.9" fill="#9db9e3"/></g>
<g transform="translate(89 44)"><path d="M4.5 6.5L6 1.5H11.5L12 6.5Z" fill="#fff" stroke="#7d8aa5" stroke-width=".8"/><path d="M6.5 3.3H10.5M6.3 4.8H10.8" stroke="#b9c3d6" stroke-width=".7"/><path d="M1.5 8L4 6.2H12.5L14.5 8V11.5L12 13H4L1.5 11.5Z" fill="#e4e9f2" stroke="#4f5f86" stroke-width=".9"/><path d="M4.5 10.5H11.5V14.5H4.5Z" fill="#fff" stroke="#4f5f86" stroke-width=".8"/><path d="M2 8.5H14" stroke="#fff" stroke-width="1"/><path d="M11.8 9.3H13" stroke="#3c64c8" stroke-width="1"/></g>
<g transform="translate(112 44)"><path d="M1.5 1.5H10L13.5 4.5V11.5H1.5Z" fill="#d6e3f6" stroke="#6f9ad0"/><circle cx="9" cy="8" r="3.6" fill="#e9f1fb" stroke="#7f8da8" stroke-width="1.2"/><path d="M6.5 10.8L3.5 15" stroke="#b5651d" stroke-width="1.8"/></g>
<g transform="translate(135 44)"><circle cx="11" cy="5" r="4.6" fill="#7cc7ea"/><path d="M8.5 1.5C10.5 0 13 0.5 14.8 2.5C13 3.2 12.6 5.5 14.8 7.5C13.5 9.2 10.5 9.8 8.5 8Z" fill="#2f7f6a" opacity=".75"/><path d="M0.8 2.8L6.5 1L8.5 6L2.8 8Z" fill="#f4c92e" stroke="#b98d2b" stroke-width=".6"/><circle cx="4" cy="3.6" r=".7" fill="#fff"/><circle cx="5.6" cy="5" r=".7" fill="#fff"/><path d="M1.5 10L5 8.3H12L14.5 10V13L12 14.5H4L1.5 13Z" fill="#e4e9f2" stroke="#4f5f86" stroke-width=".8"/><path d="M4.5 11.5H11.5V15.5H4.5Z" fill="#fff" stroke="#4f5f86" stroke-width=".7"/></g>
<g transform="translate(158 44)"><path d="M1 6L6.5 10V16L1 11.5Z" fill="#d7deea" stroke="#a9b4c9" stroke-width=".5"/><path d="M6.5 10L9 8.5V14L6.5 16Z" fill="#b9c4d8"/><circle cx="10.5" cy="5.5" r="5" fill="#3f8fd8"/><path d="M7.5 8.5C8 5 10 2.5 12.5 1.2" stroke="#d63b2f" stroke-width="1.1" fill="none"/><path d="M6 4.2C8.5 5.8 12.5 5.8 15 4" stroke="#d63b2f" stroke-width="1.1" fill="none"/><path d="M6.2 7.5C9 6.5 12 7.5 14 9" stroke="#e8d23b" stroke-width="1.1" fill="none"/><path d="M12 1C14 3.5 14 7 12 10" stroke="#49b85a" stroke-width="1" fill="none"/></g>
<g transform="translate(187 44)"><path d="M0.5 5L11 9.5M0.5 10L11 7" stroke="#333" stroke-width="1.1" fill="none"/><circle cx="13" cy="6" r="2" fill="none" stroke="#1d3f73" stroke-width="1.2"/><circle cx="13" cy="11.5" r="2" fill="none" stroke="#1d3f73" stroke-width="1.2"/></g>
<g transform="translate(210 44)"><path d="M1.5 1.5H8L10.5 4V11.5H1.5Z" fill="#dbe7f7" stroke="#2f5f9e"/><path d="M5.5 5.5H12L14.5 8V15.5H5.5Z" fill="#e9f1fb" stroke="#2f5f9e"/></g>
<g transform="translate(232 44)"><path d="M3 3L8 1L14 5L15 11L8 15.5L2 12L1 6Z" fill="#e8cf73" stroke="#a8882a" stroke-width=".9"/><path d="M3.5 5H9L11.5 7.5V12H3.5Z" fill="#e6eefa" stroke="#2f5f9e" stroke-width=".9"/><path d="M5 1.5H9V4H5Z" fill="#d9dfe9" stroke="#7d8aa5" stroke-width=".7"/></g>
<g transform="translate(256 44)"><path d="M14 2L7 9.5" stroke="#c8793a" stroke-width="2.2"/><path d="M7.5 8.5L9 10L3 14.5L1 14.5L4 11Z" fill="#1f2f2a"/><path d="M13.8 2.2L12.6 3.4" stroke="#7a3f18" stroke-width="2.2"/></g>
<g transform="translate(278 44)"><path d="M11 0.5L6 8H9L6.5 13L14 6H10.5L13.5 0.5Z" fill="#f6d33b" stroke="#a9891f" stroke-width=".7"/><rect x="2.5" y="8.5" width="7" height="6" fill="#f39a5a" stroke="#2f5f9e"/><rect x="1" y="13" width="2.4" height="2.4" fill="#1f5fd0"/></g>
<g transform="translate(307 44)"><path d="M2 10L8 14L7.2 10.5C8 6 11 3.5 15 3C10 1 5 3.5 4.3 8.5L1.5 7Z" fill="#1d3f73"/></g>
<g transform="translate(342 44)"><path d="M14 10L8 14L8.8 10.5C8 6 5 3.5 1 3C6 1 11 3.5 11.7 8.5L14.5 7Z" fill="#c9c9c9"/></g>
<g transform="translate(385 44)"><path d="M1 5L4 3L6 4L8 3.5L10 6L11 10L8 13L4 11Z" fill="#c98f88" stroke="#9d5f58" stroke-width=".6"/><path d="M8 13L11 10L14.5 12.5V15.5H9.5Z" fill="#2f5f9e"/><path d="M12.5 1V7M9.5 4H15.5" stroke="#2f5f9e" stroke-width="1"/><path d="M12.5 0L13.8 1.6H11.2ZM12.5 8L13.8 6.4H11.2ZM8.5 4L10.1 2.7V5.3ZM16.5 4L14.9 2.7V5.3Z" fill="#2f5f9e"/></g>
<g transform="translate(408 44)"><circle cx="6" cy="6" r="4.6" fill="#dcebf9" stroke="#8a97ad" stroke-width="1.3"/><path d="M9.5 9.5L14.5 15" stroke="#b5651d" stroke-width="2"/><path d="M13.5 0.5V4.5M11.5 2.5H15.5M11.5 6.5H15.5" stroke="#1b2a55" stroke-width="1"/></g>
<g transform="translate(431 44)"><circle cx="6.5" cy="6" r="4.8" fill="#dcebf9" stroke="#8a97ad" stroke-width="1.3"/><rect x="3.8" y="3.5" width="5" height="4.5" fill="none" stroke="#1d3f73" stroke-width="1.1"/><path d="M10 9.5L14 14" stroke="#b5651d" stroke-width="2"/><path d="M16 13V16H13Z" fill="#000"/></g>
<g transform="translate(454 44)"><circle cx="6" cy="7" r="4.6" fill="#dcebf9" stroke="#8a97ad" stroke-width="1.3"/><path d="M9.5 10.5L14.5 16" stroke="#b5651d" stroke-width="2"/><path d="M4 8L3 3.5L6.5 4.5L5.7 5.5C8 4 11 3 14 1.5C12.5 5 9.5 6.5 6.8 6.8L7.3 8Z" fill="#1d3f73"/></g>
<g transform="translate(483 44)"><path d="M0.5 0.5H3V3H0.5Z" fill="#f0f"/><path d="M3 0.5H5.5V3H3Z" fill="#00f"/><path d="M5.5 .5H8V3H5.5Z" fill="#0c0"/><path d="M8 .5H10.5V3H8Z" fill="#ff0"/><path d="M10.5 .5H13V3H10.5Z" fill="#f80"/><path d="M13 .5H15V3H13Z" fill="#f00"/><path d="M4 6L10 3.5L14 5L12 9L6 10Z" fill="#c98f88" stroke="#9d5f58" stroke-width=".5"/><path d="M1.5 8H7V10.5H1.5ZM2 11.5H7.5V15H2Z" fill="#c3d1e6" stroke="#6b7fa5" stroke-width=".6"/><path d="M9.5 15.5L12.5 8L15.5 15.5M10.6 13H14.4" stroke="#000" stroke-width="1.1" fill="none"/></g>
<g transform="translate(506 44)"><rect x="0.8" y="0.8" width="14.4" height="14.4" fill="#dce9f8" stroke="#1d3f73" stroke-width="1.4"/><rect x="1.8" y="1.8" width="4" height="12.4" fill="#fff"/><path d="M3 3H5M3 5.5H5M3 8H5M3 10.5H5M3 13H5" stroke="#e2b800" stroke-width="1.3"/><rect x="7.5" y="3" width="2.6" height="2.6" fill="#e9f0fa" stroke="#2f5f9e" stroke-width=".8"/><rect x="11.5" y="3" width="2.6" height="2.6" fill="#e9f0fa" stroke="#2f5f9e" stroke-width=".8"/><rect x="7.5" y="7" width="2.6" height="2.6" fill="#e9f0fa" stroke="#2f5f9e" stroke-width=".8"/><rect x="11.5" y="7" width="2.6" height="2.6" fill="#f2e15a" stroke="#2f5f9e" stroke-width=".8"/><rect x="10" y="11" width="3" height="3" fill="#f2e15a" stroke="#2f5f9e" stroke-width=".8"/></g>
<g transform="translate(529 44)"><path d="M0.8 0.8H7L9.5 3.5V15.2H0.8Z" fill="#dce9f8" stroke="#1d3f73" stroke-width="1.3"/><rect x="2.8" y="3" width="2.4" height="2.4" fill="#f2e15a" stroke="#2f5f9e" stroke-width=".7"/><rect x="2.8" y="7" width="2.4" height="2.4" fill="#fff" stroke="#2f5f9e" stroke-width=".7"/><rect x="2.8" y="11" width="2.4" height="2.4" fill="#f2e15a" stroke="#2f5f9e" stroke-width=".7"/><path d="M8 4C11 3 13.5 5.5 14 9" stroke="#1d3f73" stroke-width="1.6" fill="none"/><path d="M11.8 8.5H16L14 11.5Z" fill="#1d3f73"/><rect x="12.5" y="12" width="3" height="3" fill="#f2e15a" stroke="#2f5f9e" stroke-width=".8"/></g>
<g transform="translate(552 44)"><rect x="0" y="1" width="16" height="14" fill="#5d95cf"/><path d="M0 3L8 1.5L16 8V13L7 8L0 9Z" fill="#c9cdd4"/><path d="M0 6L7 4.5L16 11" stroke="#eef1f5" stroke-width="1.8" fill="none"/><path d="M0 9L7 8L16 14.5V15H12L5 11L0 12Z" fill="#9aa1ad"/></g>
<g transform="translate(575 44)"><path d="M6 6H15.5V15.5H6Z" fill="#d5dae3" stroke="#6b7280" stroke-width=".7"/><path d="M5 5H14.5V14.5H5Z" fill="#e6eaf0" stroke="#6b7280" stroke-width=".7"/><path d="M4 4H13.5V13.5H4Z" fill="#dbe6f5" stroke="#6b7fa5" stroke-width=".7"/><path d="M3.5 2.2C1.2 1 0 4.3 2.3 5.2C0.5 7 2.3 10 4.8 9C5.8 11.8 9.5 11.4 9.7 9C12.6 10 13.8 6.6 11.6 5.3C13.2 3 10.4 0.4 8.6 2.2C7.4 0 4.2 0 3.5 2.2Z" fill="#fdf3ef" stroke="#e8512e" stroke-width="1.7"/></g>
<g transform="translate(598 44)"><rect x="2" y="0.5" width="12" height="15" fill="#111"/><rect x="3.5" y="2" width="9" height="2.6" fill="#7aa67c"/><path d="M4 6.5H6V8.3H4ZM7 6.5H9V8.3H7ZM10 6.5H12V8.3H10Z" fill="#e02020"/><path d="M4 9.5H6V11.3H4ZM7 9.5H9V11.3H7ZM10 9.5H12V11.3H10ZM4 12.5H6V14.3H4ZM7 12.5H9V14.3H7ZM10 12.5H12V14.3H10Z" fill="#fff"/></g>
<g transform="translate(627 44)"><rect x="0.5" y="1" width="15" height="14" rx="2.5" fill="#2f62ad"/><path d="M1 12C5 9 11 9 15 12V13C15 14.5 14 15 13 15H3C1.5 15 1 14 1 13Z" fill="#1d4587"/><path d="M5 6C5 2.6 11 2.6 11 6C11 8 8.5 8 8.5 10.2" stroke="#fff" stroke-width="2.2" fill="none"/><rect x="7.3" y="11.5" width="2.4" height="2.2" fill="#fff"/></g>
<g transform="translate(331 50)"><path d="M0 0H6L3 3Z" fill="#1a237e"/></g>
<g transform="translate(367 50)"><path d="M0 0H6L3 3Z" fill="#b9bdc9"/></g>
<path d="M657 39h1v24h-1zM661 39h1v24h-1zM654 63h396v1h-396zM1049 38h1v26h-1z" fill="#a3a3a3"/>
<g transform="translate(668 44)"><path d="M1 14L6 1.5H7.5L12.3 14M3 9.8H10.4" stroke="#111" stroke-width="1.7" fill="none"/><path d="M15.5 5.5L10.5 11.5" stroke="#c8793a" stroke-width="2.2"/><path d="M11 10.5L12 12L7.5 15.8L5.5 15.8L8.5 12.5Z" fill="#1f2f2a"/></g>
<rect x="688.5" y="41.5" width="99" height="21" fill="#fff" stroke="#7a7a7a"/>
<path d="M775 50.5L779 54.5L783 50.5" fill="none" stroke="#444" stroke-width="1.1"/>
<text x="0" y="0" font-size="12" font-family='"Liberation Mono", monospace' fill="#000" transform="translate(693 55) scale(0.83 1)" xml:space="preserve">Hbz</text>
<path d="M790 43h1v18h-1z" fill="#8c8c8c"/>
<g transform="translate(797 44)"><path d="M15 1L9 9" stroke="#c8793a" stroke-width="1.8"/><path d="M9.5 8L10.5 9.5L6.5 12.5L5 12.5L7 10Z" fill="#1f2f2a"/><path d="M1 10V16M15.5 10V16M1 13.5H15.5" stroke="#000" stroke-width="1.1" fill="none"/><path d="M1 13.5L4 12V15ZM15.5 13.5L12.5 12V15Z" fill="#000"/></g>
<rect x="817.5" y="41.5" width="99" height="21" fill="#fff" stroke="#7a7a7a"/>
<path d="M904 50.5L908 54.5L912 50.5" fill="none" stroke="#444" stroke-width="1.1"/>
<text x="0" y="0" font-size="12" font-family='"Liberation Mono", monospace' fill="#000" transform="translate(821 55) scale(0.83 1)" xml:space="preserve">STANDARD</text>
<path d="M919 43h1v18h-1z" fill="#8c8c8c"/>
<g transform="translate(926 44)"><rect x="0.5" y="4" width="13" height="11" fill="#dfe9f7" stroke="#6f9ad0"/><rect x="0.5" y="4" width="13" height="3" fill="#5d8fd6"/><path d="M0.5 10H13.5M0.5 12.7H13.5M5 7V15M9.3 7V15" stroke="#6f9ad0" stroke-width=".9"/><path d="M15.5 1L9 8.5" stroke="#c8793a" stroke-width="1.8"/><path d="M9.5 7.5L10.5 9L5.5 12.5L4 12.5L6.5 9.5Z" fill="#1f2f2a"/></g>
<rect x="946.5" y="41.5" width="99" height="21" fill="#fff" stroke="#7a7a7a"/>
<path d="M1033 50.5L1037 54.5L1041 50.5" fill="none" stroke="#444" stroke-width="1.1"/>
<text x="0" y="0" font-size="12" font-family='"Liberation Mono", monospace' fill="#000" transform="translate(950 55) scale(0.83 1)" xml:space="preserve">Standard</text>
<path d="M2 67h1v24h-1zM6 67h1v24h-1z" fill="#a3a3a3"/>
<rect x="10.5" y="69.5" width="174" height="21" fill="#fff" stroke="#7a7a7a"/>
<path d="M172 78.5L176 82.5L180 78.5" fill="none" stroke="#444" stroke-width="1.1"/>
<text x="0" y="0" font-size="12" font-family='"Liberation Mono", monospace' fill="#000" transform="translate(19 83) scale(0.83 1)" xml:space="preserve">AutoCAD</text>
<text class="cm" x="67.2" y="83.7" font-size="11.7" fill="#000">经典</text>
<g transform="translate(188 72)"><rect x="0" y="0" width="16" height="16" fill="#3d6fb3"/><path d="M8 1L9.2 3.2L11.5 2L12 4.5L14.5 4.8L13.5 7L15.5 8.5L13.5 10L14.3 12.3L12 12.5L11.3 14.8L9.2 13.6L8 15.6L6.8 13.6L4.7 14.8L4 12.5L1.7 12.3L2.5 10L0.5 8.5L2.5 7L1.5 4.8L4 4.5L4.5 2L6.8 3.2Z" fill="#d9dde3" stroke="#555" stroke-width=".6"/><circle cx="8" cy="8.3" r="3.3" fill="#666"/><circle cx="8" cy="8.3" r="1.8" fill="#4f86cf"/></g>
<g transform="translate(211 72)"><rect x="0.5" y="0.5" width="15" height="15" fill="#e6e9ee" stroke="#9aa7bd" stroke-dasharray="1.5 1.5"/><path d="M1.5 8.5L8 2.5L14.5 8.5H13V14.5H3V8.5Z" fill="#1a1a1a"/></g>
<path d="M234 66h1v26h-1zM241 67h1v24h-1zM245 67h1v24h-1z" fill="#a3a3a3"/>
<g transform="translate(252 72)"><path d="M1 11L8 8L15 11L8 14.5Z" fill="#b8cde8" stroke="#6f8fbd" stroke-width=".6"/><path d="M1 8L8 5L15 8L8 11.5Z" fill="#c9dcf3" stroke="#6f8fbd" stroke-width=".6"/><path d="M1 5L8 2L15 5L8 8.5Z" fill="#dce9f8" stroke="#6f8fbd" stroke-width=".6"/></g>
<rect x="272.5" y="69.5" width="299" height="21" fill="#fff" stroke="#7a7a7a"/>
<path d="M559 78.5L563 82.5L567 78.5" fill="none" stroke="#444" stroke-width="1.1"/>
<g transform="translate(278 73)"><path d="M5 1C1.5 1 0.5 5.5 3.3 8V10.5H6.7V8C9.5 5.5 8.5 1 5 1Z" fill="#fdf6b8" stroke="#c9a227" stroke-width="1"/><path d="M3.3 11.5H6.7V13.5H3.3Z" fill="#8c99b3"/></g>
<g transform="translate(293 73.5)"><rect x="0" y="0" width="13" height="13" fill="#f7e36a" opacity=".35"/><circle cx="6.5" cy="6.5" r="6" fill="#f5df5a" stroke="#2f62ad" stroke-width="1"/></g>
<g transform="translate(309 73)"><circle cx="6" cy="5.5" r="5" fill="#f3d94e" stroke="#d8b62a" stroke-width="1.6" stroke-dasharray="1.4 1.2"/><rect x="7" y="8" width="6.5" height="5.5" fill="#eef3fb" stroke="#2f62ad" stroke-width="1"/></g>
<g transform="translate(327 72.5)"><path d="M2 7V4C2 0.5 8 0.5 8 4V5" stroke="#b5a51e" stroke-width="1.7" fill="none"/><rect x="6" y="5.5" width="8" height="8" fill="#e9e07a" stroke="#a39a21" stroke-width="1"/><path d="M8 8H12M8 10H12" stroke="#a39a21" stroke-width=".8"/></g>
<path d="M343 75.5h10v9.5h-10z" fill="#000"/>
<text x="357.5" y="84" font-size="11.5" font-family='"Liberation Sans", sans-serif' fill="#000" xml:space="preserve">0</text>
<g transform="translate(575 72)"><path d="M1 4L8 1.5L15 4L8 7Z" fill="#dce9f8" stroke="#8fa6c9" stroke-width=".6"/><path d="M1 7L8 4.5L15 7L8 10Z" fill="#c9dcf3" stroke="#8fa6c9" stroke-width=".6"/><path d="M1 10L8 7.5L15 10L8 13.5Z" fill="#f0d338" stroke="#b89a1c" stroke-width=".6"/><path d="M0 15.5L3.5 12M3.8 11.7V14.2M3.8 11.7H1.3" stroke="#1b2a6b" stroke-width="1.3" fill="none"/></g>
<g transform="translate(598 72)"><path d="M1 12L8 9.5L15 12L8 15Z" fill="#b8cde8" stroke="#6f8fbd" stroke-width=".6"/><path d="M1 9.5L8 7L15 9.5L8 12.5Z" fill="#c9dcf3" stroke="#6f8fbd" stroke-width=".6"/><path d="M1 7L8 4.5L15 7L8 10Z" fill="#dce9f8" stroke="#6f8fbd" stroke-width=".6"/><path d="M4 6L6 1L8.3 2.6C11 1 14 2.5 13.5 6C12.5 4 10.5 3.6 9.5 4.5L11 6.5Z" fill="#1d3f73"/></g>
<path d="M621 66h1v26h-1zM628 67h1v24h-1zM632 67h1v24h-1z" fill="#a3a3a3"/>
<rect x="636.5" y="69.5" width="149" height="21" fill="#fff" stroke="#7a7a7a"/>
<path d="M773 78.5L777 82.5L781 78.5" fill="none" stroke="#444" stroke-width="1.1"/>
<path d="M642 75.5h9.5v9.5h-9.5z" fill="#000"/>
<text x="0" y="0" font-size="12" font-family='"Liberation Mono", monospace' fill="#000" transform="translate(656 84) scale(0.83 1)" xml:space="preserve">ByLayer</text>
<path d="M788 71h1v18h-1z" fill="#8c8c8c"/>
<rect x="792.5" y="69.5" width="159" height="21" fill="#fff" stroke="#7a7a7a"/>
<path d="M939 78.5L943 82.5L947 78.5" fill="none" stroke="#444" stroke-width="1.1"/>
<path d="M797 80h59.5v1h-59.5z" fill="#000"/>
<text x="0" y="0" font-size="12" font-family='"Liberation Mono", monospace' fill="#000" transform="translate(861.5 84) scale(0.83 1)" xml:space="preserve">ByLayer</text>
<path d="M954 71h1v18h-1z" fill="#8c8c8c"/>
<rect x="958.5" y="69.5" width="124" height="21" fill="#fff" stroke="#7a7a7a"/>
<path d="M1070 78.5L1074 82.5L1078 78.5" fill="none" stroke="#444" stroke-width="1.1"/>
<path d="M962.5 80h35.5v1h-35.5z" fill="#000"/>
<text x="0" y="0" font-size="12" font-family='"Liberation Mono", monospace' fill="#000" transform="translate(1003 84) scale(0.83 1)" xml:space="preserve">ByLayer</text>
<path d="M1085 71h1v18h-1z" fill="#8c8c8c"/>
<rect x="1089.5" y="69.5" width="119" height="21" fill="#fafafa" stroke="#bdbdbd"/>
<path d="M1196 78.5L1200 82.5L1204 78.5" fill="none" stroke="#9a9a9a" stroke-width="1.1"/>
<text class="cj" x="1099.2" y="84.2" font-size="11.4" fill="#6d6d6d" textLength="34.2">随颜色</text>
<path d="M1212 66h1v26h-1z" fill="#a3a3a3"/>
<path d="M0 90h1213v2h-1213z" fill="#808080"/>
<path d="M0 97h19v1h-19zM0 101h19v1h-19zM19 95h1v3h-1zM19 99h1v3h-1zM26 97h19v1h-19zM26 101h19v1h-19zM45 95h1v3h-1zM45 99h1v3h-1z" fill="#a3a3a3"/>
<path d="M21 93h1v435h-1z" fill="#a0a0a0"/>
<path d="M0 527h22v1h-22z" fill="#b5b5b5"/>
<path d="M47 93h1v391h-1z" fill="#a0a0a0"/>
<path d="M22 483h26v1h-26z" fill="#b5b5b5"/>
<g transform="translate(1.5 107.6)"><path d="M2 14L14 2" stroke="#000" stroke-width="1.2"/><rect x="0.5" y="12.5" width="3" height="3" fill="#1f5fd0"/><rect x="12.5" y="0.5" width="3" height="3" fill="#1f5fd0"/></g>
<g transform="translate(1.5 129.6)"><path d="M2 14L14 2" stroke="#000" stroke-width="1.2"/><path d="M0.5 15.5L5 13.5L2.5 11ZM15.5 0.5L11 2.5L13.5 5Z" fill="#000"/><rect x="6.5" y="6.5" width="3" height="3" fill="#1f5fd0"/></g>
<g transform="translate(1.5 151.6)"><path d="M1.5 12H10C15 12 15 4.5 10 4.5" stroke="#1d3f73" stroke-width="1.3" fill="none"/><rect x="0" y="10.5" width="3" height="3" fill="#1f5fd0"/><rect x="8.5" y="10.5" width="3" height="3" fill="#1f5fd0"/><rect x="8.5" y="3" width="3" height="3" fill="#1f5fd0"/></g>
<g transform="translate(1.5 173.6)"><path d="M8 1.5L14.5 6.5L12 14.5H4L1.5 6.5Z" fill="#cfdff3" stroke="#000" stroke-width="1.3"/></g>
<g transform="translate(1.5 195.6)"><rect x="1.5" y="3.5" width="13" height="8" fill="#dfeaf8" stroke="#000" stroke-width="1.3"/><rect x="0" y="10" width="3" height="3" fill="#1f5fd0"/><rect x="13" y="2" width="3" height="3" fill="#1f5fd0"/></g>
<g transform="translate(1.5 217.6)"><path d="M1.5 15C2 8 7 3 14 1.5" stroke="#000" stroke-width="1.3" fill="none"/><rect x="0" y="13" width="3" height="3" fill="#1f5fd0"/><rect x="5" y="4.5" width="3" height="3" fill="#1f5fd0"/><rect x="12.5" y="0" width="3" height="3" fill="#1f5fd0"/></g>
<g transform="translate(1.5 239.6)"><circle cx="8" cy="8" r="6.5" fill="#e7effa" stroke="#000" stroke-width="1.3"/><path d="M8 8L12.5 3.5" stroke="#2f5f9e" stroke-width="1.2"/><rect x="6.5" y="6.5" width="3" height="3" fill="#1f5fd0"/></g>
<g transform="translate(1.5 261.6)"><path d="M4 2.5C6 0.5 9 1 9.5 3C12 1.5 15 3.5 13.5 6.5C16 8 14.5 11.5 12 11C12 14 8.5 15 7 13C5 15 1.5 13.5 2.5 10.5C0 9.5 0.5 6 3 6C1.5 4.5 2.5 2.5 4 2.5Z" fill="#e1ebf8" stroke="#000" stroke-width="1.3"/></g>
<g transform="translate(1.5 283.6)"><path d="M1 13C4 4 7 5 8 9C9 13 12 12 15 2" stroke="#000" stroke-width="1.3" fill="none"/></g>
<g transform="translate(1.5 305.6)"><ellipse cx="8" cy="8" rx="7" ry="4.3" fill="#cfdff3" stroke="#000" stroke-width="1.3"/><rect x="6.5" y="2.3" width="3" height="3" fill="#1f5fd0"/><rect x="6.5" y="10.8" width="3" height="3" fill="#1f5fd0"/><rect x="13" y="6.5" width="3" height="3" fill="#1f5fd0"/></g>
<g transform="translate(1.5 327.6)"><path d="M5 12C0 10 0.5 4 8 3.8C15.5 3.8 16 10 11 12" fill="#cfdff3" stroke="#000" stroke-width="1.3"/><rect x="3.5" y="10.5" width="3" height="3" fill="#1f5fd0"/><rect x="9.5" y="10.5" width="3" height="3" fill="#1f5fd0"/></g>
<g transform="translate(1.5 349.6)"><path d="M5 1H12L15 4V12H5Z" fill="#dfeaf8" stroke="#7f9bc6" stroke-width=".8"/><rect x="2" y="4" width="7" height="5.5" fill="#f0dc6a" stroke="#2f5f9e" stroke-width="1"/><circle cx="8.5" cy="11" r="3" fill="#f0dc6a" stroke="#2f5f9e" stroke-width="1"/><rect x="0.5" y="8" width="2.6" height="2.6" fill="#1f5fd0"/><path d="M16 13V16H13Z" fill="#000"/></g>
<g transform="translate(1.5 371.6)"><rect x="3" y="3" width="7" height="5.5" fill="#f0dc6a" stroke="#2f5f9e" stroke-width="1"/><circle cx="10" cy="10.5" r="3.2" fill="#f0dc6a" stroke="#2f5f9e" stroke-width="1"/><rect x="1.5" y="7" width="2.6" height="2.6" fill="#1f5fd0"/></g>
<g transform="translate(1.5 393.6)"><rect x="6.5" y="6.5" width="3" height="3" fill="#1f5fd0"/></g>
<g transform="translate(1.5 415.6)"><rect x="3" y="3" width="10" height="10" fill="#e9f0fa"/><path d="M3 6L6 3M3 9L9 3M3 12L12 3M4 13L13 4M7 13L13 7M10 13L13 10" stroke="#222" stroke-width=".9"/><path d="M3 0.5V15.5M13 0.5V15.5M0.5 3H15.5M0.5 13H15.5" stroke="#2f5f9e" stroke-width="1.3"/></g>
<g transform="translate(1.5 437.6)"><defs><linearGradient id="gg" x1="0" y1="0" x2="1" y2="1"><stop offset="0" stop-color="#26355c"/><stop offset=".6" stop-color="#8a8c50"/><stop offset="1" stop-color="#2e3550"/></linearGradient></defs><rect x="3" y="3" width="10" height="10" fill="url(#gg)"/><path d="M3 0.5V15.5M13 0.5V15.5M0.5 3H15.5M0.5 13H15.5" stroke="#000" stroke-width="1.5"/></g>
<g transform="translate(1.5 459.6)"><path d="M1 2H10L15.5 7V14H1Z" fill="#b9cde9" stroke="#1d3f73" stroke-width="1.2"/><circle cx="7" cy="8.5" r="3" fill="#fff" stroke="#1d3f73" stroke-width="1.2"/></g>
<g transform="translate(1.5 481.6)"><rect x="1.5" y="2" width="13" height="12" fill="#eaf1fb" stroke="#6f9ad0"/><rect x="1.5" y="2" width="13" height="3" fill="#5d8fd6"/><path d="M1.5 8H14.5M1.5 11H14.5M6 5V14M10.3 5V14" stroke="#6f9ad0" stroke-width="1"/></g>
<text x="2.6" y="517" font-size="18" font-family='"Liberation Sans", sans-serif' fill="#000" xml:space="preserve">A</text>
<g transform="translate(27 107.6)"><path d="M14.5 1L6 10" stroke="#e9b64a" stroke-width="3.2"/><path d="M14.5 1L12 3.7" stroke="#2a4f9b" stroke-width="3.2"/><path d="M6.8 9L4.6 11.4" stroke="#e58f84" stroke-width="3.2"/><path d="M0.5 13.5H13" stroke="#000" stroke-width="1"/></g>
<g transform="translate(27 129.6)"><circle cx="4.5" cy="4" r="3" fill="#dfeaf8" stroke="#000" stroke-width="1.1"/><circle cx="9" cy="9.5" r="3" fill="#dfeaf8" stroke="#000" stroke-width="1.1"/><circle cx="11.5" cy="12" r="3" fill="#dfeaf8" stroke="#000" stroke-width="1.1"/><path d="M8 2.5C11 1.5 13.5 3 13.5 6" stroke="#1d3f73" stroke-width="1.5" fill="none"/><path d="M11.5 5.5H15.5L13.5 8.5Z" fill="#1d3f73"/></g>
<g transform="translate(27 151.6)"><path d="M1 14L6 2.5V14Z" fill="#fff" stroke="#000" stroke-width="1.1"/><path d="M15 14L10 2.5V14Z" fill="#b9cde9" stroke="#000" stroke-width="1.1"/><path d="M8 0V16" stroke="#1f5fd0" stroke-width="1"/></g>
<g transform="translate(27 173.6)"><path d="M1 13.5C1 10 3 9.5 4.5 9.5V6C4.5 1.5 11.5 1.5 11.5 6V9.5H15" stroke="#000" stroke-width="1.2" fill="none"/><path d="M3 14.5H15M3 12H8V6.5C8 5.5 8.5 5 9 6" stroke="#1f5fd0" stroke-width="1.2" fill="none"/></g>
<g transform="translate(27 195.6)"><rect x="1" y="1" width="5.5" height="5.5" fill="#e9f0fa" stroke="#000" stroke-width="1.2"/><rect x="9.5" y="1" width="5.5" height="5.5" fill="#e9f0fa" stroke="#000" stroke-width="1.2"/><rect x="1" y="9.5" width="5.5" height="5.5" fill="#e9f0fa" stroke="#000" stroke-width="1.2"/><rect x="9.5" y="9.5" width="5.5" height="5.5" fill="#e9f0fa" stroke="#000" stroke-width="1.2"/></g>
<g transform="translate(27 217.6)"><path d="M8 1V15M1 8H15" stroke="#2f5f9e" stroke-width="1.8"/><path d="M8 0L10.8 3.5H5.2ZM8 16L10.8 12.5H5.2ZM0 8L3.5 5.2V10.8ZM16 8L12.5 5.2V10.8Z" fill="#2f5f9e"/></g>
<g transform="translate(27 239.6)"><path d="M5 3.5A6 6 0 1 0 11.5 3.8" stroke="#2f5f9e" stroke-width="2" fill="none"/><path d="M2 1L7 1.5L4.5 6Z" fill="#2f5f9e"/></g>
<g transform="translate(27 261.6)"><rect x="1" y="1" width="14" height="14" fill="#c9dcf3" stroke="#6f9ad0" stroke-width="1"/><rect x="1.5" y="7.5" width="7" height="7" fill="#eef3fb" stroke="#000" stroke-width="1.1" stroke-dasharray="1.2 1.2"/></g>
<g transform="translate(27 283.6)"><path d="M1 1.5H7V15H1Z" fill="#fff" stroke="#000" stroke-width="1.2"/><path d="M7 1.5L15 15H7Z" fill="#b9cde9" stroke="#000" stroke-width="1.1"/><path d="M7 1.5V15" stroke="#000" stroke-dasharray="1.5 1.5" stroke-width="1"/></g>
<g transform="translate(27 305.6)"><path d="M0.5 8H5" stroke="#000" stroke-width="1.2"/><path d="M9 8H16" stroke="#1f5fd0" stroke-width="1.1" stroke-dasharray="1.5 1.5"/><path d="M10 1L5 15" stroke="#1f5fd0" stroke-width="1.3"/></g>
<g transform="translate(27 327.6)"><path d="M0.5 10H9" stroke="#000" stroke-width="1.1" stroke-dasharray="2 1.5"/><path d="M15 1L10 15" stroke="#1f5fd0" stroke-width="1.3"/></g>
<g transform="translate(27 349.6)"><path d="M1.5 14.5V3.5H14.5V14.5Z" fill="#dfeaf8" stroke="#000" stroke-width="1.2"/><rect x="6.5" y="2" width="3" height="3" fill="#1f5fd0"/></g>
<g transform="translate(27 371.6)"><path d="M5 3.5H1.5V14.5H14.5V3.5H11" fill="#dfeaf8" stroke="#000" stroke-width="1.2"/><rect x="4" y="2" width="3" height="3" fill="#1f5fd0"/><rect x="9.5" y="2" width="3" height="3" fill="#1f5fd0"/></g>
<g transform="translate(27 393.6)"><path d="M0 8H16" stroke="#000" stroke-width="1.2"/><path d="M4.5 5L8 8L4.5 11ZM11.5 5L8 8L11.5 11Z" fill="#1d3f73"/></g>
<g transform="translate(27 415.6)"><path d="M2 15V6L7 1.5H15" stroke="#000" stroke-width="1.3" fill="none"/><path d="M2 6V1.5H7" stroke="#000" stroke-width="1" stroke-dasharray="1.2 1.2" fill="none"/><path d="M2.5 6.5L7.5 2" stroke="#1f5fd0" stroke-width="1.6"/></g>
<g transform="translate(27 437.6)"><path d="M2 15V9C2 4 6 1.5 15 1.5" stroke="#000" stroke-width="1.3" fill="none"/><path d="M2 9V1.5H9" stroke="#000" stroke-width="1" stroke-dasharray="1.2 1.2" fill="none"/><path d="M2.3 9C2.3 4.5 5 2.2 10 1.9" stroke="#1f5fd0" stroke-width="1.8" fill="none"/></g>
<g transform="translate(27 459.6)"><path d="M1 15L5 8L10 4L12 6L8 11Z" fill="#d8262b"/><path d="M3.5 9L2 6.5M6 12L9 14M4 13L1 12.5M7 6L5.5 3" stroke="#f2c71e" stroke-width="1.2"/><path d="M11 4L15 0.5M13 5L15.5 4.5M10.5 2.5L11.5 0.5" stroke="#8a97ad" stroke-width=".9"/><path d="M9.5 4L12 6.5" stroke="#333" stroke-width="1.6"/></g>
<path d="M1895 97h15v1h-15zM1895 101h15v1h-15z" fill="#a3a3a3"/>
<g transform="translate(1896 107)"><rect x="0.5" y="0.5" width="7" height="7" fill="#eef3fb" stroke="#2b5b9b"/><rect x="4" y="4" width="8" height="8" fill="#4f80b8" stroke="#2b5b9b"/><rect x="8.5" y="8.5" width="7" height="7" fill="#dfeaf8" stroke="#2b5b9b"/></g>
<g transform="translate(1896 129)"><rect x="0.5" y="0.5" width="7" height="7" fill="#eef3fb" stroke="#2b5b9b"/><rect x="4" y="4" width="8" height="8" fill="#4f80b8" stroke="#2b5b9b"/><rect x="8" y="9" width="7.5" height="6.5" fill="#dfeaf8" stroke="#2b5b9b"/></g>
<g transform="translate(1896 151)"><rect x="1" y="0.5" width="11" height="9" fill="#4f80b8" stroke="#1d3f73"/><rect x="5" y="5.5" width="10.5" height="8" fill="#dfeaf8" stroke="#2b5b9b"/></g>
<g transform="translate(1896 173)"><rect x="1" y="0.5" width="11" height="9" fill="#4f80b8" stroke="#1d3f73"/><rect x="5" y="5" width="10.5" height="8.5" fill="#e6eef9" stroke="#2b5b9b"/></g>
<path d="M1892 197h18v1h-18z" fill="#a3a3a3"/>
<path d="M50 905h1839v1h-1839z" fill="#000"/>
<path d="M50 906h1839v14h-1839z" fill="#fdfdfd"/>
<rect x="51" y="906" width="17" height="14" fill="#fdfdfd"/>
<path d="M68 906h1v14h-1z" fill="#c9c9c9"/>
<rect x="69" y="906" width="17" height="14" fill="#fdfdfd"/>
<path d="M86 906h1v14h-1z" fill="#c9c9c9"/>
<rect x="87" y="906" width="17" height="14" fill="#fdfdfd"/>
<path d="M104 906h1v14h-1z" fill="#c9c9c9"/>
<rect x="105" y="906" width="17" height="14" fill="#fdfdfd"/>
<path d="M122 906h1v14h-1z" fill="#c9c9c9"/>
<path d="M50 905h1v16h-1z" fill="#8a8a8a"/>
<path d="M55.5 908V918" stroke="#000" stroke-width="1.4"/><path d="M57 913L62 908.5V917.5Z" fill="#000"/>
<path d="M75 913L80 908.5V917.5Z" fill="#000"/>
<path d="M98 913L93 908.5V917.5Z" fill="#000"/>
<path d="M116 913L111 908.5V917.5Z" fill="#000"/><path d="M117.5 908V918" stroke="#000" stroke-width="1.4"/>
<path d="M126.5 906L131 919.5H160L164 906" fill="#fdfdfd" stroke="#000" stroke-width="1.1"/>
<path d="M163 905.5L167.5 919.5H209.5L214 905.5Z" fill="#fff" stroke="#000" stroke-width="1.1"/>
<path d="M164 905h49v1h-49z" fill="#fff"/>
<text class="cj" x="134" y="917.4" font-size="11.5" fill="#000">模型</text>
<text class="cj" x="170.2" y="917.4" font-size="11.5" fill="#000">平纵图</text>
<path d="M50 920h1840v1h-1840zM1889 94h1v827h-1z" fill="#f7e3e8"/>
<path d="M0 926h1910v2h-1910z" fill="#8e8e8e"/>
<path d="M6 936h1v69h-1zM10 936h1v69h-1zM3 1004h8v1h-8z" fill="#a3a3a3"/>
<path d="M14 939h1879v70h-1879z" fill="#fff"/>
<path d="M13 937h1897v2h-1897zM13 937h1.6v72h-1.6z" fill="#6f6f6f"/>
<path d="M14 989h1896v1h-1896z" fill="#8a8a8a"/>
<text x="15.7" y="950.6" font-size="11.9" font-family='"Liberation Mono", monospace' fill="#000" letter-spacing="0.86" xml:space="preserve">"</text>
<text class="cm" x="23.5" y="950.6" font-size="15" fill="#000" textLength="62">正在处理</text>
<text x="85.9" y="950.6" font-size="11.9" font-family='"Liberation Mono", monospace' fill="#000" letter-spacing="0.86" xml:space="preserve">C:\\Users\\1735\\Desktop\\H1041-101-X-</text>
<text class="cm" x="390.3" y="950.6" font-size="15" fill="#000" textLength="62.5">一般线路</text>
<text x="453.9" y="950.6" font-size="11.9" font-family='"Liberation Mono", monospace' fill="#000" letter-spacing="0.86" xml:space="preserve">\\YZDP10.dwg</text>
<text x="550.9" y="950.6" font-size="11.9" font-family='"Liberation Mono", monospace' fill="#000" xml:space="preserve">,</text>
<text class="cm" x="566.2" y="950.6" font-size="15" fill="#000" textLength="47">请稍候</text>
<text x="613.9" y="950.6" font-size="11.9" font-family='"Liberation Mono", monospace' fill="#000" letter-spacing="0.86" xml:space="preserve">....."</text>
<text x="15.5" y="966.6" font-size="11.9" font-family='"Liberation Mono", monospace' fill="#000" xml:space="preserve">2</text>
<text class="cm" x="15.7" y="982.8" font-size="15" fill="#000" textLength="31">命令</text>
<text x="48" y="982.6" font-size="12.5" font-family='"Liberation Mono", monospace' fill="#000" font-weight="bold" xml:space="preserve">:</text>
<text class="cm" x="15.7" y="1003.3" font-size="15" fill="#000" textLength="31">命令</text>
<text x="48" y="1003" font-size="12.5" font-family='"Liberation Mono", monospace' fill="#000" font-weight="bold" xml:space="preserve">:</text>
<path d="M1893 939h17v50h-17z" fill="#fbfbfb"/>
<path d="M1896.8 950.5L1900.4 946.7L1904 950.5M1896.8 978.7L1900.4 982.5L1904 978.7" stroke="#555" stroke-width="1.9" fill="none"/>
<path d="M1823 990h69v18h-69z" fill="#fafafa"/>
<path d="M1842 991.5h17v15.5h-17z" fill="#cdcdcd"/>
<path d="M1837 995L1832.5 999L1837 1003M1880.5 995L1885 999L1880.5 1003" stroke="#555" stroke-width="1.6" fill="none"/>
<path d="M0 1010h1910v1h-1910z" fill="#8e8e8e"/>
<path d="M0 1012h1910v1h-1910z" fill="#e6e6e6"/>
<rect x="1695.5" y="910.5" width="140" height="23" fill="#fdfdfd" stroke="#a9c6e0"/>
<g transform="translate(1686 920.5) rotate(-13)"><rect x="-12" y="-11.5" width="24" height="23" rx="3.5" fill="#2eb818"/><path d="M6.5 -5.5C1 -8.5 -7.5 -6 -6 -1.5C-4.5 2 6 -0.5 6.5 3C7 6.5 -3 7.5 -7.5 4.5" stroke="#fff" stroke-width="3.2" fill="none" stroke-linecap="round"/></g>
<text class="cj" x="1706" y="928.4" font-size="14" font-weight="bold" fill="#4a4f63">五</text>
<path d="M1738.3 915.8A6.9 6.9 0 1 1 1729 926A10.5 10.5 0 0 0 1738.3 915.8Z" fill="#4a4f63"/>
<circle cx="1753.5" cy="919" r="1.7" fill="none" stroke="#4a4f63" stroke-width="1.1"/><path d="M1759 923.5H1761.8V925.5C1761.8 927 1760.8 928 1759.3 928.5V927.3C1760 927 1760.3 926.5 1760.3 926H1759Z" fill="#4a4f63"/>
<rect x="1771.6" y="916.6" width="14.8" height="10.8" rx="1.5" fill="none" stroke="#4a4f63" stroke-width="1.4"/><path d="M1774 919.5H1784M1774 922H1784" stroke="#4a4f63" stroke-width="1.3" stroke-dasharray="1.5 1.3"/><path d="M1775.5 924.7H1782.5" stroke="#4a4f63" stroke-width="1.3"/>
<circle cx="1802" cy="918.3" r="3" fill="#4a4f63"/><path d="M1796 924C1798 921.5 1806 921.5 1808 924L1806.5 926H1805.5V928.5H1798.5V926H1797.5Z" fill="#4a4f63"/>
<circle cx="1819.3" cy="918.8" r="3.1" fill="#4a4f63"/><circle cx="1825.7" cy="918.8" r="2.4" fill="none" stroke="#4a4f63" stroke-width="1.5"/><circle cx="1819.3" cy="925.2" r="3.1" fill="#4a4f63"/><circle cx="1825.7" cy="925.2" r="3.1" fill="#4a4f63"/><rect x="1820" y="919.5" width="5" height="5" fill="#4a4f63"/>
</svg>
</body></html>
